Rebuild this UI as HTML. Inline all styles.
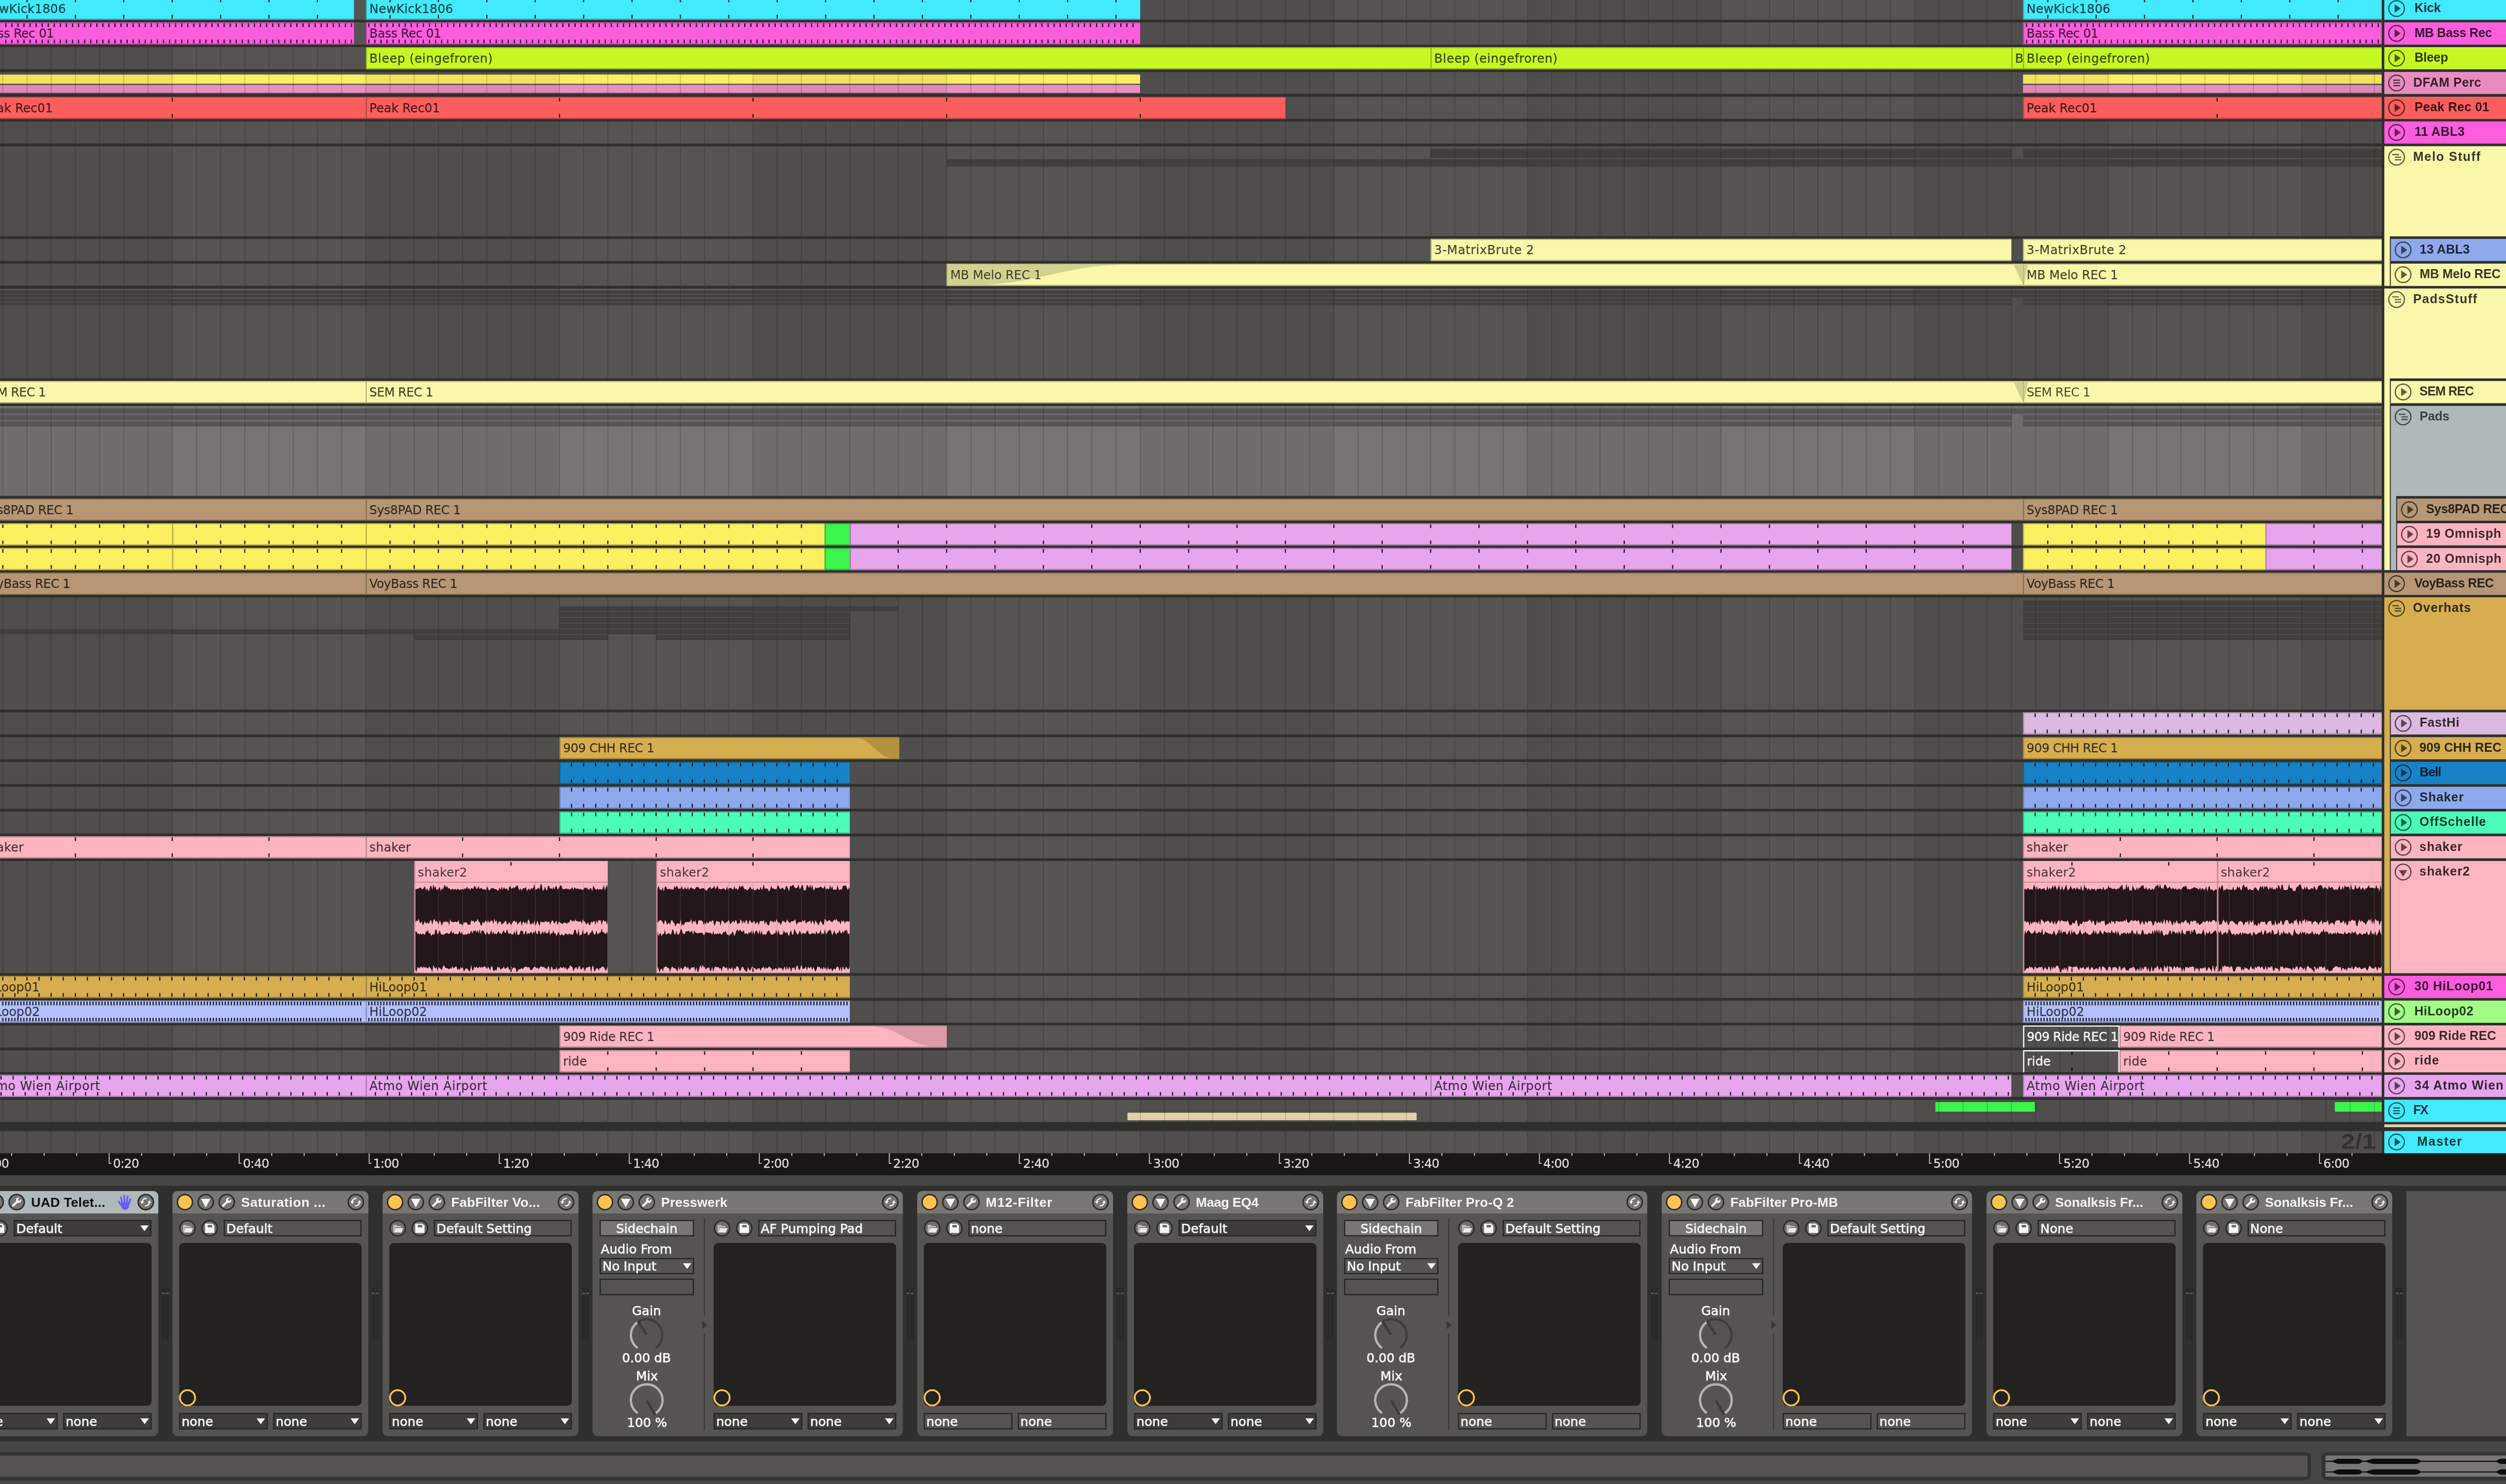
<!DOCTYPE html>
<html lang="en"><head><meta charset="utf-8"><title>Ableton Live - Arrangement</title>
<style>
html,body{margin:0;padding:0;background:#2f2f2d;overflow:hidden}
body{width:5035px;height:2961px}
svg{display:block;will-change:transform;filter:blur(.75px)}
.tr{font-family:"DejaVu Sans","Liberation Sans",sans-serif;font-weight:400}
.tb{font-family:"Liberation Sans","DejaVu Sans",sans-serif;font-weight:700}
text{white-space:pre}
</style></head><body>
<svg width="5035" height="2961" viewBox="0 0 5035 2961">
<rect x="0" y="0" width="5035" height="2301" fill="#2f2f2d"/>
<rect x="0" y="0" width="4752" height="39.5" fill="#4f4e4c"/>
<rect x="343.6" y="0" width="386.3" height="39.5" fill="#555452"/>
<rect x="1116.2" y="0" width="386.3" height="39.5" fill="#555452"/>
<rect x="1888.7" y="0" width="386.3" height="39.5" fill="#555452"/>
<rect x="2661.3" y="0" width="386.3" height="39.5" fill="#555452"/>
<rect x="3433.8" y="0" width="386.3" height="39.5" fill="#555452"/>
<rect x="4206.4" y="0" width="386.3" height="39.5" fill="#555452"/>
<rect x="0" y="44.6" width="4752" height="44.4" fill="#4f4e4c"/>
<rect x="343.6" y="44.6" width="386.3" height="44.4" fill="#555452"/>
<rect x="1116.2" y="44.6" width="386.3" height="44.4" fill="#555452"/>
<rect x="1888.7" y="44.6" width="386.3" height="44.4" fill="#555452"/>
<rect x="2661.3" y="44.6" width="386.3" height="44.4" fill="#555452"/>
<rect x="3433.8" y="44.6" width="386.3" height="44.4" fill="#555452"/>
<rect x="4206.4" y="44.6" width="386.3" height="44.4" fill="#555452"/>
<rect x="0" y="94.1" width="4752" height="44.2" fill="#4f4e4c"/>
<rect x="343.6" y="94.1" width="386.3" height="44.2" fill="#555452"/>
<rect x="1116.2" y="94.1" width="386.3" height="44.2" fill="#555452"/>
<rect x="1888.7" y="94.1" width="386.3" height="44.2" fill="#555452"/>
<rect x="2661.3" y="94.1" width="386.3" height="44.2" fill="#555452"/>
<rect x="3433.8" y="94.1" width="386.3" height="44.2" fill="#555452"/>
<rect x="4206.4" y="94.1" width="386.3" height="44.2" fill="#555452"/>
<rect x="0" y="143.5" width="4752" height="44" fill="#4f4e4c"/>
<rect x="343.6" y="143.5" width="386.3" height="44" fill="#555452"/>
<rect x="1116.2" y="143.5" width="386.3" height="44" fill="#555452"/>
<rect x="1888.7" y="143.5" width="386.3" height="44" fill="#555452"/>
<rect x="2661.3" y="143.5" width="386.3" height="44" fill="#555452"/>
<rect x="3433.8" y="143.5" width="386.3" height="44" fill="#555452"/>
<rect x="4206.4" y="143.5" width="386.3" height="44" fill="#555452"/>
<rect x="0" y="193" width="4752" height="44.4" fill="#4f4e4c"/>
<rect x="343.6" y="193" width="386.3" height="44.4" fill="#555452"/>
<rect x="1116.2" y="193" width="386.3" height="44.4" fill="#555452"/>
<rect x="1888.7" y="193" width="386.3" height="44.4" fill="#555452"/>
<rect x="2661.3" y="193" width="386.3" height="44.4" fill="#555452"/>
<rect x="3433.8" y="193" width="386.3" height="44.4" fill="#555452"/>
<rect x="4206.4" y="193" width="386.3" height="44.4" fill="#555452"/>
<rect x="0" y="242.3" width="4752" height="44.3" fill="#4f4e4c"/>
<rect x="343.6" y="242.3" width="386.3" height="44.3" fill="#555452"/>
<rect x="1116.2" y="242.3" width="386.3" height="44.3" fill="#555452"/>
<rect x="1888.7" y="242.3" width="386.3" height="44.3" fill="#555452"/>
<rect x="2661.3" y="242.3" width="386.3" height="44.3" fill="#555452"/>
<rect x="3433.8" y="242.3" width="386.3" height="44.3" fill="#555452"/>
<rect x="4206.4" y="242.3" width="386.3" height="44.3" fill="#555452"/>
<rect x="0" y="291.7" width="4752" height="179.8" fill="#4f4e4c"/>
<rect x="343.6" y="291.7" width="386.3" height="179.8" fill="#555452"/>
<rect x="1116.2" y="291.7" width="386.3" height="179.8" fill="#555452"/>
<rect x="1888.7" y="291.7" width="386.3" height="179.8" fill="#555452"/>
<rect x="2661.3" y="291.7" width="386.3" height="179.8" fill="#555452"/>
<rect x="3433.8" y="291.7" width="386.3" height="179.8" fill="#555452"/>
<rect x="4206.4" y="291.7" width="386.3" height="179.8" fill="#555452"/>
<rect x="0" y="476.7" width="4752" height="44.1" fill="#4f4e4c"/>
<rect x="343.6" y="476.7" width="386.3" height="44.1" fill="#555452"/>
<rect x="1116.2" y="476.7" width="386.3" height="44.1" fill="#555452"/>
<rect x="1888.7" y="476.7" width="386.3" height="44.1" fill="#555452"/>
<rect x="2661.3" y="476.7" width="386.3" height="44.1" fill="#555452"/>
<rect x="3433.8" y="476.7" width="386.3" height="44.1" fill="#555452"/>
<rect x="4206.4" y="476.7" width="386.3" height="44.1" fill="#555452"/>
<rect x="0" y="526" width="4752" height="44.5" fill="#4f4e4c"/>
<rect x="343.6" y="526" width="386.3" height="44.5" fill="#555452"/>
<rect x="1116.2" y="526" width="386.3" height="44.5" fill="#555452"/>
<rect x="1888.7" y="526" width="386.3" height="44.5" fill="#555452"/>
<rect x="2661.3" y="526" width="386.3" height="44.5" fill="#555452"/>
<rect x="3433.8" y="526" width="386.3" height="44.5" fill="#555452"/>
<rect x="4206.4" y="526" width="386.3" height="44.5" fill="#555452"/>
<rect x="0" y="575.6" width="4752" height="179.7" fill="#4f4e4c"/>
<rect x="343.6" y="575.6" width="386.3" height="179.7" fill="#555452"/>
<rect x="1116.2" y="575.6" width="386.3" height="179.7" fill="#555452"/>
<rect x="1888.7" y="575.6" width="386.3" height="179.7" fill="#555452"/>
<rect x="2661.3" y="575.6" width="386.3" height="179.7" fill="#555452"/>
<rect x="3433.8" y="575.6" width="386.3" height="179.7" fill="#555452"/>
<rect x="4206.4" y="575.6" width="386.3" height="179.7" fill="#555452"/>
<rect x="0" y="760.2" width="4752" height="44.3" fill="#4f4e4c"/>
<rect x="343.6" y="760.2" width="386.3" height="44.3" fill="#555452"/>
<rect x="1116.2" y="760.2" width="386.3" height="44.3" fill="#555452"/>
<rect x="1888.7" y="760.2" width="386.3" height="44.3" fill="#555452"/>
<rect x="2661.3" y="760.2" width="386.3" height="44.3" fill="#555452"/>
<rect x="3433.8" y="760.2" width="386.3" height="44.3" fill="#555452"/>
<rect x="4206.4" y="760.2" width="386.3" height="44.3" fill="#555452"/>
<rect x="0" y="809.8" width="4752" height="179.9" fill="#6e6d69"/>
<rect x="343.6" y="809.8" width="386.3" height="179.9" fill="#767571"/>
<rect x="1116.2" y="809.8" width="386.3" height="179.9" fill="#767571"/>
<rect x="1888.7" y="809.8" width="386.3" height="179.9" fill="#767571"/>
<rect x="2661.3" y="809.8" width="386.3" height="179.9" fill="#767571"/>
<rect x="3433.8" y="809.8" width="386.3" height="179.9" fill="#767571"/>
<rect x="4206.4" y="809.8" width="386.3" height="179.9" fill="#767571"/>
<rect x="0" y="994.9" width="4752" height="44.1" fill="#4f4e4c"/>
<rect x="343.6" y="994.9" width="386.3" height="44.1" fill="#555452"/>
<rect x="1116.2" y="994.9" width="386.3" height="44.1" fill="#555452"/>
<rect x="1888.7" y="994.9" width="386.3" height="44.1" fill="#555452"/>
<rect x="2661.3" y="994.9" width="386.3" height="44.1" fill="#555452"/>
<rect x="3433.8" y="994.9" width="386.3" height="44.1" fill="#555452"/>
<rect x="4206.4" y="994.9" width="386.3" height="44.1" fill="#555452"/>
<rect x="0" y="1044.1" width="4752" height="44.2" fill="#4f4e4c"/>
<rect x="343.6" y="1044.1" width="386.3" height="44.2" fill="#555452"/>
<rect x="1116.2" y="1044.1" width="386.3" height="44.2" fill="#555452"/>
<rect x="1888.7" y="1044.1" width="386.3" height="44.2" fill="#555452"/>
<rect x="2661.3" y="1044.1" width="386.3" height="44.2" fill="#555452"/>
<rect x="3433.8" y="1044.1" width="386.3" height="44.2" fill="#555452"/>
<rect x="4206.4" y="1044.1" width="386.3" height="44.2" fill="#555452"/>
<rect x="0" y="1093.5" width="4752" height="44" fill="#4f4e4c"/>
<rect x="343.6" y="1093.5" width="386.3" height="44" fill="#555452"/>
<rect x="1116.2" y="1093.5" width="386.3" height="44" fill="#555452"/>
<rect x="1888.7" y="1093.5" width="386.3" height="44" fill="#555452"/>
<rect x="2661.3" y="1093.5" width="386.3" height="44" fill="#555452"/>
<rect x="3433.8" y="1093.5" width="386.3" height="44" fill="#555452"/>
<rect x="4206.4" y="1093.5" width="386.3" height="44" fill="#555452"/>
<rect x="0" y="1142.7" width="4752" height="44.3" fill="#4f4e4c"/>
<rect x="343.6" y="1142.7" width="386.3" height="44.3" fill="#555452"/>
<rect x="1116.2" y="1142.7" width="386.3" height="44.3" fill="#555452"/>
<rect x="1888.7" y="1142.7" width="386.3" height="44.3" fill="#555452"/>
<rect x="2661.3" y="1142.7" width="386.3" height="44.3" fill="#555452"/>
<rect x="3433.8" y="1142.7" width="386.3" height="44.3" fill="#555452"/>
<rect x="4206.4" y="1142.7" width="386.3" height="44.3" fill="#555452"/>
<rect x="0" y="1191.8" width="4752" height="224.5" fill="#4f4e4c"/>
<rect x="343.6" y="1191.8" width="386.3" height="224.5" fill="#555452"/>
<rect x="1116.2" y="1191.8" width="386.3" height="224.5" fill="#555452"/>
<rect x="1888.7" y="1191.8" width="386.3" height="224.5" fill="#555452"/>
<rect x="2661.3" y="1191.8" width="386.3" height="224.5" fill="#555452"/>
<rect x="3433.8" y="1191.8" width="386.3" height="224.5" fill="#555452"/>
<rect x="4206.4" y="1191.8" width="386.3" height="224.5" fill="#555452"/>
<rect x="0" y="1421.3" width="4752" height="44.3" fill="#4f4e4c"/>
<rect x="343.6" y="1421.3" width="386.3" height="44.3" fill="#555452"/>
<rect x="1116.2" y="1421.3" width="386.3" height="44.3" fill="#555452"/>
<rect x="1888.7" y="1421.3" width="386.3" height="44.3" fill="#555452"/>
<rect x="2661.3" y="1421.3" width="386.3" height="44.3" fill="#555452"/>
<rect x="3433.8" y="1421.3" width="386.3" height="44.3" fill="#555452"/>
<rect x="4206.4" y="1421.3" width="386.3" height="44.3" fill="#555452"/>
<rect x="0" y="1470.8" width="4752" height="44.2" fill="#4f4e4c"/>
<rect x="343.6" y="1470.8" width="386.3" height="44.2" fill="#555452"/>
<rect x="1116.2" y="1470.8" width="386.3" height="44.2" fill="#555452"/>
<rect x="1888.7" y="1470.8" width="386.3" height="44.2" fill="#555452"/>
<rect x="2661.3" y="1470.8" width="386.3" height="44.2" fill="#555452"/>
<rect x="3433.8" y="1470.8" width="386.3" height="44.2" fill="#555452"/>
<rect x="4206.4" y="1470.8" width="386.3" height="44.2" fill="#555452"/>
<rect x="0" y="1520.1" width="4752" height="44.5" fill="#4f4e4c"/>
<rect x="343.6" y="1520.1" width="386.3" height="44.5" fill="#555452"/>
<rect x="1116.2" y="1520.1" width="386.3" height="44.5" fill="#555452"/>
<rect x="1888.7" y="1520.1" width="386.3" height="44.5" fill="#555452"/>
<rect x="2661.3" y="1520.1" width="386.3" height="44.5" fill="#555452"/>
<rect x="3433.8" y="1520.1" width="386.3" height="44.5" fill="#555452"/>
<rect x="4206.4" y="1520.1" width="386.3" height="44.5" fill="#555452"/>
<rect x="0" y="1569.8" width="4752" height="44.1" fill="#4f4e4c"/>
<rect x="343.6" y="1569.8" width="386.3" height="44.1" fill="#555452"/>
<rect x="1116.2" y="1569.8" width="386.3" height="44.1" fill="#555452"/>
<rect x="1888.7" y="1569.8" width="386.3" height="44.1" fill="#555452"/>
<rect x="2661.3" y="1569.8" width="386.3" height="44.1" fill="#555452"/>
<rect x="3433.8" y="1569.8" width="386.3" height="44.1" fill="#555452"/>
<rect x="4206.4" y="1569.8" width="386.3" height="44.1" fill="#555452"/>
<rect x="0" y="1619.1" width="4752" height="44.3" fill="#4f4e4c"/>
<rect x="343.6" y="1619.1" width="386.3" height="44.3" fill="#555452"/>
<rect x="1116.2" y="1619.1" width="386.3" height="44.3" fill="#555452"/>
<rect x="1888.7" y="1619.1" width="386.3" height="44.3" fill="#555452"/>
<rect x="2661.3" y="1619.1" width="386.3" height="44.3" fill="#555452"/>
<rect x="3433.8" y="1619.1" width="386.3" height="44.3" fill="#555452"/>
<rect x="4206.4" y="1619.1" width="386.3" height="44.3" fill="#555452"/>
<rect x="0" y="1668.6" width="4752" height="44" fill="#4f4e4c"/>
<rect x="343.6" y="1668.6" width="386.3" height="44" fill="#555452"/>
<rect x="1116.2" y="1668.6" width="386.3" height="44" fill="#555452"/>
<rect x="1888.7" y="1668.6" width="386.3" height="44" fill="#555452"/>
<rect x="2661.3" y="1668.6" width="386.3" height="44" fill="#555452"/>
<rect x="3433.8" y="1668.6" width="386.3" height="44" fill="#555452"/>
<rect x="4206.4" y="1668.6" width="386.3" height="44" fill="#555452"/>
<rect x="0" y="1717.9" width="4752" height="223.9" fill="#4f4e4c"/>
<rect x="343.6" y="1717.9" width="386.3" height="223.9" fill="#555452"/>
<rect x="1116.2" y="1717.9" width="386.3" height="223.9" fill="#555452"/>
<rect x="1888.7" y="1717.9" width="386.3" height="223.9" fill="#555452"/>
<rect x="2661.3" y="1717.9" width="386.3" height="223.9" fill="#555452"/>
<rect x="3433.8" y="1717.9" width="386.3" height="223.9" fill="#555452"/>
<rect x="4206.4" y="1717.9" width="386.3" height="223.9" fill="#555452"/>
<rect x="0" y="1947" width="4752" height="44.4" fill="#4f4e4c"/>
<rect x="343.6" y="1947" width="386.3" height="44.4" fill="#555452"/>
<rect x="1116.2" y="1947" width="386.3" height="44.4" fill="#555452"/>
<rect x="1888.7" y="1947" width="386.3" height="44.4" fill="#555452"/>
<rect x="2661.3" y="1947" width="386.3" height="44.4" fill="#555452"/>
<rect x="3433.8" y="1947" width="386.3" height="44.4" fill="#555452"/>
<rect x="4206.4" y="1947" width="386.3" height="44.4" fill="#555452"/>
<rect x="0" y="1996.5" width="4752" height="44.3" fill="#4f4e4c"/>
<rect x="343.6" y="1996.5" width="386.3" height="44.3" fill="#555452"/>
<rect x="1116.2" y="1996.5" width="386.3" height="44.3" fill="#555452"/>
<rect x="1888.7" y="1996.5" width="386.3" height="44.3" fill="#555452"/>
<rect x="2661.3" y="1996.5" width="386.3" height="44.3" fill="#555452"/>
<rect x="3433.8" y="1996.5" width="386.3" height="44.3" fill="#555452"/>
<rect x="4206.4" y="1996.5" width="386.3" height="44.3" fill="#555452"/>
<rect x="0" y="2046" width="4752" height="44.3" fill="#4f4e4c"/>
<rect x="343.6" y="2046" width="386.3" height="44.3" fill="#555452"/>
<rect x="1116.2" y="2046" width="386.3" height="44.3" fill="#555452"/>
<rect x="1888.7" y="2046" width="386.3" height="44.3" fill="#555452"/>
<rect x="2661.3" y="2046" width="386.3" height="44.3" fill="#555452"/>
<rect x="3433.8" y="2046" width="386.3" height="44.3" fill="#555452"/>
<rect x="4206.4" y="2046" width="386.3" height="44.3" fill="#555452"/>
<rect x="0" y="2095.3" width="4752" height="44.3" fill="#4f4e4c"/>
<rect x="343.6" y="2095.3" width="386.3" height="44.3" fill="#555452"/>
<rect x="1116.2" y="2095.3" width="386.3" height="44.3" fill="#555452"/>
<rect x="1888.7" y="2095.3" width="386.3" height="44.3" fill="#555452"/>
<rect x="2661.3" y="2095.3" width="386.3" height="44.3" fill="#555452"/>
<rect x="3433.8" y="2095.3" width="386.3" height="44.3" fill="#555452"/>
<rect x="4206.4" y="2095.3" width="386.3" height="44.3" fill="#555452"/>
<rect x="0" y="2144.6" width="4752" height="44.2" fill="#4f4e4c"/>
<rect x="343.6" y="2144.6" width="386.3" height="44.2" fill="#555452"/>
<rect x="1116.2" y="2144.6" width="386.3" height="44.2" fill="#555452"/>
<rect x="1888.7" y="2144.6" width="386.3" height="44.2" fill="#555452"/>
<rect x="2661.3" y="2144.6" width="386.3" height="44.2" fill="#555452"/>
<rect x="3433.8" y="2144.6" width="386.3" height="44.2" fill="#555452"/>
<rect x="4206.4" y="2144.6" width="386.3" height="44.2" fill="#555452"/>
<rect x="0" y="2194.2" width="4752" height="44.5" fill="#4f4e4c"/>
<rect x="343.6" y="2194.2" width="386.3" height="44.5" fill="#555452"/>
<rect x="1116.2" y="2194.2" width="386.3" height="44.5" fill="#555452"/>
<rect x="1888.7" y="2194.2" width="386.3" height="44.5" fill="#555452"/>
<rect x="2661.3" y="2194.2" width="386.3" height="44.5" fill="#555452"/>
<rect x="3433.8" y="2194.2" width="386.3" height="44.5" fill="#555452"/>
<rect x="4206.4" y="2194.2" width="386.3" height="44.5" fill="#555452"/>
<rect x="0" y="2256.7" width="4752" height="44.3" fill="#4f4e4c"/>
<rect x="343.6" y="2256.7" width="386.3" height="44.3" fill="#555452"/>
<rect x="1116.2" y="2256.7" width="386.3" height="44.3" fill="#555452"/>
<rect x="1888.7" y="2256.7" width="386.3" height="44.3" fill="#555452"/>
<rect x="2661.3" y="2256.7" width="386.3" height="44.3" fill="#555452"/>
<rect x="3433.8" y="2256.7" width="386.3" height="44.3" fill="#555452"/>
<rect x="4206.4" y="2256.7" width="386.3" height="44.3" fill="#555452"/>
<rect x="0" y="148.8" width="2275" height="18.2" fill="#f1e45a"/>
<rect x="343.6" y="148.8" width="386.3" height="18.2" fill="#fbef5f"/>
<rect x="1116.2" y="148.8" width="386.3" height="18.2" fill="#fbef5f"/>
<rect x="1888.7" y="148.8" width="386.3" height="18.2" fill="#fbef5f"/>
<rect x="4036.4" y="148.8" width="715.6" height="18.2" fill="#f1e45a"/>
<rect x="4206.4" y="148.8" width="386.3" height="18.2" fill="#fbef5f"/>
<rect x="0" y="169.5" width="2275" height="15.6" fill="#e088b8"/>
<rect x="343.6" y="169.5" width="386.3" height="15.6" fill="#ec8ec0"/>
<rect x="1116.2" y="169.5" width="386.3" height="15.6" fill="#ec8ec0"/>
<rect x="1888.7" y="169.5" width="386.3" height="15.6" fill="#ec8ec0"/>
<rect x="4036.4" y="169.5" width="715.6" height="15.6" fill="#e088b8"/>
<rect x="4206.4" y="169.5" width="386.3" height="15.6" fill="#ec8ec0"/>
<rect x="2854.4" y="297" width="1158.8" height="18.2" fill="#403f3d"/>
<rect x="4036.4" y="297" width="715.6" height="18.2" fill="#403f3d"/>
<rect x="1888.7" y="317.6" width="2863.3" height="15" fill="#403f3d"/>
<rect x="0" y="580" width="4752" height="6.4" fill="#403f3d"/>
<rect x="0" y="588.2" width="4752" height="5.3" fill="#403f3d"/>
<rect x="0" y="596" width="4013.3" height="5.6" fill="#403f3d"/>
<rect x="4036.4" y="596" width="715.6" height="5.6" fill="#403f3d"/>
<rect x="0" y="603.5" width="4013.3" height="5.7" fill="#403f3d"/>
<rect x="4036.4" y="603.5" width="715.6" height="5.7" fill="#403f3d"/>
<rect x="0" y="815.2" width="4752" height="10.4" fill="#575652"/>
<rect x="0" y="828" width="4013.3" height="10.3" fill="#575652"/>
<rect x="4036.4" y="828" width="715.6" height="10.3" fill="#575652"/>
<rect x="0" y="840.8" width="4013.3" height="10.2" fill="#575652"/>
<rect x="4036.4" y="840.8" width="715.6" height="10.2" fill="#575652"/>
<rect x="4036.4" y="1198.3" width="715.6" height="10" fill="#403f3d"/>
<rect x="4036.4" y="1209.8" width="715.6" height="10" fill="#403f3d"/>
<rect x="4036.4" y="1221.2" width="715.6" height="10" fill="#403f3d"/>
<rect x="4036.4" y="1232.6" width="715.6" height="10" fill="#403f3d"/>
<rect x="4036.4" y="1244.1" width="715.6" height="10" fill="#403f3d"/>
<rect x="4036.4" y="1255.5" width="715.6" height="10" fill="#403f3d"/>
<rect x="4036.4" y="1267" width="715.6" height="10" fill="#403f3d"/>
<rect x="1116.2" y="1209.8" width="676" height="10" fill="#403f3d"/>
<rect x="1116.2" y="1221.2" width="579.4" height="10" fill="#403f3d"/>
<rect x="1116.2" y="1232.6" width="579.4" height="10" fill="#403f3d"/>
<rect x="1116.2" y="1244.1" width="579.4" height="10" fill="#403f3d"/>
<rect x="0" y="1255.5" width="1695.6" height="10" fill="#403f3d"/>
<rect x="826.4" y="1267" width="386.3" height="10" fill="#403f3d"/>
<rect x="1309.3" y="1267" width="386.3" height="10" fill="#403f3d"/>
<rect x="3861.5" y="2199" width="198.5" height="19" fill="#3bf54b"/>
<rect x="4658.5" y="2199" width="93.5" height="19" fill="#3bf54b"/>
<rect x="2249.5" y="2220.2" width="577" height="15" fill="#e4d0a8"/>
<path d="M5.6 0V2301M53.9 0V2301M102.2 0V2301M150.5 0V2301M198.7 0V2301M247 0V2301M295.3 0V2301M343.6 0V2301M391.9 0V2301M440.2 0V2301M488.4 0V2301M536.7 0V2301M585 0V2301M633.3 0V2301M681.6 0V2301M729.9 0V2301M778.2 0V2301M826.4 0V2301M874.7 0V2301M923 0V2301M971.3 0V2301M1019.6 0V2301M1067.9 0V2301M1116.2 0V2301M1164.4 0V2301M1212.7 0V2301M1261 0V2301M1309.3 0V2301M1357.6 0V2301M1405.9 0V2301M1454.1 0V2301M1502.4 0V2301M1550.7 0V2301M1599 0V2301M1647.3 0V2301M1695.6 0V2301M1743.9 0V2301M1792.1 0V2301M1840.4 0V2301M1888.7 0V2301M1937 0V2301M1985.3 0V2301M2033.6 0V2301M2081.9 0V2301M2130.1 0V2301M2178.4 0V2301M2226.7 0V2301M2275 0V2301M2323.3 0V2301M2371.6 0V2301M2419.8 0V2301M2468.1 0V2301M2516.4 0V2301M2564.7 0V2301M2613 0V2301M2661.3 0V2301M2709.6 0V2301M2757.8 0V2301M2806.1 0V2301M2854.4 0V2301M2902.7 0V2301M2951 0V2301M2999.3 0V2301M3047.6 0V2301M3095.8 0V2301M3144.1 0V2301M3192.4 0V2301M3240.7 0V2301M3289 0V2301M3337.3 0V2301M3385.5 0V2301M3433.8 0V2301M3482.1 0V2301M3530.4 0V2301M3578.7 0V2301M3627 0V2301M3675.3 0V2301M3723.5 0V2301M3771.8 0V2301M3820.1 0V2301M3868.4 0V2301M3916.7 0V2301M3965 0V2301M4013.3 0V2301M4061.5 0V2301M4109.8 0V2301M4158.1 0V2301M4206.4 0V2301M4254.7 0V2301M4303 0V2301M4351.2 0V2301M4399.5 0V2301M4447.8 0V2301M4496.1 0V2301M4544.4 0V2301M4592.7 0V2301M4641 0V2301M4689.2 0V2301M4737.5 0V2301" stroke="#000" stroke-opacity=".17" stroke-width="1.9" fill="none"/>
<rect x="0" y="39.5" width="4752" height="5.1" fill="#2f2f2d"/>
<rect x="0" y="89" width="4752" height="5.1" fill="#2f2f2d"/>
<rect x="0" y="138.3" width="4752" height="5.2" fill="#2f2f2d"/>
<rect x="0" y="187.5" width="4752" height="5.5" fill="#2f2f2d"/>
<rect x="0" y="237.4" width="4752" height="4.9" fill="#2f2f2d"/>
<rect x="0" y="286.6" width="4752" height="5.1" fill="#2f2f2d"/>
<rect x="0" y="471.5" width="4752" height="5.2" fill="#2f2f2d"/>
<rect x="0" y="520.8" width="4752" height="5.2" fill="#2f2f2d"/>
<rect x="0" y="570.5" width="4752" height="5.1" fill="#2f2f2d"/>
<rect x="0" y="755.3" width="4752" height="4.9" fill="#2f2f2d"/>
<rect x="0" y="804.5" width="4752" height="5.3" fill="#2f2f2d"/>
<rect x="0" y="989.7" width="4752" height="5.2" fill="#2f2f2d"/>
<rect x="0" y="1039" width="4752" height="5.1" fill="#2f2f2d"/>
<rect x="0" y="1088.3" width="4752" height="5.2" fill="#2f2f2d"/>
<rect x="0" y="1137.5" width="4752" height="5.2" fill="#2f2f2d"/>
<rect x="0" y="1187" width="4752" height="4.8" fill="#2f2f2d"/>
<rect x="0" y="1416.3" width="4752" height="5" fill="#2f2f2d"/>
<rect x="0" y="1465.6" width="4752" height="5.2" fill="#2f2f2d"/>
<rect x="0" y="1515" width="4752" height="5.1" fill="#2f2f2d"/>
<rect x="0" y="1564.6" width="4752" height="5.2" fill="#2f2f2d"/>
<rect x="0" y="1613.9" width="4752" height="5.2" fill="#2f2f2d"/>
<rect x="0" y="1663.4" width="4752" height="5.2" fill="#2f2f2d"/>
<rect x="0" y="1712.6" width="4752" height="5.3" fill="#2f2f2d"/>
<rect x="0" y="1941.8" width="4752" height="5.2" fill="#2f2f2d"/>
<rect x="0" y="1991.4" width="4752" height="5.1" fill="#2f2f2d"/>
<rect x="0" y="2040.8" width="4752" height="5.2" fill="#2f2f2d"/>
<rect x="0" y="2090.3" width="4752" height="5" fill="#2f2f2d"/>
<rect x="0" y="2139.6" width="4752" height="5" fill="#2f2f2d"/>
<rect x="0" y="2188.8" width="4752" height="5.4" fill="#2f2f2d"/>
<rect x="0" y="2238.7" width="4752" height="18" fill="#2f2f2d"/>
<rect x="4752" y="0" width="5.2" height="2301" fill="#2f2f2d"/>
<rect x="0" y="0" width="706.3" height="39.5" fill="#41eafc"/>
<rect x="0" y="37.3" width="706.3" height="2.2" fill="#2ea8b5"/>
<clipPath id="c295"><rect x="0" y="0" width="705.8" height="39.5"/></clipPath>
<text class="tr" x="-35.5" y="25.6" font-size="24.4" fill="rgba(0,0,0,.72)" textLength="167" clip-path="url(#c295)" stroke="#000" stroke-opacity=".45" stroke-width=".35" paint-order="stroke">NewKick1806</text>
<rect x="729.9" y="0" width="1545.1" height="39.5" fill="#41eafc"/>
<rect x="729.9" y="37.3" width="1545.1" height="2.2" fill="#2ea8b5"/>
<rect x="729.9" y="0" width="2" height="39.5" fill="#2ea8b5"/>
<clipPath id="c300"><rect x="729.9" y="0" width="1544.6" height="39.5"/></clipPath>
<text class="tr" x="737.1" y="25.6" font-size="24.4" fill="rgba(0,0,0,.72)" textLength="167" clip-path="url(#c300)" stroke="#000" stroke-opacity=".45" stroke-width=".35" paint-order="stroke">NewKick1806</text>
<rect x="4036.4" y="0" width="715.6" height="39.5" fill="#41eafc"/>
<rect x="4036.4" y="37.3" width="715.6" height="2.2" fill="#2ea8b5"/>
<rect x="4036.4" y="0" width="2" height="39.5" fill="#2ea8b5"/>
<clipPath id="c305"><rect x="4036.4" y="0" width="715.1" height="39.5"/></clipPath>
<text class="tr" x="4043.6" y="25.6" font-size="24.4" fill="rgba(0,0,0,.72)" textLength="167" clip-path="url(#c305)" stroke="#000" stroke-opacity=".45" stroke-width=".35" paint-order="stroke">NewKick1806</text>
<path d="M53.9 -2.8v7.2M53.9 29.6v7.2M150.5 -2.8v7.2M150.5 29.6v7.2M247 -2.8v7.2M247 29.6v7.2M343.6 -2.8v7.2M343.6 29.6v7.2M440.2 -2.8v7.2M440.2 29.6v7.2M536.7 -2.8v7.2M536.7 29.6v7.2M633.3 -2.8v7.2M633.3 29.6v7.2M778.2 -2.8v7.2M778.2 29.6v7.2M874.7 -2.8v7.2M874.7 29.6v7.2M971.3 -2.8v7.2M971.3 29.6v7.2M1067.9 -2.8v7.2M1067.9 29.6v7.2M1164.4 -2.8v7.2M1164.4 29.6v7.2M1261 -2.8v7.2M1261 29.6v7.2M1357.6 -2.8v7.2M1357.6 29.6v7.2M1454.1 -2.8v7.2M1454.1 29.6v7.2M1550.7 -2.8v7.2M1550.7 29.6v7.2M1647.3 -2.8v7.2M1647.3 29.6v7.2M1743.9 -2.8v7.2M1743.9 29.6v7.2M1840.4 -2.8v7.2M1840.4 29.6v7.2M1937 -2.8v7.2M1937 29.6v7.2M2033.6 -2.8v7.2M2033.6 29.6v7.2M2130.1 -2.8v7.2M2130.1 29.6v7.2M2226.7 -2.8v7.2M2226.7 29.6v7.2M4085.7 -2.8v7.2M4085.7 29.6v7.2M4182.3 -2.8v7.2M4182.3 29.6v7.2M4278.8 -2.8v7.2M4278.8 29.6v7.2M4375.4 -2.8v7.2M4375.4 29.6v7.2M4472 -2.8v7.2M4472 29.6v7.2M4568.5 -2.8v7.2M4568.5 29.6v7.2M4665.1 -2.8v7.2M4665.1 29.6v7.2" stroke="#0a0a0a" stroke-opacity=".9" stroke-width="2.4" fill="none"/>
<rect x="0" y="44.6" width="706.3" height="44.4" fill="#fc5ddd"/>
<rect x="0" y="44.6" width="706.3" height="2" fill="#bf46a7"/>
<rect x="0" y="86.8" width="706.3" height="2.2" fill="#b5429f"/>
<clipPath id="c311"><rect x="0" y="44.6" width="705.8" height="44.4"/></clipPath>
<text class="tr" x="-35.5" y="75.2" font-size="24.4" fill="rgba(0,0,0,.72)" textLength="143.5" clip-path="url(#c311)" stroke="#000" stroke-opacity=".45" stroke-width=".35" paint-order="stroke">Bass Rec 01</text>
<rect x="729.9" y="44.6" width="1545.1" height="44.4" fill="#fc5ddd"/>
<rect x="729.9" y="44.6" width="1545.1" height="2" fill="#bf46a7"/>
<rect x="729.9" y="86.8" width="1545.1" height="2.2" fill="#b5429f"/>
<rect x="729.9" y="44.6" width="2" height="44.4" fill="#b5429f"/>
<clipPath id="c317"><rect x="729.9" y="44.6" width="1544.6" height="44.4"/></clipPath>
<text class="tr" x="737.1" y="75.2" font-size="24.4" fill="rgba(0,0,0,.72)" textLength="143.5" clip-path="url(#c317)" stroke="#000" stroke-opacity=".45" stroke-width=".35" paint-order="stroke">Bass Rec 01</text>
<rect x="4036.4" y="44.6" width="715.6" height="44.4" fill="#fc5ddd"/>
<rect x="4036.4" y="44.6" width="715.6" height="2" fill="#bf46a7"/>
<rect x="4036.4" y="86.8" width="715.6" height="2.2" fill="#b5429f"/>
<rect x="4036.4" y="44.6" width="2" height="44.4" fill="#b5429f"/>
<clipPath id="c323"><rect x="4036.4" y="44.6" width="715.1" height="44.4"/></clipPath>
<text class="tr" x="4043.6" y="75.2" font-size="24.4" fill="rgba(0,0,0,.72)" textLength="143.5" clip-path="url(#c323)" stroke="#000" stroke-opacity=".45" stroke-width=".35" paint-order="stroke">Bass Rec 01</text>
<line x1="10.4" y1="50.4" x2="702.3" y2="50.4" stroke="#0a0a0a" stroke-opacity=".9" stroke-width="7.2" stroke-dasharray="2.4 9.7"/>
<line x1="10.4" y1="82.7" x2="702.3" y2="82.7" stroke="#0a0a0a" stroke-opacity=".9" stroke-width="7.2" stroke-dasharray="2.4 9.7"/>
<line x1="734.7" y1="50.4" x2="2271" y2="50.4" stroke="#0a0a0a" stroke-opacity=".9" stroke-width="7.2" stroke-dasharray="2.4 9.7"/>
<line x1="734.7" y1="82.7" x2="2271" y2="82.7" stroke="#0a0a0a" stroke-opacity=".9" stroke-width="7.2" stroke-dasharray="2.4 9.7"/>
<line x1="4042.2" y1="50.4" x2="4748" y2="50.4" stroke="#0a0a0a" stroke-opacity=".9" stroke-width="7.2" stroke-dasharray="2.4 9.7"/>
<line x1="4042.2" y1="82.7" x2="4748" y2="82.7" stroke="#0a0a0a" stroke-opacity=".9" stroke-width="7.2" stroke-dasharray="2.4 9.7"/>
<rect x="729.9" y="94.1" width="2124.5" height="44.2" fill="#c5f823"/>
<rect x="729.9" y="94.1" width="2124.5" height="2" fill="#95bc1a"/>
<rect x="729.9" y="136.1" width="2124.5" height="2.2" fill="#8db219"/>
<rect x="729.9" y="94.1" width="2" height="44.2" fill="#8db219"/>
<clipPath id="c335"><rect x="729.9" y="94.1" width="2124" height="44.2"/></clipPath>
<text class="tr" x="737.1" y="124.7" font-size="24.4" fill="rgba(0,0,0,.72)" textLength="246" clip-path="url(#c335)" stroke="#000" stroke-opacity=".45" stroke-width=".35" paint-order="stroke">Bleep (eingefroren)</text>
<rect x="2854.4" y="94.1" width="1158.8" height="44.2" fill="#c5f823"/>
<rect x="2854.4" y="94.1" width="1158.8" height="2" fill="#95bc1a"/>
<rect x="2854.4" y="136.1" width="1158.8" height="2.2" fill="#8db219"/>
<rect x="2854.4" y="94.1" width="2" height="44.2" fill="#8db219"/>
<clipPath id="c341"><rect x="2854.4" y="94.1" width="1158.3" height="44.2"/></clipPath>
<text class="tr" x="2861.6" y="124.7" font-size="24.4" fill="rgba(0,0,0,.72)" textLength="246" clip-path="url(#c341)" stroke="#000" stroke-opacity=".45" stroke-width=".35" paint-order="stroke">Bleep (eingefroren)</text>
<rect x="4013.3" y="94.1" width="23.1" height="44.2" fill="#c5f823"/>
<rect x="4013.3" y="94.1" width="23.1" height="2" fill="#95bc1a"/>
<rect x="4013.3" y="136.1" width="23.1" height="2.2" fill="#8db219"/>
<rect x="4013.3" y="94.1" width="2" height="44.2" fill="#8db219"/>
<clipPath id="c347"><rect x="4013.3" y="94.1" width="22.6" height="44.2"/></clipPath>
<text class="tr" x="4020.5" y="124.7" font-size="24.4" fill="rgba(0,0,0,.72)" textLength="246" clip-path="url(#c347)" stroke="#000" stroke-opacity=".45" stroke-width=".35" paint-order="stroke">Bleep (eingefroren)</text>
<rect x="4036.4" y="94.1" width="715.6" height="44.2" fill="#c5f823"/>
<rect x="4036.4" y="94.1" width="715.6" height="2" fill="#95bc1a"/>
<rect x="4036.4" y="136.1" width="715.6" height="2.2" fill="#8db219"/>
<rect x="4036.4" y="94.1" width="2" height="44.2" fill="#8db219"/>
<clipPath id="c353"><rect x="4036.4" y="94.1" width="715.1" height="44.2"/></clipPath>
<text class="tr" x="4043.6" y="124.7" font-size="24.4" fill="rgba(0,0,0,.72)" textLength="246" clip-path="url(#c353)" stroke="#000" stroke-opacity=".45" stroke-width=".35" paint-order="stroke">Bleep (eingefroren)</text>
<rect x="0" y="193" width="729.9" height="44.4" fill="#fc5e5e"/>
<rect x="0" y="193" width="729.9" height="2" fill="#bf4747"/>
<rect x="0" y="235.2" width="729.9" height="2.2" fill="#b54343"/>
<clipPath id="c358"><rect x="0" y="193" width="729.4" height="44.4"/></clipPath>
<text class="tr" x="-35.5" y="223.6" font-size="24.4" fill="rgba(0,0,0,.72)" textLength="141" clip-path="url(#c358)" stroke="#000" stroke-opacity=".45" stroke-width=".35" paint-order="stroke">Peak Rec01</text>
<rect x="729.9" y="193" width="1834.8" height="44.4" fill="#fc5e5e"/>
<rect x="729.9" y="193" width="1834.8" height="2" fill="#bf4747"/>
<rect x="729.9" y="235.2" width="1834.8" height="2.2" fill="#b54343"/>
<rect x="729.9" y="193" width="2" height="44.4" fill="#b54343"/>
<clipPath id="c364"><rect x="729.9" y="193" width="1834.3" height="44.4"/></clipPath>
<text class="tr" x="737.1" y="223.6" font-size="24.4" fill="rgba(0,0,0,.72)" textLength="141" clip-path="url(#c364)" stroke="#000" stroke-opacity=".45" stroke-width=".35" paint-order="stroke">Peak Rec01</text>
<rect x="4036.4" y="193" width="715.6" height="44.4" fill="#fc5e5e"/>
<rect x="4036.4" y="193" width="715.6" height="2" fill="#bf4747"/>
<rect x="4036.4" y="235.2" width="715.6" height="2.2" fill="#b54343"/>
<rect x="4036.4" y="193" width="2" height="44.4" fill="#b54343"/>
<clipPath id="c370"><rect x="4036.4" y="193" width="715.1" height="44.4"/></clipPath>
<text class="tr" x="4043.6" y="223.6" font-size="24.4" fill="rgba(0,0,0,.72)" textLength="141" clip-path="url(#c370)" stroke="#000" stroke-opacity=".45" stroke-width=".35" paint-order="stroke">Peak Rec01</text>
<path d="M343.6 195.2v7.2M343.6 227.5v7.2M1116.2 195.2v7.2M1116.2 227.5v7.2M1502.4 195.2v7.2M1502.4 227.5v7.2M1888.7 195.2v7.2M1888.7 227.5v7.2M2275 195.2v7.2M2275 227.5v7.2M4423.7 195.2v7.2M4423.7 227.5v7.2" stroke="#0a0a0a" stroke-opacity=".9" stroke-width="2.4" fill="none"/>
<rect x="2854.4" y="476.7" width="1158.8" height="44.1" fill="#f9f7a9"/>
<rect x="2854.4" y="476.7" width="1158.8" height="2" fill="#bdbb80"/>
<rect x="2854.4" y="518.6" width="1158.8" height="2.2" fill="#b3b179"/>
<rect x="2854.4" y="476.7" width="2" height="44.1" fill="#b3b179"/>
<clipPath id="c377"><rect x="2854.4" y="476.7" width="1158.3" height="44.1"/></clipPath>
<text class="tr" x="2861.6" y="507.3" font-size="24.4" fill="rgba(0,0,0,.72)" textLength="199" clip-path="url(#c377)" stroke="#000" stroke-opacity=".45" stroke-width=".35" paint-order="stroke">3-MatrixBrute 2</text>
<rect x="4036.4" y="476.7" width="715.6" height="44.1" fill="#f9f7a9"/>
<rect x="4036.4" y="476.7" width="715.6" height="2" fill="#bdbb80"/>
<rect x="4036.4" y="518.6" width="715.6" height="2.2" fill="#b3b179"/>
<rect x="4036.4" y="476.7" width="2" height="44.1" fill="#b3b179"/>
<clipPath id="c383"><rect x="4036.4" y="476.7" width="715.1" height="44.1"/></clipPath>
<text class="tr" x="4043.6" y="507.3" font-size="24.4" fill="rgba(0,0,0,.72)" textLength="199" clip-path="url(#c383)" stroke="#000" stroke-opacity=".45" stroke-width=".35" paint-order="stroke">3-MatrixBrute 2</text>
<rect x="1888.7" y="526" width="2147.7" height="44.5" fill="#f9f7a9"/>
<rect x="1888.7" y="526" width="2147.7" height="2" fill="#bdbb80"/>
<rect x="1888.7" y="568.3" width="2147.7" height="2.2" fill="#b3b179"/>
<rect x="1888.7" y="526" width="2" height="44.5" fill="#b3b179"/>
<path d="M1890.7 568.5H1940C2070.2 568.5 2119.8 528 2250 528H1890.7z" fill="#d3d18f"/>
<polygon points="4017,527 4036.4,527 4036.4,568.5" fill="#d3d18f"/>
<text class="tr" x="1895.9" y="556.6" font-size="24.4" fill="rgba(0,0,0,.72)" textLength="182.5">MB Melo REC 1</text>
<rect x="4036.4" y="526" width="715.6" height="44.5" fill="#f9f7a9"/>
<rect x="4036.4" y="526" width="715.6" height="2" fill="#bdbb80"/>
<rect x="4036.4" y="568.3" width="715.6" height="2.2" fill="#b3b179"/>
<rect x="4036.4" y="526" width="2" height="44.5" fill="#b3b179"/>
<clipPath id="c396"><rect x="4036.4" y="526" width="715.1" height="44.5"/></clipPath>
<text class="tr" x="4043.6" y="556.6" font-size="24.4" fill="rgba(0,0,0,.72)" textLength="182.5" clip-path="url(#c396)" stroke="#000" stroke-opacity=".45" stroke-width=".35" paint-order="stroke">MB Melo REC 1</text>
<polygon points="4038.4,527 4046.4,527 4038.4,568.5" fill="#d3d18f"/>
<rect x="0" y="760.2" width="729.9" height="44.3" fill="#f9f7a9"/>
<rect x="0" y="760.2" width="729.9" height="2" fill="#bdbb80"/>
<rect x="0" y="802.3" width="729.9" height="2.2" fill="#b3b179"/>
<clipPath id="c402"><rect x="0" y="760.2" width="729.4" height="44.3"/></clipPath>
<text class="tr" x="-35.5" y="790.8" font-size="24.4" fill="rgba(0,0,0,.72)" textLength="127.5" clip-path="url(#c402)" stroke="#000" stroke-opacity=".45" stroke-width=".35" paint-order="stroke">SEM REC 1</text>
<rect x="729.9" y="760.2" width="3306.5" height="44.3" fill="#f9f7a9"/>
<rect x="729.9" y="760.2" width="3306.5" height="2" fill="#bdbb80"/>
<rect x="729.9" y="802.3" width="3306.5" height="2.2" fill="#b3b179"/>
<rect x="729.9" y="760.2" width="2" height="44.3" fill="#b3b179"/>
<clipPath id="c408"><rect x="729.9" y="760.2" width="3306" height="44.3"/></clipPath>
<text class="tr" x="737.1" y="790.8" font-size="24.4" fill="rgba(0,0,0,.72)" textLength="127.5" clip-path="url(#c408)" stroke="#000" stroke-opacity=".45" stroke-width=".35" paint-order="stroke">SEM REC 1</text>
<polygon points="4017,761.2 4036.4,761.2 4036.4,802.5" fill="#d3d18f"/>
<rect x="4036.4" y="760.2" width="715.6" height="44.3" fill="#f9f7a9"/>
<rect x="4036.4" y="760.2" width="715.6" height="2" fill="#bdbb80"/>
<rect x="4036.4" y="802.3" width="715.6" height="2.2" fill="#b3b179"/>
<rect x="4036.4" y="760.2" width="2" height="44.3" fill="#b3b179"/>
<polygon points="4038.4,761.2 4046.4,761.2 4038.4,802.5" fill="#d3d18f"/>
<text class="tr" x="4043.6" y="790.8" font-size="24.4" fill="rgba(0,0,0,.72)" textLength="127.5">SEM REC 1</text>
<rect x="0" y="994.9" width="729.9" height="44.1" fill="#b69674"/>
<rect x="0" y="994.9" width="729.9" height="2" fill="#8a7258"/>
<rect x="0" y="1036.8" width="729.9" height="2.2" fill="#836c53"/>
<clipPath id="c420"><rect x="0" y="994.9" width="729.4" height="44.1"/></clipPath>
<text class="tr" x="-35.5" y="1025.5" font-size="24.4" fill="rgba(0,0,0,.72)" textLength="182.5" clip-path="url(#c420)" stroke="#000" stroke-opacity=".45" stroke-width=".35" paint-order="stroke">Sys8PAD REC 1</text>
<rect x="729.9" y="994.9" width="3306.5" height="44.1" fill="#b69674"/>
<rect x="729.9" y="994.9" width="3306.5" height="2" fill="#8a7258"/>
<rect x="729.9" y="1036.8" width="3306.5" height="2.2" fill="#836c53"/>
<rect x="729.9" y="994.9" width="2" height="44.1" fill="#836c53"/>
<clipPath id="c426"><rect x="729.9" y="994.9" width="3306" height="44.1"/></clipPath>
<text class="tr" x="737.1" y="1025.5" font-size="24.4" fill="rgba(0,0,0,.72)" textLength="182.5" clip-path="url(#c426)" stroke="#000" stroke-opacity=".45" stroke-width=".35" paint-order="stroke">Sys8PAD REC 1</text>
<rect x="4036.4" y="994.9" width="715.6" height="44.1" fill="#b69674"/>
<rect x="4036.4" y="994.9" width="715.6" height="2" fill="#8a7258"/>
<rect x="4036.4" y="1036.8" width="715.6" height="2.2" fill="#836c53"/>
<rect x="4036.4" y="994.9" width="2" height="44.1" fill="#836c53"/>
<clipPath id="c432"><rect x="4036.4" y="994.9" width="715.1" height="44.1"/></clipPath>
<text class="tr" x="4043.6" y="1025.5" font-size="24.4" fill="rgba(0,0,0,.72)" textLength="182.5" clip-path="url(#c432)" stroke="#000" stroke-opacity=".45" stroke-width=".35" paint-order="stroke">Sys8PAD REC 1</text>
<rect x="0" y="1142.7" width="729.9" height="44.3" fill="#b69674"/>
<rect x="0" y="1142.7" width="729.9" height="2" fill="#8a7258"/>
<rect x="0" y="1184.8" width="729.9" height="2.2" fill="#836c53"/>
<clipPath id="c437"><rect x="0" y="1142.7" width="729.4" height="44.3"/></clipPath>
<text class="tr" x="-35.5" y="1173.3" font-size="24.4" fill="rgba(0,0,0,.72)" textLength="176" clip-path="url(#c437)" stroke="#000" stroke-opacity=".45" stroke-width=".35" paint-order="stroke">VoyBass REC 1</text>
<rect x="729.9" y="1142.7" width="3306.5" height="44.3" fill="#b69674"/>
<rect x="729.9" y="1142.7" width="3306.5" height="2" fill="#8a7258"/>
<rect x="729.9" y="1184.8" width="3306.5" height="2.2" fill="#836c53"/>
<rect x="729.9" y="1142.7" width="2" height="44.3" fill="#836c53"/>
<clipPath id="c443"><rect x="729.9" y="1142.7" width="3306" height="44.3"/></clipPath>
<text class="tr" x="737.1" y="1173.3" font-size="24.4" fill="rgba(0,0,0,.72)" textLength="176" clip-path="url(#c443)" stroke="#000" stroke-opacity=".45" stroke-width=".35" paint-order="stroke">VoyBass REC 1</text>
<rect x="4036.4" y="1142.7" width="715.6" height="44.3" fill="#b69674"/>
<rect x="4036.4" y="1142.7" width="715.6" height="2" fill="#8a7258"/>
<rect x="4036.4" y="1184.8" width="715.6" height="2.2" fill="#836c53"/>
<rect x="4036.4" y="1142.7" width="2" height="44.3" fill="#836c53"/>
<clipPath id="c449"><rect x="4036.4" y="1142.7" width="715.1" height="44.3"/></clipPath>
<text class="tr" x="4043.6" y="1173.3" font-size="24.4" fill="rgba(0,0,0,.72)" textLength="176" clip-path="url(#c449)" stroke="#000" stroke-opacity=".45" stroke-width=".35" paint-order="stroke">VoyBass REC 1</text>
<rect x="0" y="1044.1" width="343.6" height="44.2" fill="#fcf060"/>
<rect x="0" y="1044.1" width="343.6" height="2" fill="#bfb648"/>
<rect x="0" y="1086.1" width="343.6" height="2.2" fill="#b5ac45"/>
<rect x="343.6" y="1044.1" width="386.3" height="44.2" fill="#fcf060"/>
<rect x="343.6" y="1044.1" width="386.3" height="2" fill="#bfb648"/>
<rect x="343.6" y="1086.1" width="386.3" height="2.2" fill="#b5ac45"/>
<rect x="343.6" y="1044.1" width="2" height="44.2" fill="#b5ac45"/>
<rect x="729.9" y="1044.1" width="915.5" height="44.2" fill="#fcf060"/>
<rect x="729.9" y="1044.1" width="915.5" height="2" fill="#bfb648"/>
<rect x="729.9" y="1086.1" width="915.5" height="2.2" fill="#b5ac45"/>
<rect x="729.9" y="1044.1" width="2" height="44.2" fill="#b5ac45"/>
<rect x="1645.4" y="1044.1" width="50.2" height="44.2" fill="#3bf54b"/>
<rect x="1645.4" y="1044.1" width="50.2" height="2" fill="#2cba39"/>
<rect x="1645.4" y="1086.1" width="50.2" height="2.2" fill="#2ab036"/>
<rect x="1645.4" y="1044.1" width="2" height="44.2" fill="#2ab036"/>
<rect x="1695.6" y="1044.1" width="2317.7" height="44.2" fill="#e6a5ec"/>
<rect x="1695.6" y="1044.1" width="2317.7" height="2" fill="#ae7db3"/>
<rect x="1695.6" y="1086.1" width="2317.7" height="2.2" fill="#a576a9"/>
<rect x="1695.6" y="1044.1" width="2" height="44.2" fill="#a576a9"/>
<rect x="4036.4" y="1044.1" width="483.9" height="44.2" fill="#fcf060"/>
<rect x="4036.4" y="1044.1" width="483.9" height="2" fill="#bfb648"/>
<rect x="4036.4" y="1086.1" width="483.9" height="2.2" fill="#b5ac45"/>
<rect x="4036.4" y="1044.1" width="2" height="44.2" fill="#b5ac45"/>
<rect x="4520.2" y="1044.1" width="231.8" height="44.2" fill="#e6a5ec"/>
<rect x="4520.2" y="1044.1" width="231.8" height="2" fill="#ae7db3"/>
<rect x="4520.2" y="1086.1" width="231.8" height="2.2" fill="#a576a9"/>
<rect x="4520.2" y="1044.1" width="2" height="44.2" fill="#a576a9"/>
<path d="M5.6 1046.3v7.2M5.6 1078.4v7.2M53.9 1046.3v7.2M53.9 1078.4v7.2M102.2 1046.3v7.2M102.2 1078.4v7.2M150.5 1046.3v7.2M150.5 1078.4v7.2M198.7 1046.3v7.2M198.7 1078.4v7.2M247 1046.3v7.2M247 1078.4v7.2M295.3 1046.3v7.2M295.3 1078.4v7.2M391.9 1046.3v7.2M391.9 1078.4v7.2M440.2 1046.3v7.2M440.2 1078.4v7.2M488.4 1046.3v7.2M488.4 1078.4v7.2M536.7 1046.3v7.2M536.7 1078.4v7.2M585 1046.3v7.2M585 1078.4v7.2M633.3 1046.3v7.2M633.3 1078.4v7.2M681.6 1046.3v7.2M681.6 1078.4v7.2M778.2 1046.3v7.2M778.2 1078.4v7.2M826.4 1046.3v7.2M826.4 1078.4v7.2M874.7 1046.3v7.2M874.7 1078.4v7.2M923 1046.3v7.2M923 1078.4v7.2M971.3 1046.3v7.2M971.3 1078.4v7.2M1019.6 1046.3v7.2M1019.6 1078.4v7.2M1067.9 1046.3v7.2M1067.9 1078.4v7.2M1116.2 1046.3v7.2M1116.2 1078.4v7.2M1164.4 1046.3v7.2M1164.4 1078.4v7.2M1212.7 1046.3v7.2M1212.7 1078.4v7.2M1261 1046.3v7.2M1261 1078.4v7.2M1309.3 1046.3v7.2M1309.3 1078.4v7.2M1357.6 1046.3v7.2M1357.6 1078.4v7.2M1405.9 1046.3v7.2M1405.9 1078.4v7.2M1454.1 1046.3v7.2M1454.1 1078.4v7.2M1502.4 1046.3v7.2M1502.4 1078.4v7.2M1550.7 1046.3v7.2M1550.7 1078.4v7.2M1599 1046.3v7.2M1599 1078.4v7.2M1792.1 1046.3v7.2M1792.1 1078.4v7.2M1888.7 1046.3v7.2M1888.7 1078.4v7.2M1985.3 1046.3v7.2M1985.3 1078.4v7.2M2081.9 1046.3v7.2M2081.9 1078.4v7.2M2178.4 1046.3v7.2M2178.4 1078.4v7.2M2275 1046.3v7.2M2275 1078.4v7.2M2371.6 1046.3v7.2M2371.6 1078.4v7.2M2468.1 1046.3v7.2M2468.1 1078.4v7.2M2564.7 1046.3v7.2M2564.7 1078.4v7.2M2661.3 1046.3v7.2M2661.3 1078.4v7.2M2757.8 1046.3v7.2M2757.8 1078.4v7.2M2854.4 1046.3v7.2M2854.4 1078.4v7.2M2951 1046.3v7.2M2951 1078.4v7.2M3047.6 1046.3v7.2M3047.6 1078.4v7.2M3144.1 1046.3v7.2M3144.1 1078.4v7.2M3240.7 1046.3v7.2M3240.7 1078.4v7.2M3337.3 1046.3v7.2M3337.3 1078.4v7.2M3433.8 1046.3v7.2M3433.8 1078.4v7.2M3530.4 1046.3v7.2M3530.4 1078.4v7.2M3627 1046.3v7.2M3627 1078.4v7.2M3723.5 1046.3v7.2M3723.5 1078.4v7.2M3820.1 1046.3v7.2M3820.1 1078.4v7.2M3916.7 1046.3v7.2M3916.7 1078.4v7.2M4085.7 1046.3v7.2M4085.7 1078.4v7.2M4134 1046.3v7.2M4134 1078.4v7.2M4182.3 1046.3v7.2M4182.3 1078.4v7.2M4230.5 1046.3v7.2M4230.5 1078.4v7.2M4278.8 1046.3v7.2M4278.8 1078.4v7.2M4327.1 1046.3v7.2M4327.1 1078.4v7.2M4375.4 1046.3v7.2M4375.4 1078.4v7.2M4423.7 1046.3v7.2M4423.7 1078.4v7.2M4472 1046.3v7.2M4472 1078.4v7.2M4616.8 1046.3v7.2M4616.8 1078.4v7.2M4713.4 1046.3v7.2M4713.4 1078.4v7.2" stroke="#0a0a0a" stroke-opacity=".9" stroke-width="2.4" fill="none"/>
<rect x="0" y="1093.5" width="343.6" height="44" fill="#fcf060"/>
<rect x="0" y="1093.5" width="343.6" height="2" fill="#bfb648"/>
<rect x="0" y="1135.3" width="343.6" height="2.2" fill="#b5ac45"/>
<rect x="343.6" y="1093.5" width="386.3" height="44" fill="#fcf060"/>
<rect x="343.6" y="1093.5" width="386.3" height="2" fill="#bfb648"/>
<rect x="343.6" y="1135.3" width="386.3" height="2.2" fill="#b5ac45"/>
<rect x="343.6" y="1093.5" width="2" height="44" fill="#b5ac45"/>
<rect x="729.9" y="1093.5" width="915.5" height="44" fill="#fcf060"/>
<rect x="729.9" y="1093.5" width="915.5" height="2" fill="#bfb648"/>
<rect x="729.9" y="1135.3" width="915.5" height="2.2" fill="#b5ac45"/>
<rect x="729.9" y="1093.5" width="2" height="44" fill="#b5ac45"/>
<rect x="1645.4" y="1093.5" width="50.2" height="44" fill="#3bf54b"/>
<rect x="1645.4" y="1093.5" width="50.2" height="2" fill="#2cba39"/>
<rect x="1645.4" y="1135.3" width="50.2" height="2.2" fill="#2ab036"/>
<rect x="1645.4" y="1093.5" width="2" height="44" fill="#2ab036"/>
<rect x="1695.6" y="1093.5" width="2317.7" height="44" fill="#e6a5ec"/>
<rect x="1695.6" y="1093.5" width="2317.7" height="2" fill="#ae7db3"/>
<rect x="1695.6" y="1135.3" width="2317.7" height="2.2" fill="#a576a9"/>
<rect x="1695.6" y="1093.5" width="2" height="44" fill="#a576a9"/>
<rect x="4036.4" y="1093.5" width="483.9" height="44" fill="#fcf060"/>
<rect x="4036.4" y="1093.5" width="483.9" height="2" fill="#bfb648"/>
<rect x="4036.4" y="1135.3" width="483.9" height="2.2" fill="#b5ac45"/>
<rect x="4036.4" y="1093.5" width="2" height="44" fill="#b5ac45"/>
<rect x="4520.2" y="1093.5" width="231.8" height="44" fill="#e6a5ec"/>
<rect x="4520.2" y="1093.5" width="231.8" height="2" fill="#ae7db3"/>
<rect x="4520.2" y="1135.3" width="231.8" height="2.2" fill="#a576a9"/>
<rect x="4520.2" y="1093.5" width="2" height="44" fill="#a576a9"/>
<path d="M5.6 1095.7v7.2M5.6 1127.6v7.2M53.9 1095.7v7.2M53.9 1127.6v7.2M102.2 1095.7v7.2M102.2 1127.6v7.2M150.5 1095.7v7.2M150.5 1127.6v7.2M198.7 1095.7v7.2M198.7 1127.6v7.2M247 1095.7v7.2M247 1127.6v7.2M295.3 1095.7v7.2M295.3 1127.6v7.2M391.9 1095.7v7.2M391.9 1127.6v7.2M440.2 1095.7v7.2M440.2 1127.6v7.2M488.4 1095.7v7.2M488.4 1127.6v7.2M536.7 1095.7v7.2M536.7 1127.6v7.2M585 1095.7v7.2M585 1127.6v7.2M633.3 1095.7v7.2M633.3 1127.6v7.2M681.6 1095.7v7.2M681.6 1127.6v7.2M778.2 1095.7v7.2M778.2 1127.6v7.2M826.4 1095.7v7.2M826.4 1127.6v7.2M874.7 1095.7v7.2M874.7 1127.6v7.2M923 1095.7v7.2M923 1127.6v7.2M971.3 1095.7v7.2M971.3 1127.6v7.2M1019.6 1095.7v7.2M1019.6 1127.6v7.2M1067.9 1095.7v7.2M1067.9 1127.6v7.2M1116.2 1095.7v7.2M1116.2 1127.6v7.2M1164.4 1095.7v7.2M1164.4 1127.6v7.2M1212.7 1095.7v7.2M1212.7 1127.6v7.2M1261 1095.7v7.2M1261 1127.6v7.2M1309.3 1095.7v7.2M1309.3 1127.6v7.2M1357.6 1095.7v7.2M1357.6 1127.6v7.2M1405.9 1095.7v7.2M1405.9 1127.6v7.2M1454.1 1095.7v7.2M1454.1 1127.6v7.2M1502.4 1095.7v7.2M1502.4 1127.6v7.2M1550.7 1095.7v7.2M1550.7 1127.6v7.2M1599 1095.7v7.2M1599 1127.6v7.2M1792.1 1095.7v7.2M1792.1 1127.6v7.2M1888.7 1095.7v7.2M1888.7 1127.6v7.2M1985.3 1095.7v7.2M1985.3 1127.6v7.2M2081.9 1095.7v7.2M2081.9 1127.6v7.2M2178.4 1095.7v7.2M2178.4 1127.6v7.2M2275 1095.7v7.2M2275 1127.6v7.2M2371.6 1095.7v7.2M2371.6 1127.6v7.2M2468.1 1095.7v7.2M2468.1 1127.6v7.2M2564.7 1095.7v7.2M2564.7 1127.6v7.2M2661.3 1095.7v7.2M2661.3 1127.6v7.2M2757.8 1095.7v7.2M2757.8 1127.6v7.2M2854.4 1095.7v7.2M2854.4 1127.6v7.2M2951 1095.7v7.2M2951 1127.6v7.2M3047.6 1095.7v7.2M3047.6 1127.6v7.2M3144.1 1095.7v7.2M3144.1 1127.6v7.2M3240.7 1095.7v7.2M3240.7 1127.6v7.2M3337.3 1095.7v7.2M3337.3 1127.6v7.2M3433.8 1095.7v7.2M3433.8 1127.6v7.2M3530.4 1095.7v7.2M3530.4 1127.6v7.2M3627 1095.7v7.2M3627 1127.6v7.2M3723.5 1095.7v7.2M3723.5 1127.6v7.2M3820.1 1095.7v7.2M3820.1 1127.6v7.2M3916.7 1095.7v7.2M3916.7 1127.6v7.2M4085.7 1095.7v7.2M4085.7 1127.6v7.2M4134 1095.7v7.2M4134 1127.6v7.2M4182.3 1095.7v7.2M4182.3 1127.6v7.2M4230.5 1095.7v7.2M4230.5 1127.6v7.2M4278.8 1095.7v7.2M4278.8 1127.6v7.2M4327.1 1095.7v7.2M4327.1 1127.6v7.2M4375.4 1095.7v7.2M4375.4 1127.6v7.2M4423.7 1095.7v7.2M4423.7 1127.6v7.2M4472 1095.7v7.2M4472 1127.6v7.2M4616.8 1095.7v7.2M4616.8 1127.6v7.2M4713.4 1095.7v7.2M4713.4 1127.6v7.2" stroke="#0a0a0a" stroke-opacity=".9" stroke-width="2.4" fill="none"/>
<rect x="4036.4" y="1421.3" width="715.6" height="44.3" fill="#dcb9e0"/>
<rect x="4036.4" y="1421.3" width="715.6" height="2" fill="#a78caa"/>
<rect x="4036.4" y="1463.4" width="715.6" height="2.2" fill="#9e85a1"/>
<rect x="4036.4" y="1421.3" width="2" height="44.3" fill="#9e85a1"/>
<line x1="4059.3" y1="1427.1" x2="4748" y2="1427.1" stroke="#0a0a0a" stroke-opacity=".9" stroke-width="7.2" stroke-dasharray="2.4 21.7"/>
<line x1="4059.3" y1="1459.3" x2="4748" y2="1459.3" stroke="#0a0a0a" stroke-opacity=".9" stroke-width="7.2" stroke-dasharray="2.4 21.7"/>
<rect x="1116.2" y="1470.8" width="678" height="44.2" fill="#d6ae50"/>
<rect x="1116.2" y="1470.8" width="678" height="2" fill="#a2843c"/>
<rect x="1116.2" y="1512.8" width="678" height="2.2" fill="#9a7d39"/>
<rect x="1116.2" y="1470.8" width="2" height="44.2" fill="#9a7d39"/>
<clipPath id="c517"><rect x="1116.2" y="1470.8" width="677.5" height="44.2"/></clipPath>
<text class="tr" x="1123.4" y="1501.4" font-size="24.4" fill="rgba(0,0,0,.72)" textLength="182.5" clip-path="url(#c517)" stroke="#000" stroke-opacity=".45" stroke-width=".35" paint-order="stroke">909 CHH REC 1</text>
<path d="M1708 1472.8C1739.1 1472.8 1750.9 1513 1782 1513H1794.1V1472.8z" fill="#b3923f"/>
<rect x="4036.4" y="1470.8" width="715.6" height="44.2" fill="#d6ae50"/>
<rect x="4036.4" y="1470.8" width="715.6" height="2" fill="#a2843c"/>
<rect x="4036.4" y="1512.8" width="715.6" height="2.2" fill="#9a7d39"/>
<rect x="4036.4" y="1470.8" width="2" height="44.2" fill="#9a7d39"/>
<clipPath id="c524"><rect x="4036.4" y="1470.8" width="715.1" height="44.2"/></clipPath>
<text class="tr" x="4043.6" y="1501.4" font-size="24.4" fill="rgba(0,0,0,.72)" textLength="182.5" clip-path="url(#c524)" stroke="#000" stroke-opacity=".45" stroke-width=".35" paint-order="stroke">909 CHH REC 1</text>
<rect x="1116.2" y="1520.1" width="579.4" height="44.5" fill="#1783c6"/>
<rect x="1116.2" y="1520.1" width="579.4" height="2" fill="#116396"/>
<rect x="1116.2" y="1562.4" width="579.4" height="2.2" fill="#105e8e"/>
<rect x="1116.2" y="1520.1" width="2" height="44.5" fill="#105e8e"/>
<rect x="4036.4" y="1520.1" width="715.6" height="44.5" fill="#1783c6"/>
<rect x="4036.4" y="1520.1" width="715.6" height="2" fill="#116396"/>
<rect x="4036.4" y="1562.4" width="715.6" height="2.2" fill="#105e8e"/>
<rect x="4036.4" y="1520.1" width="2" height="44.5" fill="#105e8e"/>
<line x1="1139.1" y1="1525.9" x2="1691.6" y2="1525.9" stroke="#0a0a0a" stroke-opacity=".9" stroke-width="7.2" stroke-dasharray="2.4 21.7"/>
<line x1="1139.1" y1="1558.3" x2="1691.6" y2="1558.3" stroke="#0a0a0a" stroke-opacity=".9" stroke-width="7.2" stroke-dasharray="2.4 21.7"/>
<line x1="4059.3" y1="1525.9" x2="4748" y2="1525.9" stroke="#0a0a0a" stroke-opacity=".9" stroke-width="7.2" stroke-dasharray="2.4 21.7"/>
<line x1="4059.3" y1="1558.3" x2="4748" y2="1558.3" stroke="#0a0a0a" stroke-opacity=".9" stroke-width="7.2" stroke-dasharray="2.4 21.7"/>
<rect x="1116.2" y="1569.8" width="579.4" height="44.1" fill="#8da9ec"/>
<rect x="1116.2" y="1569.8" width="579.4" height="2" fill="#6b80b3"/>
<rect x="1116.2" y="1611.7" width="579.4" height="2.2" fill="#6579a9"/>
<rect x="1116.2" y="1569.8" width="2" height="44.1" fill="#6579a9"/>
<rect x="4036.4" y="1569.8" width="715.6" height="44.1" fill="#8da9ec"/>
<rect x="4036.4" y="1569.8" width="715.6" height="2" fill="#6b80b3"/>
<rect x="4036.4" y="1611.7" width="715.6" height="2.2" fill="#6579a9"/>
<rect x="4036.4" y="1569.8" width="2" height="44.1" fill="#6579a9"/>
<line x1="1139.1" y1="1575.6" x2="1691.6" y2="1575.6" stroke="#0a0a0a" stroke-opacity=".9" stroke-width="7.2" stroke-dasharray="2.4 21.7"/>
<line x1="1139.1" y1="1607.6" x2="1691.6" y2="1607.6" stroke="#0a0a0a" stroke-opacity=".9" stroke-width="7.2" stroke-dasharray="2.4 21.7"/>
<line x1="4059.3" y1="1575.6" x2="4748" y2="1575.6" stroke="#0a0a0a" stroke-opacity=".9" stroke-width="7.2" stroke-dasharray="2.4 21.7"/>
<line x1="4059.3" y1="1607.6" x2="4748" y2="1607.6" stroke="#0a0a0a" stroke-opacity=".9" stroke-width="7.2" stroke-dasharray="2.4 21.7"/>
<rect x="1116.2" y="1619.1" width="579.4" height="44.3" fill="#4bfcb8"/>
<rect x="1116.2" y="1619.1" width="579.4" height="2" fill="#39bf8b"/>
<rect x="1116.2" y="1661.2" width="579.4" height="2.2" fill="#36b584"/>
<rect x="1116.2" y="1619.1" width="2" height="44.3" fill="#36b584"/>
<rect x="4036.4" y="1619.1" width="715.6" height="44.3" fill="#4bfcb8"/>
<rect x="4036.4" y="1619.1" width="715.6" height="2" fill="#39bf8b"/>
<rect x="4036.4" y="1661.2" width="715.6" height="2.2" fill="#36b584"/>
<rect x="4036.4" y="1619.1" width="2" height="44.3" fill="#36b584"/>
<line x1="1139.1" y1="1624.9" x2="1691.6" y2="1624.9" stroke="#0a0a0a" stroke-opacity=".9" stroke-width="7.2" stroke-dasharray="2.4 21.7"/>
<line x1="1139.1" y1="1657.1" x2="1691.6" y2="1657.1" stroke="#0a0a0a" stroke-opacity=".9" stroke-width="7.2" stroke-dasharray="2.4 21.7"/>
<line x1="4059.3" y1="1624.9" x2="4748" y2="1624.9" stroke="#0a0a0a" stroke-opacity=".9" stroke-width="7.2" stroke-dasharray="2.4 21.7"/>
<line x1="4059.3" y1="1657.1" x2="4748" y2="1657.1" stroke="#0a0a0a" stroke-opacity=".9" stroke-width="7.2" stroke-dasharray="2.4 21.7"/>
<rect x="0" y="1668.6" width="729.9" height="44" fill="#fdb4c1"/>
<rect x="0" y="1668.6" width="729.9" height="2" fill="#c08892"/>
<rect x="0" y="1710.4" width="729.9" height="2.2" fill="#b6818a"/>
<clipPath id="c565"><rect x="0" y="1668.6" width="729.4" height="44"/></clipPath>
<text class="tr" x="-35.5" y="1699.2" font-size="24.4" fill="rgba(0,0,0,.72)" textLength="82.5" clip-path="url(#c565)" stroke="#000" stroke-opacity=".45" stroke-width=".35" paint-order="stroke">shaker</text>
<rect x="729.9" y="1668.6" width="965.7" height="44" fill="#fdb4c1"/>
<rect x="729.9" y="1668.6" width="965.7" height="2" fill="#c08892"/>
<rect x="729.9" y="1710.4" width="965.7" height="2.2" fill="#b6818a"/>
<rect x="729.9" y="1668.6" width="2" height="44" fill="#b6818a"/>
<clipPath id="c571"><rect x="729.9" y="1668.6" width="965.2" height="44"/></clipPath>
<text class="tr" x="737.1" y="1699.2" font-size="24.4" fill="rgba(0,0,0,.72)" textLength="82.5" clip-path="url(#c571)" stroke="#000" stroke-opacity=".45" stroke-width=".35" paint-order="stroke">shaker</text>
<rect x="4036.4" y="1668.6" width="715.6" height="44" fill="#fdb4c1"/>
<rect x="4036.4" y="1668.6" width="715.6" height="2" fill="#c08892"/>
<rect x="4036.4" y="1710.4" width="715.6" height="2.2" fill="#b6818a"/>
<rect x="4036.4" y="1668.6" width="2" height="44" fill="#b6818a"/>
<clipPath id="c577"><rect x="4036.4" y="1668.6" width="715.1" height="44"/></clipPath>
<text class="tr" x="4043.6" y="1699.2" font-size="24.4" fill="rgba(0,0,0,.72)" textLength="82.5" clip-path="url(#c577)" stroke="#000" stroke-opacity=".45" stroke-width=".35" paint-order="stroke">shaker</text>
<path d="M150.5 1670.8v7.2M150.5 1702.7v7.2M343.6 1670.8v7.2M343.6 1702.7v7.2M536.7 1670.8v7.2M536.7 1702.7v7.2M923 1670.8v7.2M923 1702.7v7.2M1116.2 1670.8v7.2M1116.2 1702.7v7.2M1309.3 1670.8v7.2M1309.3 1702.7v7.2M1502.4 1670.8v7.2M1502.4 1702.7v7.2M4230.5 1670.8v7.2M4230.5 1702.7v7.2M4423.7 1670.8v7.2M4423.7 1702.7v7.2M4616.8 1670.8v7.2M4616.8 1702.7v7.2" stroke="#0a0a0a" stroke-opacity=".9" stroke-width="2.4" fill="none"/>
<rect x="826.4" y="1717.9" width="386.3" height="223.9" fill="#fdb4c1"/>
<rect x="826.4" y="1717.9" width="2" height="223.9" fill="#bb858e"/>
<rect x="826.4" y="1940.3" width="386.3" height="1.5" fill="#bb858e"/>
<rect x="826.4" y="1759.4" width="386.3" height="1.6" fill="#bb858e"/>
<text class="tr" x="833.6" y="1748.5" font-size="24.4" fill="rgba(0,0,0,.72)" textLength="98.5">shaker2</text>
<path d="M874.7 1761.4V1940.3M923 1761.4V1940.3M971.3 1761.4V1940.3M1019.6 1761.4V1940.3M1067.9 1761.4V1940.3M1116.2 1761.4V1940.3M1164.4 1761.4V1940.3" stroke="#000" stroke-opacity=".1" stroke-width="1.8" fill="none"/>
<polygon points="828.9,1774.3 831,1774 833.1,1773.4 835.2,1772.5 837.3,1771.7 839.4,1770.6 841.5,1774.3 843.6,1774 845.7,1771.5 847.8,1767.7 849.9,1777.6 852,1772 854.1,1776.2 856.2,1777.9 858.3,1768.4 860.4,1767.2 862.5,1775.9 864.6,1764.3 866.7,1772.3 868.8,1768 870.9,1776.1 873,1774.7 875.1,1773.7 877.2,1769.1 879.3,1778.5 881.4,1772.1 883.5,1775.2 885.6,1769.3 887.7,1765 889.8,1771.1 891.9,1767.6 894,1773.1 896.1,1772 898.2,1774.1 900.3,1776.1 902.4,1772.8 904.5,1774.8 906.6,1774.4 908.7,1773.4 910.8,1776.1 912.9,1772.9 915,1774.3 917.1,1776.4 919.2,1774 921.3,1775 923.4,1773.2 925.5,1775.5 927.6,1772.1 929.7,1774 931.8,1768.6 933.9,1774.5 936,1771.6 938.1,1776.3 940.2,1771.2 942.3,1773 944.4,1773.4 946.5,1767.8 948.6,1769 950.7,1773.9 952.8,1772.6 954.9,1767.7 957,1774.6 959.1,1771.8 961.2,1772.4 963.3,1774.6 965.4,1774.9 967.5,1774.3 969.6,1776.4 971.7,1768.1 973.8,1772.9 975.9,1777.1 978,1775.1 980.1,1772.3 982.2,1772.3 984.3,1771.7 986.4,1774 988.5,1773.9 990.6,1774.1 992.7,1777.5 994.8,1775.9 996.9,1770.8 999,1775.9 1001.1,1768.6 1003.2,1775.9 1005.3,1769.4 1007.4,1773.4 1009.5,1773.5 1011.6,1772.5 1013.7,1778.4 1015.8,1770.2 1017.9,1767.8 1020,1773.1 1022.1,1772.7 1024.2,1770.1 1026.3,1772.4 1028.4,1769.5 1030.5,1767.4 1032.6,1766.6 1034.7,1772.8 1036.8,1776.4 1038.9,1772.2 1041,1777 1043.1,1772.8 1045.2,1772 1047.3,1772.7 1049.4,1769.7 1051.5,1778.4 1053.6,1773.7 1055.7,1773.3 1057.8,1776.4 1059.9,1771.6 1062,1773.8 1064.1,1771.5 1066.2,1764.2 1068.3,1775.7 1070.4,1774.4 1072.5,1773.2 1074.6,1771.3 1076.7,1774.6 1078.8,1763.5 1080.9,1766 1083,1777.2 1085.1,1775.9 1087.2,1768.8 1089.3,1775.2 1091.4,1776.9 1093.5,1767.1 1095.6,1767.9 1097.7,1773.4 1099.8,1771.9 1101.9,1774.4 1104,1769.4 1106.1,1774.7 1108.2,1769.5 1110.3,1767.7 1112.4,1774.7 1114.5,1772.8 1116.6,1769.6 1118.7,1765.7 1120.8,1769 1122.9,1774.7 1125,1773.7 1127.1,1774.3 1129.2,1771.9 1131.3,1774.7 1133.4,1772.5 1135.5,1775.6 1137.6,1773.9 1139.7,1773.3 1141.8,1770 1143.9,1776.1 1146,1769.7 1148.1,1772.7 1150.2,1773.2 1152.3,1773 1154.4,1773.2 1156.5,1775.1 1158.6,1773 1160.7,1775.8 1162.8,1775.5 1164.9,1773.4 1167,1770.4 1169.1,1773.1 1171.2,1770.3 1173.3,1775 1175.4,1775.2 1177.5,1771.7 1179.6,1772.5 1181.7,1778.2 1183.8,1766.6 1185.9,1771.5 1188,1773.9 1190.1,1775.8 1192.2,1772.3 1194.3,1776 1196.4,1773.6 1198.5,1774.4 1200.6,1775.5 1202.7,1772.4 1204.8,1766.1 1206.9,1777.2 1209,1769.5 1211.1,1765.3 1212.4,1775 1212.4,1837 1211.1,1845.8 1209,1836.7 1206.9,1839.7 1204.8,1836.1 1202.7,1837.1 1200.6,1846 1198.5,1836 1196.4,1837 1194.3,1834.9 1192.2,1843 1190.1,1835.5 1188,1846.2 1185.9,1836.8 1183.8,1839.1 1181.7,1840.9 1179.6,1838.2 1177.5,1845.3 1175.4,1845.9 1173.3,1839.6 1171.2,1844.2 1169.1,1843.6 1167,1838.4 1164.9,1838.8 1162.8,1834 1160.7,1843.7 1158.6,1837.6 1156.5,1838.7 1154.4,1839.6 1152.3,1837.6 1150.2,1838.2 1148.1,1834.2 1146,1839.4 1143.9,1836.2 1141.8,1839.2 1139.7,1835.8 1137.6,1835.4 1135.5,1842.1 1133.4,1839.7 1131.3,1843.4 1129.2,1841.3 1127.1,1841.8 1125,1840.2 1122.9,1844.3 1120.8,1842 1118.7,1842.5 1116.6,1838.3 1114.5,1840.3 1112.4,1846.3 1110.3,1836.8 1108.2,1839.6 1106.1,1843.8 1104,1838.3 1101.9,1836 1099.8,1839.6 1097.7,1845.3 1095.6,1838.3 1093.5,1839.4 1091.4,1840.3 1089.3,1837.6 1087.2,1838.9 1085.1,1840.2 1083,1839.6 1080.9,1840.2 1078.8,1837.7 1076.7,1848.2 1074.6,1843 1072.5,1836.9 1070.4,1842.5 1068.3,1847.2 1066.2,1836.3 1064.1,1845.8 1062,1840.4 1059.9,1844.4 1057.8,1844 1055.7,1836.3 1053.6,1834.5 1051.5,1845.5 1049.4,1838.7 1047.3,1843.5 1045.2,1839 1043.1,1839.6 1041,1847.9 1038.9,1837.5 1036.8,1839.5 1034.7,1842.1 1032.6,1844.9 1030.5,1838.1 1028.4,1840.3 1026.3,1836.7 1024.2,1838.1 1022.1,1841.4 1020,1845.9 1017.9,1842.4 1015.8,1839.7 1013.7,1843.6 1011.6,1845.6 1009.5,1836.7 1007.4,1838.2 1005.3,1841.6 1003.2,1842.5 1001.1,1845.7 999,1839.2 996.9,1838.6 994.8,1839.6 992.7,1845.5 990.6,1835.9 988.5,1839.5 986.4,1832.7 984.3,1844.1 982.2,1836.6 980.1,1837.1 978,1838.7 975.9,1841.6 973.8,1836 971.7,1841.8 969.6,1835.8 967.5,1839.4 965.4,1842.4 963.3,1838.2 961.2,1847.4 959.1,1845.8 957,1839.9 954.9,1838.7 952.8,1833 950.7,1839.3 948.6,1837.3 946.5,1841.7 944.4,1836.6 942.3,1838.7 940.2,1835.6 938.1,1845.9 936,1844 933.9,1845.9 931.8,1841.3 929.7,1839.8 927.6,1841.4 925.5,1839.6 923.4,1846.6 921.3,1844.9 919.2,1842.2 917.1,1844.8 915,1835.9 912.9,1839.2 910.8,1840.5 908.7,1838.4 906.6,1839.8 904.5,1840 902.4,1839.5 900.3,1839.2 898.2,1834.1 896.1,1846.8 894,1838.4 891.9,1840.4 889.8,1837.4 887.7,1840.4 885.6,1838.3 883.5,1841.7 881.4,1847.3 879.3,1839.9 877.2,1836.2 875.1,1844.8 873,1840.3 870.9,1836.7 868.8,1839.7 866.7,1833 864.6,1836.6 862.5,1845.4 860.4,1836.2 858.3,1836.4 856.2,1843 854.1,1842 852,1840.4 849.9,1843.2 847.8,1837.5 845.7,1842.7 843.6,1846.8 841.5,1838.1 839.4,1842 837.3,1840.7 835.2,1832.7 833.1,1838.6 831,1836.4 828.9,1840.1" fill="#231719"/>
<polygon points="828.9,1858.4 831,1858.9 833.1,1862.9 835.2,1862.6 837.3,1864.8 839.4,1862.1 841.5,1865.3 843.6,1862.4 845.7,1864 847.8,1865.2 849.9,1858.3 852,1859.6 854.1,1855.3 856.2,1863.9 858.3,1860.7 860.4,1867.7 862.5,1864.5 864.6,1863.9 866.7,1865 868.8,1854.5 870.9,1854.9 873,1864.5 875.1,1862 877.2,1855.7 879.3,1862.7 881.4,1865 883.5,1864.4 885.6,1865.5 887.7,1862.7 889.8,1862.2 891.9,1860.7 894,1863.5 896.1,1863 898.2,1862 900.3,1855.8 902.4,1863.2 904.5,1858.9 906.6,1864.1 908.7,1863.6 910.8,1862.8 912.9,1865.1 915,1861.7 917.1,1857.6 919.2,1864.1 921.3,1859.2 923.4,1864.7 925.5,1864.8 927.6,1864.7 929.7,1864.1 931.8,1865 933.9,1861.1 936,1864.5 938.1,1861.3 940.2,1855.9 942.3,1863.5 944.4,1856.6 946.5,1858.6 948.6,1855.5 950.7,1861 952.8,1855.8 954.9,1863.1 957,1853.5 959.1,1864.5 961.2,1856.3 963.3,1857 965.4,1858.2 967.5,1863.5 969.6,1865.3 971.7,1858.7 973.8,1862.6 975.9,1865.2 978,1862.2 980.1,1855.1 982.2,1864.9 984.3,1858.3 986.4,1864.2 988.5,1861.9 990.6,1864.5 992.7,1860.8 994.8,1858 996.9,1862.7 999,1861.5 1001.1,1864.8 1003.2,1858.2 1005.3,1856.7 1007.4,1861.7 1009.5,1861.1 1011.6,1853.6 1013.7,1860.9 1015.8,1864 1017.9,1861.4 1020,1863.6 1022.1,1864.4 1024.2,1864.3 1026.3,1857.3 1028.4,1865.6 1030.5,1854.1 1032.6,1865.3 1034.7,1865.2 1036.8,1864 1038.9,1856.6 1041,1857.5 1043.1,1857.4 1045.2,1865.4 1047.3,1861.9 1049.4,1856.2 1051.5,1865.6 1053.6,1861 1055.7,1863.6 1057.8,1861.3 1059.9,1858.6 1062,1864.5 1064.1,1858.3 1066.2,1862.6 1068.3,1855.8 1070.4,1862.2 1072.5,1864.9 1074.6,1856.6 1076.7,1858.5 1078.8,1865.2 1080.9,1861.8 1083,1857.5 1085.1,1863.7 1087.2,1856.7 1089.3,1862.8 1091.4,1861.5 1093.5,1862.4 1095.6,1854 1097.7,1866.7 1099.8,1861.1 1101.9,1862.9 1104,1856.2 1106.1,1862.6 1108.2,1862.2 1110.3,1868.1 1112.4,1862.9 1114.5,1858.9 1116.6,1865.4 1118.7,1866.3 1120.8,1863.3 1122.9,1865.4 1125,1867.3 1127.1,1863.5 1129.2,1862.3 1131.3,1864.1 1133.4,1865.6 1135.5,1862 1137.6,1864.8 1139.7,1863.7 1141.8,1865.6 1143.9,1863.8 1146,1855.6 1148.1,1854.8 1150.2,1861.8 1152.3,1865.6 1154.4,1852.8 1156.5,1868.1 1158.6,1864.6 1160.7,1865.3 1162.8,1854.3 1164.9,1864.6 1167,1862.5 1169.1,1862.2 1171.2,1857.5 1173.3,1865.5 1175.4,1865.7 1177.5,1860.7 1179.6,1860.7 1181.7,1855.3 1183.8,1861.5 1185.9,1865.4 1188,1863.4 1190.1,1856.6 1192.2,1864.5 1194.3,1862.9 1196.4,1860.8 1198.5,1860.4 1200.6,1852.3 1202.7,1861.3 1204.8,1859.1 1206.9,1864.3 1209,1862.2 1211.1,1859.3 1212.4,1865.7 1212.4,1927.7 1211.1,1932.6 1209,1936.9 1206.9,1934 1204.8,1929.3 1202.7,1928.7 1200.6,1928.7 1198.5,1931.9 1196.4,1932 1194.3,1936.2 1192.2,1932 1190.1,1931.6 1188,1936 1185.9,1938.9 1183.8,1927.2 1181.7,1927.9 1179.6,1940.9 1177.5,1929.2 1175.4,1928.4 1173.3,1929.9 1171.2,1930.5 1169.1,1931 1167,1938.4 1164.9,1932.1 1162.8,1929.6 1160.7,1933.8 1158.6,1935.1 1156.5,1926.8 1154.4,1929.3 1152.3,1935.5 1150.2,1929.4 1148.1,1930.4 1146,1933.6 1143.9,1938.2 1141.8,1928.8 1139.7,1928.9 1137.6,1925.2 1135.5,1931.7 1133.4,1931.7 1131.3,1936.4 1129.2,1929.5 1127.1,1933.5 1125,1929 1122.9,1931 1120.8,1931.7 1118.7,1928.7 1116.6,1932.5 1114.5,1931.9 1112.4,1936.9 1110.3,1928.9 1108.2,1934.9 1106.1,1932.6 1104,1936.6 1101.9,1930.4 1099.8,1928.3 1097.7,1939.6 1095.6,1929.8 1093.5,1927.6 1091.4,1935 1089.3,1931.2 1087.2,1931.9 1085.1,1928.9 1083,1930.2 1080.9,1928.5 1078.8,1928.2 1076.7,1930.8 1074.6,1934.1 1072.5,1930.1 1070.4,1932.5 1068.3,1929.2 1066.2,1928.8 1064.1,1930.9 1062,1934.7 1059.9,1935.9 1057.8,1935.2 1055.7,1929.1 1053.6,1930.8 1051.5,1929.5 1049.4,1928.6 1047.3,1929.4 1045.2,1930.6 1043.1,1934.3 1041,1931.2 1038.9,1933.3 1036.8,1933.9 1034.7,1934.3 1032.6,1938.4 1030.5,1939.1 1028.4,1930.5 1026.3,1931.7 1024.2,1929.7 1022.1,1934.4 1020,1928.4 1017.9,1934.8 1015.8,1935 1013.7,1928.1 1011.6,1931.3 1009.5,1932.1 1007.4,1933.3 1005.3,1928 1003.2,1932.6 1001.1,1932 999,1936 996.9,1930 994.8,1931.1 992.7,1927.9 990.6,1936.7 988.5,1934.7 986.4,1937 984.3,1936.9 982.2,1928.4 980.1,1927.9 978,1936.5 975.9,1931.7 973.8,1929 971.7,1933.4 969.6,1930.5 967.5,1929 965.4,1927.8 963.3,1931.2 961.2,1928.8 959.1,1931.5 957,1928.5 954.9,1931.1 952.8,1931.6 950.7,1928.6 948.6,1931.4 946.5,1928.6 944.4,1935.4 942.3,1936.5 940.2,1925.1 938.1,1937.3 936,1938.3 933.9,1934.5 931.8,1932.4 929.7,1932 927.6,1935 925.5,1939.1 923.4,1929.4 921.3,1932.3 919.2,1929.3 917.1,1936.2 915,1932.2 912.9,1936.1 910.8,1928.2 908.7,1928.8 906.6,1931 904.5,1932.1 902.4,1927.9 900.3,1933.2 898.2,1931.3 896.1,1934.6 894,1932.2 891.9,1932 889.8,1931.4 887.7,1929.7 885.6,1925.4 883.5,1929.3 881.4,1936.2 879.3,1933 877.2,1931.4 875.1,1929.6 873,1937.7 870.9,1929.1 868.8,1932.6 866.7,1930.4 864.6,1925.3 862.5,1939.7 860.4,1933.4 858.3,1931.3 856.2,1928.4 854.1,1932.2 852,1931.6 849.9,1929.4 847.8,1931.6 845.7,1927.8 843.6,1931.8 841.5,1929.8 839.4,1928.3 837.3,1931.9 835.2,1931.1 833.1,1929.3 831,1939.9 828.9,1933.9" fill="#231719"/>
<path d="M874.7 1761.4V1940.3M923 1761.4V1940.3M971.3 1761.4V1940.3M1019.6 1761.4V1940.3M1067.9 1761.4V1940.3M1116.2 1761.4V1940.3M1164.4 1761.4V1940.3" stroke="#fdb4c1" stroke-opacity=".13" stroke-width="1.8" fill="none"/>
<path d="M1019.6 1720.1v7.2M1019.6 1931.9v7.2" stroke="#0a0a0a" stroke-opacity=".9" stroke-width="2.4" fill="none"/>
<rect x="1309.3" y="1717.9" width="386.3" height="223.9" fill="#fdb4c1"/>
<rect x="1309.3" y="1717.9" width="2" height="223.9" fill="#bb858e"/>
<rect x="1309.3" y="1940.3" width="386.3" height="1.5" fill="#bb858e"/>
<rect x="1309.3" y="1759.4" width="386.3" height="1.6" fill="#bb858e"/>
<text class="tr" x="1316.5" y="1748.5" font-size="24.4" fill="rgba(0,0,0,.72)" textLength="98.5">shaker2</text>
<path d="M1357.6 1761.4V1940.3M1405.9 1761.4V1940.3M1454.1 1761.4V1940.3M1502.4 1761.4V1940.3M1550.7 1761.4V1940.3M1599 1761.4V1940.3M1647.3 1761.4V1940.3" stroke="#000" stroke-opacity=".1" stroke-width="1.8" fill="none"/>
<polygon points="1311.8,1774.2 1313.9,1767 1316,1773.7 1318.1,1775.7 1320.2,1776.2 1322.3,1769.9 1324.4,1779.1 1326.5,1769.5 1328.6,1768.6 1330.7,1773.5 1332.8,1774.7 1334.9,1773.1 1337,1774 1339.1,1774.4 1341.2,1774.6 1343.3,1775.6 1345.4,1768.1 1347.5,1771.7 1349.6,1767.5 1351.7,1769 1353.8,1774.6 1355.9,1772.6 1358,1774.1 1360.1,1768 1362.2,1773.9 1364.3,1775.3 1366.4,1769.4 1368.5,1773.4 1370.6,1774.4 1372.7,1769 1374.8,1776.4 1376.9,1772 1379,1770.2 1381.1,1773.1 1383.2,1773 1385.3,1774.9 1387.4,1773 1389.5,1769.3 1391.6,1770.5 1393.7,1770.1 1395.8,1774 1397.9,1773.5 1400,1772.3 1402.1,1772.7 1404.2,1771.7 1406.3,1774.9 1408.4,1775.4 1410.5,1778.1 1412.6,1772.2 1414.7,1772.3 1416.8,1768.6 1418.9,1774.5 1421,1771.7 1423.1,1772.2 1425.2,1766.9 1427.3,1774.3 1429.4,1771.8 1431.5,1766.7 1433.6,1773.9 1435.7,1773.3 1437.8,1774.5 1439.9,1774.1 1442,1773.1 1444.1,1772.8 1446.2,1774 1448.3,1776.4 1450.4,1768.2 1452.5,1775.5 1454.6,1772.3 1456.7,1771.6 1458.8,1771.9 1460.9,1774.1 1463,1774.8 1465.1,1767.7 1467.2,1774.6 1469.3,1771.8 1471.4,1776 1473.5,1773.5 1475.6,1766 1477.7,1770.9 1479.8,1768.4 1481.9,1766.6 1484,1771.6 1486.1,1775.1 1488.2,1773.3 1490.3,1777.2 1492.4,1774.7 1494.5,1772.9 1496.6,1768.8 1498.7,1772.6 1500.8,1775.8 1502.9,1772.1 1505,1775.9 1507.1,1776.5 1509.2,1775 1511.3,1772 1513.4,1775.2 1515.5,1775.6 1517.6,1768.9 1519.7,1776.1 1521.8,1772.3 1523.9,1764 1526,1773.9 1528.1,1772.5 1530.2,1773.1 1532.3,1773.8 1534.4,1778.9 1536.5,1775.2 1538.6,1767.2 1540.7,1772.4 1542.8,1772.2 1544.9,1774.1 1547,1773.8 1549.1,1775 1551.2,1767.7 1553.3,1766.8 1555.4,1772.4 1557.5,1774.3 1559.6,1772.1 1561.7,1770.8 1563.8,1774 1565.9,1776 1568,1768.3 1570.1,1768.1 1572.2,1773.1 1574.3,1778.5 1576.4,1767.5 1578.5,1768.6 1580.6,1767.2 1582.7,1764.9 1584.8,1770 1586.9,1772.1 1589,1772.1 1591.1,1770.8 1593.2,1764.8 1595.3,1774.3 1597.4,1772 1599.5,1767.7 1601.6,1765 1603.7,1775.7 1605.8,1777.3 1607.9,1775 1610,1764.7 1612.1,1768 1614.2,1771.9 1616.3,1764.8 1618.4,1773.1 1620.5,1764.8 1622.6,1775 1624.7,1775.9 1626.8,1770.3 1628.9,1772.2 1631,1771.6 1633.1,1771.6 1635.2,1770.4 1637.3,1768.8 1639.4,1770.4 1641.5,1771.9 1643.6,1772.7 1645.7,1766.4 1647.8,1776.1 1649.9,1771.7 1652,1774.1 1654.1,1774.5 1656.2,1765.6 1658.3,1773.9 1660.4,1767.5 1662.5,1775.4 1664.6,1775.6 1666.7,1774 1668.8,1776.4 1670.9,1765.6 1673,1773.4 1675.1,1776.5 1677.2,1773.8 1679.3,1776.2 1681.4,1768.3 1683.5,1767 1685.6,1767.4 1687.7,1766.5 1689.8,1772.2 1691.9,1776.1 1694,1770 1695.3,1775 1695.3,1837 1694,1839.7 1691.9,1837.7 1689.8,1838.7 1687.7,1837.8 1685.6,1842.7 1683.5,1836 1681.4,1839.5 1679.3,1836.1 1677.2,1844.5 1675.1,1839 1673,1838.8 1670.9,1838.3 1668.8,1833 1666.7,1837.1 1664.6,1834.2 1662.5,1837.6 1660.4,1839.9 1658.3,1839.2 1656.2,1836.7 1654.1,1835.5 1652,1838.4 1649.9,1838.4 1647.8,1835.8 1645.7,1832.7 1643.6,1845.2 1641.5,1845 1639.4,1840.7 1637.3,1837.3 1635.2,1840.4 1633.1,1846.7 1631,1842 1628.9,1840.2 1626.8,1836.1 1624.7,1845.7 1622.6,1838.9 1620.5,1837.1 1618.4,1843.7 1616.3,1836.3 1614.2,1839 1612.1,1838.9 1610,1840.5 1607.9,1842.9 1605.8,1834.6 1603.7,1839.2 1601.6,1836.1 1599.5,1840.1 1597.4,1839.5 1595.3,1839.7 1593.2,1839.7 1591.1,1842.3 1589,1845.5 1586.9,1833.9 1584.8,1836.8 1582.7,1838 1580.6,1838.6 1578.5,1837.9 1576.4,1842.5 1574.3,1840.1 1572.2,1837.7 1570.1,1834.2 1568,1841.2 1565.9,1839.8 1563.8,1837.9 1561.7,1837 1559.6,1841.5 1557.5,1845.8 1555.4,1840.5 1553.3,1840.9 1551.2,1838.8 1549.1,1834.1 1547,1840.5 1544.9,1837.2 1542.8,1841.3 1540.7,1837 1538.6,1839 1536.5,1836.6 1534.4,1846 1532.3,1846.6 1530.2,1842.8 1528.1,1838.1 1526,1845.3 1523.9,1835.6 1521.8,1838.3 1519.7,1838.1 1517.6,1837.3 1515.5,1839.7 1513.4,1846.4 1511.3,1838.3 1509.2,1841.5 1507.1,1844.3 1505,1837.4 1502.9,1839.2 1500.8,1841.4 1498.7,1840.4 1496.6,1835.6 1494.5,1838.8 1492.4,1845 1490.3,1837.5 1488.2,1834.9 1486.1,1843.2 1484,1836.4 1481.9,1843.7 1479.8,1837.5 1477.7,1834.3 1475.6,1842.6 1473.5,1841.9 1471.4,1844.5 1469.3,1836.8 1467.2,1836.2 1465.1,1841.8 1463,1836.8 1460.9,1839.7 1458.8,1842.5 1456.7,1844.3 1454.6,1835.6 1452.5,1837.6 1450.4,1840.2 1448.3,1840.3 1446.2,1843.6 1444.1,1838.9 1442,1837.6 1439.9,1836 1437.8,1847.6 1435.7,1838.7 1433.6,1839.5 1431.5,1838.2 1429.4,1837.1 1427.3,1843.4 1425.2,1847.8 1423.1,1837.3 1421,1835.8 1418.9,1840.2 1416.8,1837.4 1414.7,1839.4 1412.6,1843.6 1410.5,1838.5 1408.4,1844.4 1406.3,1840.3 1404.2,1846.1 1402.1,1838.9 1400,1836.7 1397.9,1836.8 1395.8,1836.3 1393.7,1836.6 1391.6,1844.8 1389.5,1844.4 1387.4,1835.8 1385.3,1840.4 1383.2,1836.8 1381.1,1844.4 1379,1834.1 1376.9,1838.2 1374.8,1840 1372.7,1839.2 1370.6,1840 1368.5,1840.3 1366.4,1840.4 1364.3,1847.2 1362.2,1843 1360.1,1848.5 1358,1833.8 1355.9,1844.4 1353.8,1842.3 1351.7,1841.9 1349.6,1844 1347.5,1848.8 1345.4,1841.9 1343.3,1840.1 1341.2,1836 1339.1,1836.6 1337,1845.8 1334.9,1840.6 1332.8,1843.4 1330.7,1844.5 1328.6,1837.5 1326.5,1836.3 1324.4,1845.2 1322.3,1840.1 1320.2,1837.2 1318.1,1835.8 1316,1836.3 1313.9,1839 1311.8,1840.9" fill="#231719"/>
<polygon points="1311.8,1858.8 1313.9,1868.1 1316,1863.2 1318.1,1861.4 1320.2,1868.6 1322.3,1862.7 1324.4,1864.8 1326.5,1854.9 1328.6,1864.7 1330.7,1864.1 1332.8,1861.7 1334.9,1862.1 1337,1864.2 1339.1,1864.5 1341.2,1854.8 1343.3,1855.5 1345.4,1864.1 1347.5,1864.8 1349.6,1857.2 1351.7,1864.9 1353.8,1864.7 1355.9,1861.9 1358,1854.6 1360.1,1854.2 1362.2,1862.1 1364.3,1864.1 1366.4,1863.1 1368.5,1857.9 1370.6,1858.6 1372.7,1858.1 1374.8,1857.2 1376.9,1861.3 1379,1857.5 1381.1,1858.4 1383.2,1864.9 1385.3,1855.8 1387.4,1861 1389.5,1861.3 1391.6,1862.8 1393.7,1861.2 1395.8,1862 1397.9,1861.1 1400,1861.3 1402.1,1862.3 1404.2,1865.7 1406.3,1864 1408.4,1859 1410.5,1861 1412.6,1860.8 1414.7,1861.6 1416.8,1861.2 1418.9,1861.5 1421,1865.4 1423.1,1857.5 1425.2,1865.6 1427.3,1862.4 1429.4,1864.4 1431.5,1861.7 1433.6,1864.8 1435.7,1861.5 1437.8,1863 1439.9,1865.6 1442,1862 1444.1,1858.8 1446.2,1860.5 1448.3,1856.9 1450.4,1865.4 1452.5,1864.1 1454.6,1868 1456.7,1863.3 1458.8,1864.8 1460.9,1859 1463,1859.5 1465.1,1868.2 1467.2,1863.1 1469.3,1857.4 1471.4,1853.7 1473.5,1858.8 1475.6,1855.6 1477.7,1855.3 1479.8,1859.4 1481.9,1858.7 1484,1856.1 1486.1,1864.1 1488.2,1862.1 1490.3,1863.1 1492.4,1863.9 1494.5,1859.4 1496.6,1862.8 1498.7,1856.2 1500.8,1864.1 1502.9,1855.8 1505,1864.4 1507.1,1859.3 1509.2,1855.6 1511.3,1859.7 1513.4,1864.5 1515.5,1854.9 1517.6,1865.2 1519.7,1856.3 1521.8,1865.4 1523.9,1863.4 1526,1864.7 1528.1,1865.3 1530.2,1860.5 1532.3,1857.2 1534.4,1856.6 1536.5,1862.1 1538.6,1864.1 1540.7,1865.3 1542.8,1864.3 1544.9,1862.6 1547,1861.5 1549.1,1855.7 1551.2,1864.6 1553.3,1855 1555.4,1864.2 1557.5,1864.9 1559.6,1864.4 1561.7,1864.3 1563.8,1855.9 1565.9,1860.7 1568,1861.8 1570.1,1859.3 1572.2,1863.9 1574.3,1867.9 1576.4,1859.2 1578.5,1856.2 1580.6,1865 1582.7,1864.7 1584.8,1852.5 1586.9,1858.1 1589,1861.3 1591.1,1864.8 1593.2,1863.7 1595.3,1857 1597.4,1860.4 1599.5,1865.3 1601.6,1861.2 1603.7,1861.6 1605.8,1863.9 1607.9,1861.6 1610,1857.8 1612.1,1856.8 1614.2,1864 1616.3,1863.8 1618.4,1863.9 1620.5,1860.9 1622.6,1862.9 1624.7,1861.9 1626.8,1864.7 1628.9,1857.2 1631,1863.8 1633.1,1861.9 1635.2,1862.1 1637.3,1855.1 1639.4,1865.3 1641.5,1861.3 1643.6,1864.5 1645.7,1853.7 1647.8,1864.5 1649.9,1861.8 1652,1858.1 1654.1,1856.4 1656.2,1854.4 1658.3,1858.3 1660.4,1865.9 1662.5,1862.3 1664.6,1856.5 1666.7,1861.7 1668.8,1864.8 1670.9,1860.9 1673,1861.3 1675.1,1855.2 1677.2,1861.1 1679.3,1863.1 1681.4,1857.2 1683.5,1862.1 1685.6,1855.3 1687.7,1857.6 1689.8,1854.9 1691.9,1864.9 1694,1861.2 1695.3,1865.7 1695.3,1927.7 1694,1931.9 1691.9,1934.4 1689.8,1930.7 1687.7,1928.8 1685.6,1935.6 1683.5,1931.9 1681.4,1928.1 1679.3,1939.3 1677.2,1928.4 1675.1,1938.2 1673,1930.3 1670.9,1928.1 1668.8,1930.2 1666.7,1935.4 1664.6,1931.7 1662.5,1934.5 1660.4,1938.2 1658.3,1932.1 1656.2,1933.3 1654.1,1935.6 1652,1928.9 1649.9,1936.7 1647.8,1929.5 1645.7,1934.1 1643.6,1928.2 1641.5,1935.8 1639.4,1930.5 1637.3,1934.1 1635.2,1929 1633.1,1929.9 1631,1928 1628.9,1935.6 1626.8,1938.9 1624.7,1933.5 1622.6,1928.9 1620.5,1936.1 1618.4,1928.6 1616.3,1931.3 1614.2,1931.4 1612.1,1928.7 1610,1936.8 1607.9,1928 1605.8,1932.4 1603.7,1932.3 1601.6,1934.5 1599.5,1925.1 1597.4,1929.8 1595.3,1936.3 1593.2,1933.6 1591.1,1925.6 1589,1927.9 1586.9,1937 1584.8,1929.8 1582.7,1931.7 1580.6,1930.4 1578.5,1939.8 1576.4,1931.2 1574.3,1929.3 1572.2,1936.2 1570.1,1927.7 1568,1937.3 1565.9,1928 1563.8,1932.2 1561.7,1937.2 1559.6,1930.5 1557.5,1932.7 1555.4,1930.6 1553.3,1930.2 1551.2,1935.7 1549.1,1932.2 1547,1931.4 1544.9,1935.3 1542.8,1933.2 1540.7,1937.9 1538.6,1931.3 1536.5,1930.4 1534.4,1927.9 1532.3,1931.5 1530.2,1932.6 1528.1,1929.4 1526,1934.8 1523.9,1928.6 1521.8,1931.2 1519.7,1931.5 1517.6,1937.4 1515.5,1931.5 1513.4,1932.5 1511.3,1932.6 1509.2,1935.7 1507.1,1932.7 1505,1930.9 1502.9,1931.4 1500.8,1928.4 1498.7,1932.7 1496.6,1937 1494.5,1934.8 1492.4,1928.9 1490.3,1939.1 1488.2,1938.3 1486.1,1935.9 1484,1932.7 1481.9,1928.4 1479.8,1930.2 1477.7,1936.4 1475.6,1937.5 1473.5,1930.1 1471.4,1928.2 1469.3,1927.9 1467.2,1934.5 1465.1,1930.5 1463,1939.6 1460.9,1928.8 1458.8,1932.9 1456.7,1933.6 1454.6,1929.9 1452.5,1937.6 1450.4,1929.6 1448.3,1931.9 1446.2,1930.5 1444.1,1928.1 1442,1929.1 1439.9,1938.8 1437.8,1931.6 1435.7,1932.7 1433.6,1929.6 1431.5,1929.8 1429.4,1930 1427.3,1928.2 1425.2,1931.2 1423.1,1939.5 1421,1928.8 1418.9,1936.4 1416.8,1937.7 1414.7,1929.3 1412.6,1931.7 1410.5,1931.3 1408.4,1935.2 1406.3,1929.3 1404.2,1930.5 1402.1,1924.8 1400,1932.2 1397.9,1925.2 1395.8,1930.3 1393.7,1937.7 1391.6,1939.8 1389.5,1929.7 1387.4,1939 1385.3,1929.8 1383.2,1929.8 1381.1,1931 1379,1929.9 1376.9,1935.2 1374.8,1934 1372.7,1928.8 1370.6,1932.5 1368.5,1928.3 1366.4,1928.5 1364.3,1930.7 1362.2,1935.8 1360.1,1931.8 1358,1930.7 1355.9,1936 1353.8,1927.7 1351.7,1939 1349.6,1934.9 1347.5,1931.9 1345.4,1932.2 1343.3,1931.1 1341.2,1928.2 1339.1,1931.4 1337,1939.4 1334.9,1931.8 1332.8,1931.5 1330.7,1929.7 1328.6,1928.2 1326.5,1929.5 1324.4,1930.8 1322.3,1938.4 1320.2,1932.1 1318.1,1934 1316,1940.5 1313.9,1933 1311.8,1929" fill="#231719"/>
<path d="M1357.6 1761.4V1940.3M1405.9 1761.4V1940.3M1454.1 1761.4V1940.3M1502.4 1761.4V1940.3M1550.7 1761.4V1940.3M1599 1761.4V1940.3M1647.3 1761.4V1940.3" stroke="#fdb4c1" stroke-opacity=".13" stroke-width="1.8" fill="none"/>
<path d="M1502.4 1720.1v7.2M1502.4 1931.9v7.2" stroke="#0a0a0a" stroke-opacity=".9" stroke-width="2.4" fill="none"/>
<rect x="4036.4" y="1717.9" width="387.3" height="223.9" fill="#fdb4c1"/>
<rect x="4036.4" y="1717.9" width="2" height="223.9" fill="#bb858e"/>
<rect x="4036.4" y="1940.3" width="387.3" height="1.5" fill="#bb858e"/>
<rect x="4036.4" y="1759.4" width="387.3" height="1.6" fill="#bb858e"/>
<text class="tr" x="4043.6" y="1748.5" font-size="24.4" fill="rgba(0,0,0,.72)" textLength="98.5">shaker2</text>
<path d="M4061.5 1761.4V1940.3M4109.8 1761.4V1940.3M4158.1 1761.4V1940.3M4206.4 1761.4V1940.3M4254.7 1761.4V1940.3M4303 1761.4V1940.3M4351.2 1761.4V1940.3M4399.5 1761.4V1940.3" stroke="#000" stroke-opacity=".1" stroke-width="1.8" fill="none"/>
<polygon points="4038.9,1775.2 4041,1772.6 4043.1,1775.9 4045.2,1772.3 4047.3,1772.2 4049.4,1775.8 4051.5,1774.1 4053.6,1774.7 4055.7,1775.5 4057.8,1766 4059.9,1768.7 4062,1775.9 4064.1,1768.1 4066.2,1775.9 4068.3,1772.3 4070.4,1772.2 4072.5,1774.7 4074.6,1773.5 4076.7,1773.6 4078.8,1771.7 4080.9,1776.2 4083,1776.3 4085.1,1767.4 4087.2,1776.1 4089.3,1771 4091.4,1774.2 4093.5,1772 4095.6,1766.2 4097.7,1773.2 4099.8,1766.1 4101.9,1769.7 4104,1776 4106.1,1771.8 4108.2,1765.8 4110.3,1774.9 4112.4,1775.3 4114.5,1767.1 4116.6,1776.2 4118.7,1774.3 4120.8,1769.1 4122.9,1765.1 4125,1776.4 4127.1,1775.2 4129.2,1773.4 4131.3,1767 4133.4,1772.1 4135.5,1775.3 4137.6,1771.6 4139.7,1772 4141.8,1775.6 4143.9,1769.5 4146,1774 4148.1,1773.3 4150.2,1775.8 4152.3,1766.5 4154.4,1776.5 4156.5,1776.3 4158.6,1764.4 4160.7,1772.4 4162.8,1770.6 4164.9,1776.2 4167,1772.6 4169.1,1774 4171.2,1777.3 4173.3,1772 4175.4,1774.5 4177.5,1774.3 4179.6,1773.1 4181.7,1778.5 4183.8,1773.2 4185.9,1773.4 4188,1773.7 4190.1,1773 4192.2,1773.4 4194.3,1775.7 4196.4,1769.2 4198.5,1775.1 4200.6,1775.7 4202.7,1772.7 4204.8,1773.6 4206.9,1766.5 4209,1772.4 4211.1,1770.9 4213.2,1772.8 4215.3,1773.7 4217.4,1773.5 4219.5,1772.4 4221.6,1774.8 4223.7,1774.5 4225.8,1772.6 4227.9,1772.9 4230,1770.1 4232.1,1767.6 4234.2,1764.9 4236.3,1776.2 4238.4,1773.7 4240.5,1774.3 4242.6,1763.4 4244.7,1773.6 4246.8,1766.4 4248.9,1777.4 4251,1776.3 4253.1,1777 4255.2,1767 4257.3,1771.7 4259.4,1775.3 4261.5,1776.2 4263.6,1769.9 4265.7,1776.1 4267.8,1770.4 4269.9,1772.6 4272,1767.6 4274.1,1767.7 4276.2,1765.4 4278.3,1773.8 4280.4,1773.6 4282.5,1770.1 4284.6,1776.2 4286.7,1773.2 4288.8,1772.1 4290.9,1775.9 4293,1774.8 4295.1,1772.2 4297.2,1776.2 4299.3,1771.1 4301.4,1767.5 4303.5,1768.1 4305.6,1764.5 4307.7,1772.5 4309.8,1763.2 4311.9,1772.7 4314,1771.3 4316.1,1774.7 4318.2,1766.2 4320.3,1764.6 4322.4,1768.4 4324.5,1773.3 4326.6,1771.7 4328.7,1768.9 4330.8,1771.7 4332.9,1774.7 4335,1771.1 4337.1,1773.4 4339.2,1774.5 4341.3,1772 4343.4,1776 4345.5,1774.5 4347.6,1772.2 4349.7,1775.1 4351.8,1774.8 4353.9,1772.5 4356,1769.1 4358.1,1769.3 4360.2,1767.6 4362.3,1768.3 4364.4,1774.9 4366.5,1773.5 4368.6,1775.1 4370.7,1774.1 4372.8,1772.9 4374.9,1772.3 4377,1770.6 4379.1,1770.3 4381.2,1772.2 4383.3,1771.8 4385.4,1774 4387.5,1774.9 4389.6,1770.1 4391.7,1776.4 4393.8,1772 4395.9,1772.9 4398,1776 4400.1,1774.1 4402.2,1769.1 4404.3,1779.3 4406.4,1769.9 4408.5,1767.4 4410.6,1776.4 4412.7,1773.4 4414.8,1776 4416.9,1778.3 4419,1774.9 4421.1,1774.8 4423.4,1775 4423.4,1837 4421.1,1840.7 4419,1836.4 4416.9,1835.7 4414.8,1836 4412.7,1838.9 4410.6,1840.5 4408.5,1836.5 4406.4,1840.9 4404.3,1836.9 4402.2,1837.2 4400.1,1839.9 4398,1839.9 4395.9,1837.8 4393.8,1842.1 4391.7,1843.1 4389.6,1845.3 4387.5,1845.1 4385.4,1840.3 4383.3,1844.1 4381.2,1837 4379.1,1837.6 4377,1836.3 4374.9,1839.9 4372.8,1837.4 4370.7,1837.9 4368.6,1846.7 4366.5,1839.4 4364.4,1842.6 4362.3,1837.3 4360.2,1835.6 4358.1,1838.9 4356,1841.7 4353.9,1838.8 4351.8,1841 4349.7,1844.4 4347.6,1841.1 4345.5,1844.1 4343.4,1836.1 4341.3,1839.6 4339.2,1843.7 4337.1,1837.3 4335,1847.5 4332.9,1843.3 4330.8,1837.6 4328.7,1836.1 4326.6,1843 4324.5,1836.1 4322.4,1835.8 4320.3,1844.9 4318.2,1833.5 4316.1,1839.7 4314,1844 4311.9,1836.8 4309.8,1843 4307.7,1839.2 4305.6,1839.9 4303.5,1842.9 4301.4,1837.9 4299.3,1838.4 4297.2,1846.6 4295.1,1846.3 4293,1839.3 4290.9,1837.2 4288.8,1839.1 4286.7,1836.4 4284.6,1842.4 4282.5,1839.9 4280.4,1836.7 4278.3,1846 4276.2,1841.8 4274.1,1836.7 4272,1841.9 4269.9,1845.4 4267.8,1836.7 4265.7,1836.2 4263.6,1839.1 4261.5,1836.4 4259.4,1836.1 4257.3,1838 4255.2,1837 4253.1,1836.3 4251,1836.5 4248.9,1839.9 4246.8,1841.5 4244.7,1840.2 4242.6,1833 4240.5,1838.6 4238.4,1835.7 4236.3,1839.5 4234.2,1837.7 4232.1,1839.2 4230,1837.7 4227.9,1840 4225.8,1838.2 4223.7,1838.5 4221.6,1837 4219.5,1844.9 4217.4,1838 4215.3,1840.2 4213.2,1836.1 4211.1,1844.6 4209,1839.6 4206.9,1843.6 4204.8,1843.4 4202.7,1844.7 4200.6,1848 4198.5,1836 4196.4,1838.3 4194.3,1837.7 4192.2,1838.1 4190.1,1842.2 4188,1838.8 4185.9,1842.6 4183.8,1835.9 4181.7,1845.8 4179.6,1845.9 4177.5,1838.3 4175.4,1836.4 4173.3,1842.8 4171.2,1837.2 4169.1,1834.6 4167,1837.4 4164.9,1838.6 4162.8,1839.2 4160.7,1839.1 4158.6,1840.2 4156.5,1837.7 4154.4,1842.9 4152.3,1844.3 4150.2,1841.8 4148.1,1848.4 4146,1846.9 4143.9,1837.1 4141.8,1835.7 4139.7,1841.8 4137.6,1843.2 4135.5,1839.8 4133.4,1845.4 4131.3,1845.4 4129.2,1846.4 4127.1,1839.6 4125,1836.1 4122.9,1839.4 4120.8,1838.2 4118.7,1838.6 4116.6,1838.1 4114.5,1836.6 4112.4,1836.3 4110.3,1840.3 4108.2,1836.2 4106.1,1837.7 4104,1841.3 4101.9,1845.7 4099.8,1836.5 4097.7,1844.8 4095.6,1841.3 4093.5,1836.8 4091.4,1842.5 4089.3,1840.4 4087.2,1837.4 4085.1,1836.9 4083,1839.3 4080.9,1838.3 4078.8,1842.5 4076.7,1837.3 4074.6,1836.6 4072.5,1833.2 4070.4,1847.5 4068.3,1836.3 4066.2,1843.4 4064.1,1840.3 4062,1840.1 4059.9,1838.6 4057.8,1841.2 4055.7,1839 4053.6,1844.8 4051.5,1838.3 4049.4,1847.4 4047.3,1839.6 4045.2,1838.6 4043.1,1841.6 4041,1836.7 4038.9,1838.9" fill="#231719"/>
<polygon points="4038.9,1866.3 4041,1856 4043.1,1862.7 4045.2,1857.8 4047.3,1855.8 4049.4,1859 4051.5,1861.1 4053.6,1863.6 4055.7,1862.2 4057.8,1860.2 4059.9,1855.7 4062,1862.5 4064.1,1862.4 4066.2,1861.2 4068.3,1858.4 4070.4,1861.3 4072.5,1861.3 4074.6,1852.3 4076.7,1866.2 4078.8,1863.4 4080.9,1857.4 4083,1861.3 4085.1,1861.1 4087.2,1862.8 4089.3,1862.9 4091.4,1862.7 4093.5,1865.1 4095.6,1863 4097.7,1856.4 4099.8,1860.9 4101.9,1866.7 4104,1863.6 4106.1,1860.7 4108.2,1852.7 4110.3,1863.8 4112.4,1854.2 4114.5,1863.4 4116.6,1858.6 4118.7,1860.2 4120.8,1857.4 4122.9,1863.9 4125,1864.7 4127.1,1859.5 4129.2,1855.7 4131.3,1867.3 4133.4,1854.3 4135.5,1862.9 4137.6,1858.3 4139.7,1859.6 4141.8,1864.3 4143.9,1864.8 4146,1864 4148.1,1860.8 4150.2,1854.1 4152.3,1861.2 4154.4,1865.6 4156.5,1861.6 4158.6,1862.6 4160.7,1857.9 4162.8,1862 4164.9,1862.5 4167,1864.5 4169.1,1865.6 4171.2,1865 4173.3,1862.8 4175.4,1860.8 4177.5,1854.8 4179.6,1863.5 4181.7,1856.6 4183.8,1864.6 4185.9,1862.7 4188,1861.9 4190.1,1855.1 4192.2,1860 4194.3,1862.8 4196.4,1864 4198.5,1856.8 4200.6,1859.8 4202.7,1860.8 4204.8,1862 4206.9,1858.7 4209,1861.6 4211.1,1862.3 4213.2,1854.8 4215.3,1861 4217.4,1860.4 4219.5,1862.4 4221.6,1856.8 4223.7,1865.2 4225.8,1856.4 4227.9,1863.5 4230,1868.1 4232.1,1861.9 4234.2,1863.4 4236.3,1861.6 4238.4,1861.1 4240.5,1861.4 4242.6,1864.6 4244.7,1859.4 4246.8,1864.3 4248.9,1860.6 4251,1862.9 4253.1,1856.2 4255.2,1857 4257.3,1863.7 4259.4,1861.6 4261.5,1865.6 4263.6,1855.3 4265.7,1864.8 4267.8,1862.5 4269.9,1865.4 4272,1863.3 4274.1,1854.8 4276.2,1857.1 4278.3,1865 4280.4,1862.5 4282.5,1864.5 4284.6,1864.8 4286.7,1861.3 4288.8,1861.4 4290.9,1862.8 4293,1863.6 4295.1,1855.5 4297.2,1864.6 4299.3,1854.2 4301.4,1860.8 4303.5,1854.3 4305.6,1862.2 4307.7,1853.5 4309.8,1864 4311.9,1856.5 4314,1857.5 4316.1,1865.4 4318.2,1867.4 4320.3,1864.2 4322.4,1863.9 4324.5,1865.4 4326.6,1863.6 4328.7,1856.8 4330.8,1857 4332.9,1865.2 4335,1855.9 4337.1,1859.7 4339.2,1859.6 4341.3,1863.6 4343.4,1859.1 4345.5,1864 4347.6,1857.1 4349.7,1862.3 4351.8,1864 4353.9,1853.4 4356,1862.2 4358.1,1863 4360.2,1864.9 4362.3,1857.1 4364.4,1858.1 4366.5,1857.3 4368.6,1856.6 4370.7,1865.1 4372.8,1854.7 4374.9,1861.3 4377,1855.1 4379.1,1854.6 4381.2,1861.8 4383.3,1864.6 4385.4,1863 4387.5,1862.3 4389.6,1862.6 4391.7,1864.2 4393.8,1861.2 4395.9,1853.5 4398,1861.6 4400.1,1867.8 4402.2,1859.1 4404.3,1862.9 4406.4,1862.6 4408.5,1856.6 4410.6,1864.3 4412.7,1862.5 4414.8,1861.6 4416.9,1858.6 4419,1857.4 4421.1,1856.1 4423.4,1865.7 4423.4,1927.7 4421.1,1928.5 4419,1939.5 4416.9,1932.2 4414.8,1925.5 4412.7,1939 4410.6,1934.8 4408.5,1930.9 4406.4,1929.4 4404.3,1935.6 4402.2,1937.5 4400.1,1928.8 4398,1931.8 4395.9,1930.5 4393.8,1932.5 4391.7,1932.5 4389.6,1931.1 4387.5,1940.1 4385.4,1930.9 4383.3,1934 4381.2,1930.2 4379.1,1939.2 4377,1929.2 4374.9,1928.3 4372.8,1929.2 4370.7,1929.4 4368.6,1928.9 4366.5,1931.9 4364.4,1929.7 4362.3,1929.7 4360.2,1929.4 4358.1,1939.9 4356,1930.3 4353.9,1939.8 4351.8,1931.1 4349.7,1929.8 4347.6,1932 4345.5,1929.5 4343.4,1928.1 4341.3,1932.5 4339.2,1928.5 4337.1,1928.3 4335,1936.5 4332.9,1929.1 4330.8,1929.8 4328.7,1927.3 4326.6,1933.1 4324.5,1925.8 4322.4,1931.7 4320.3,1930.4 4318.2,1925.4 4316.1,1939.6 4314,1936.4 4311.9,1929.1 4309.8,1931.9 4307.7,1936.5 4305.6,1927.6 4303.5,1928.2 4301.4,1932.5 4299.3,1930.1 4297.2,1936.7 4295.1,1938.3 4293,1927.2 4290.9,1937.7 4288.8,1939.2 4286.7,1929.2 4284.6,1938.8 4282.5,1929.9 4280.4,1928 4278.3,1929.9 4276.2,1935.7 4274.1,1929.4 4272,1938.9 4269.9,1927.9 4267.8,1939 4265.7,1932.5 4263.6,1934.6 4261.5,1938.1 4259.4,1932.5 4257.3,1929.2 4255.2,1929.5 4253.1,1931.6 4251,1931.2 4248.9,1932.2 4246.8,1936.8 4244.7,1935.6 4242.6,1936.7 4240.5,1932.6 4238.4,1928.8 4236.3,1931.8 4234.2,1932.5 4232.1,1937.3 4230,1928.1 4227.9,1928.6 4225.8,1937.6 4223.7,1931.5 4221.6,1930 4219.5,1929.5 4217.4,1930.3 4215.3,1930.1 4213.2,1938.4 4211.1,1930.2 4209,1928.7 4206.9,1929.7 4204.8,1936.8 4202.7,1936 4200.6,1932.2 4198.5,1929.9 4196.4,1928.7 4194.3,1928.2 4192.2,1938.4 4190.1,1928.2 4188,1929.5 4185.9,1935.9 4183.8,1931.6 4181.7,1932.2 4179.6,1933.7 4177.5,1935.7 4175.4,1930.7 4173.3,1929.5 4171.2,1932.9 4169.1,1936.2 4167,1927.7 4164.9,1931.1 4162.8,1930 4160.7,1934.8 4158.6,1932.7 4156.5,1929.6 4154.4,1930.9 4152.3,1932.4 4150.2,1929.2 4148.1,1936.5 4146,1932.4 4143.9,1928.5 4141.8,1927.9 4139.7,1929.6 4137.6,1928.9 4135.5,1930.4 4133.4,1930.3 4131.3,1928.4 4129.2,1928.1 4127.1,1928.3 4125,1940.2 4122.9,1929.5 4120.8,1935.4 4118.7,1930.1 4116.6,1936.6 4114.5,1932.3 4112.4,1940.3 4110.3,1939 4108.2,1932 4106.1,1927.2 4104,1926.2 4101.9,1928.8 4099.8,1932.7 4097.7,1928.4 4095.6,1934.5 4093.5,1927.8 4091.4,1938.6 4089.3,1929.2 4087.2,1928.6 4085.1,1935.4 4083,1933.6 4080.9,1929.7 4078.8,1932 4076.7,1937.6 4074.6,1928.2 4072.5,1930.6 4070.4,1929.5 4068.3,1930 4066.2,1930.9 4064.1,1932.8 4062,1930.2 4059.9,1928 4057.8,1936.3 4055.7,1931.6 4053.6,1929 4051.5,1931 4049.4,1928 4047.3,1932.6 4045.2,1931.4 4043.1,1932.4 4041,1935.3 4038.9,1938.4" fill="#231719"/>
<path d="M4061.5 1761.4V1940.3M4109.8 1761.4V1940.3M4158.1 1761.4V1940.3M4206.4 1761.4V1940.3M4254.7 1761.4V1940.3M4303 1761.4V1940.3M4351.2 1761.4V1940.3M4399.5 1761.4V1940.3" stroke="#fdb4c1" stroke-opacity=".13" stroke-width="1.8" fill="none"/>
<path d="M4134 1720.1v7.2M4134 1931.9v7.2M4327.1 1720.1v7.2M4327.1 1931.9v7.2" stroke="#0a0a0a" stroke-opacity=".9" stroke-width="2.4" fill="none"/>
<rect x="4423.7" y="1717.9" width="328.3" height="223.9" fill="#fdb4c1"/>
<rect x="4423.7" y="1717.9" width="2" height="223.9" fill="#bb858e"/>
<rect x="4423.7" y="1940.3" width="328.3" height="1.5" fill="#bb858e"/>
<rect x="4423.7" y="1759.4" width="328.3" height="1.6" fill="#bb858e"/>
<text class="tr" x="4430.9" y="1748.5" font-size="24.4" fill="rgba(0,0,0,.72)" textLength="98.5">shaker2</text>
<path d="M4447.8 1761.4V1940.3M4496.1 1761.4V1940.3M4544.4 1761.4V1940.3M4592.7 1761.4V1940.3M4641 1761.4V1940.3M4689.2 1761.4V1940.3M4737.5 1761.4V1940.3" stroke="#000" stroke-opacity=".1" stroke-width="1.8" fill="none"/>
<polygon points="4426.2,1776 4428.3,1768 4430.4,1774.5 4432.5,1767.1 4434.6,1766.6 4436.7,1778.5 4438.8,1774.3 4440.9,1776 4443,1772.2 4445.1,1775.4 4447.2,1773.9 4449.3,1776.1 4451.4,1774.2 4453.5,1776.1 4455.6,1768.8 4457.7,1776.4 4459.8,1774.8 4461.9,1775.6 4464,1767.5 4466.1,1772.5 4468.2,1768.4 4470.3,1775.1 4472.4,1776.5 4474.5,1767.6 4476.6,1764.3 4478.7,1770.3 4480.8,1770.7 4482.9,1768 4485,1775.8 4487.1,1775.4 4489.2,1773.2 4491.3,1775.2 4493.4,1776.2 4495.5,1776 4497.6,1772.2 4499.7,1770.3 4501.8,1772.6 4503.9,1775.3 4506,1778.3 4508.1,1772.2 4510.2,1767.7 4512.3,1771.7 4514.4,1767 4516.5,1774.4 4518.6,1767.5 4520.7,1770.4 4522.8,1767.2 4524.9,1773.1 4527,1775.4 4529.1,1768.8 4531.2,1774.2 4533.3,1769.2 4535.4,1775.2 4537.5,1773.1 4539.6,1775.7 4541.7,1770.1 4543.8,1774.1 4545.9,1766 4548,1768.2 4550.1,1776 4552.2,1766.1 4554.3,1764.9 4556.4,1775.5 4558.5,1775.9 4560.6,1776.1 4562.7,1775.4 4564.8,1774.2 4566.9,1763.4 4569,1771.7 4571.1,1771.8 4573.2,1772.6 4575.3,1778.6 4577.4,1776.7 4579.5,1778.8 4581.6,1770.9 4583.7,1769.5 4585.8,1768.2 4587.9,1765 4590,1764.5 4592.1,1771.8 4594.2,1774.3 4596.3,1774.8 4598.4,1768.5 4600.5,1774.9 4602.6,1768.1 4604.7,1774.3 4606.8,1774.6 4608.9,1775.1 4611,1772.8 4613.1,1771.8 4615.2,1774.2 4617.3,1767.4 4619.4,1771.8 4621.5,1776.3 4623.6,1773.6 4625.7,1767.6 4627.8,1767 4629.9,1766.1 4632,1766.6 4634.1,1771.4 4636.2,1773.7 4638.3,1768.9 4640.4,1771.7 4642.5,1772.6 4644.6,1775.2 4646.7,1767.3 4648.8,1771.8 4650.9,1771.6 4653,1768.9 4655.1,1773.5 4657.2,1775.9 4659.3,1775 4661.4,1773.6 4663.5,1776.7 4665.6,1772.1 4667.7,1766 4669.8,1775.4 4671.9,1774.2 4674,1767.8 4676.1,1775.2 4678.2,1766.2 4680.3,1769.2 4682.4,1770.3 4684.5,1769 4686.6,1769.2 4688.7,1776.4 4690.8,1764.3 4692.9,1774.2 4695,1774.2 4697.1,1775.5 4699.2,1765.1 4701.3,1772.3 4703.4,1773.6 4705.5,1772.2 4707.6,1767.8 4709.7,1773.7 4711.8,1775.4 4713.9,1770.2 4716,1772.6 4718.1,1776.9 4720.2,1771.5 4722.3,1773.2 4724.4,1769.3 4726.5,1766.2 4728.6,1772.5 4730.7,1771.3 4732.8,1771.1 4734.9,1771.9 4737,1772.3 4739.1,1772.8 4741.2,1765.4 4743.3,1773 4745.4,1771.4 4747.5,1779.2 4749.6,1765.6 4751.7,1775 4751.7,1837 4749.6,1839.2 4747.5,1847 4745.4,1836.3 4743.3,1837.7 4741.2,1836.4 4739.1,1833 4737,1845.1 4734.9,1835.9 4732.8,1844.5 4730.7,1832.8 4728.6,1838 4726.5,1834 4724.4,1837.6 4722.3,1840.5 4720.2,1846.1 4718.1,1840.7 4716,1841.5 4713.9,1838 4711.8,1836.5 4709.7,1840.4 4707.6,1834.2 4705.5,1839 4703.4,1848.2 4701.3,1847.3 4699.2,1835.7 4697.1,1837.4 4695,1836.4 4692.9,1834.5 4690.8,1837.3 4688.7,1839.5 4686.6,1836.4 4684.5,1845.5 4682.4,1846.7 4680.3,1838.6 4678.2,1844.4 4676.1,1836 4674,1839.6 4671.9,1841 4669.8,1842 4667.7,1836 4665.6,1836.1 4663.5,1836.7 4661.4,1837 4659.3,1839.1 4657.2,1846.2 4655.1,1842.2 4653,1840.5 4650.9,1842.6 4648.8,1842.8 4646.7,1846.6 4644.6,1835.7 4642.5,1839.4 4640.4,1839.9 4638.3,1840.3 4636.2,1839.2 4634.1,1845.1 4632,1835.6 4629.9,1839.5 4627.8,1840.4 4625.7,1846.2 4623.6,1840.5 4621.5,1840.2 4619.4,1836.7 4617.3,1839.2 4615.2,1839.6 4613.1,1845.8 4611,1837.3 4608.9,1838.4 4606.8,1836.7 4604.7,1840.2 4602.6,1833.8 4600.5,1842.7 4598.4,1832.7 4596.3,1838 4594.2,1835.7 4592.1,1844.9 4590,1837.6 4587.9,1836.7 4585.8,1847.1 4583.7,1840.3 4581.6,1833.4 4579.5,1838.2 4577.4,1836 4575.3,1845.4 4573.2,1840.1 4571.1,1842.3 4569,1843.8 4566.9,1842.4 4564.8,1835.8 4562.7,1836.1 4560.6,1836 4558.5,1838.7 4556.4,1845 4554.3,1845.8 4552.2,1837.7 4550.1,1836.7 4548,1843.9 4545.9,1840.5 4543.8,1845.3 4541.7,1844.9 4539.6,1835.6 4537.5,1847.4 4535.4,1843.8 4533.3,1846.7 4531.2,1837.3 4529.1,1837.4 4527,1838.7 4524.9,1839.4 4522.8,1845 4520.7,1844.7 4518.6,1837.9 4516.5,1840.4 4514.4,1838.4 4512.3,1839.7 4510.2,1839.6 4508.1,1846.3 4506,1840.2 4503.9,1847.7 4501.8,1847 4499.7,1843.6 4497.6,1847.7 4495.5,1834.7 4493.4,1840.2 4491.3,1840.2 4489.2,1835.8 4487.1,1847.3 4485,1836.3 4482.9,1841.2 4480.8,1838.2 4478.7,1842.9 4476.6,1847.1 4474.5,1840.3 4472.4,1839.3 4470.3,1837.4 4468.2,1838.5 4466.1,1839.9 4464,1847 4461.9,1842.6 4459.8,1844.3 4457.7,1840.2 4455.6,1839 4453.5,1836.7 4451.4,1837.7 4449.3,1839 4447.2,1844.9 4445.1,1845.8 4443,1836.5 4440.9,1841.4 4438.8,1839.9 4436.7,1834.5 4434.6,1838.7 4432.5,1844.5 4430.4,1844.4 4428.3,1845.6 4426.2,1835.8" fill="#231719"/>
<polygon points="4426.2,1857.8 4428.3,1862.2 4430.4,1855.7 4432.5,1864.1 4434.6,1865.5 4436.7,1860.7 4438.8,1861.3 4440.9,1858.8 4443,1864.1 4445.1,1861.1 4447.2,1853 4449.3,1856.1 4451.4,1860.7 4453.5,1864.9 4455.6,1863.5 4457.7,1862.7 4459.8,1867.1 4461.9,1863 4464,1863 4466.1,1865.6 4468.2,1863.1 4470.3,1859.4 4472.4,1866.2 4474.5,1859.5 4476.6,1863.4 4478.7,1861.4 4480.8,1862.6 4482.9,1863.3 4485,1864.4 4487.1,1862.8 4489.2,1860.7 4491.3,1863.7 4493.4,1868.1 4495.5,1861 4497.6,1859.6 4499.7,1864.8 4501.8,1864.5 4503.9,1863.8 4506,1860.7 4508.1,1860.4 4510.2,1861.5 4512.3,1855.7 4514.4,1865.2 4516.5,1864.6 4518.6,1856.2 4520.7,1856.5 4522.8,1864.6 4524.9,1861.2 4527,1861 4529.1,1858.7 4531.2,1864.4 4533.3,1854.7 4535.4,1856.9 4537.5,1864.8 4539.6,1864.3 4541.7,1863.1 4543.8,1862.8 4545.9,1853.6 4548,1867 4550.1,1865.2 4552.2,1859.7 4554.3,1864.7 4556.4,1856.3 4558.5,1862.2 4560.6,1862.6 4562.7,1862.4 4564.8,1864.3 4566.9,1858.8 4569,1861.9 4571.1,1864.1 4573.2,1867.6 4575.3,1864.7 4577.4,1852.8 4579.5,1858.6 4581.6,1862.9 4583.7,1862.6 4585.8,1865.6 4587.9,1863.2 4590,1858.4 4592.1,1864.7 4594.2,1858.3 4596.3,1862.4 4598.4,1858.2 4600.5,1865.5 4602.6,1861.3 4604.7,1861.8 4606.8,1864.4 4608.9,1861.9 4611,1862.8 4613.1,1856.9 4615.2,1862 4617.3,1865.4 4619.4,1859.9 4621.5,1864.9 4623.6,1862 4625.7,1865.4 4627.8,1864.4 4629.9,1861.8 4632,1858.1 4634.1,1859.9 4636.2,1852.9 4638.3,1861.4 4640.4,1857.7 4642.5,1859.7 4644.6,1858.9 4646.7,1864.9 4648.8,1860.9 4650.9,1862.2 4653,1865.1 4655.1,1861.1 4657.2,1863.7 4659.3,1859.6 4661.4,1864.9 4663.5,1859.2 4665.6,1862.4 4667.7,1862.4 4669.8,1862.5 4671.9,1862.8 4674,1863.4 4676.1,1864.6 4678.2,1858.5 4680.3,1863.2 4682.4,1863.8 4684.5,1861.6 4686.6,1860.7 4688.7,1861.4 4690.8,1864.1 4692.9,1857.9 4695,1862 4697.1,1861.4 4699.2,1857.3 4701.3,1863.5 4703.4,1865.4 4705.5,1864.3 4707.6,1861.6 4709.7,1862.3 4711.8,1864.5 4713.9,1865.2 4716,1862.6 4718.1,1863.3 4720.2,1862.9 4722.3,1858.1 4724.4,1865.1 4726.5,1865.4 4728.6,1862.3 4730.7,1854.9 4732.8,1865 4734.9,1861.5 4737,1865.4 4739.1,1857.5 4741.2,1867.5 4743.3,1863.2 4745.4,1860.4 4747.5,1853.8 4749.6,1861.3 4751.7,1865.7 4751.7,1927.7 4749.6,1930.9 4747.5,1932 4745.4,1928.6 4743.3,1938.2 4741.2,1930.7 4739.1,1928.7 4737,1933.1 4734.9,1932 4732.8,1932.6 4730.7,1930 4728.6,1927.1 4726.5,1928.8 4724.4,1935.3 4722.3,1936.8 4720.2,1932 4718.1,1930.4 4716,1931.8 4713.9,1932.8 4711.8,1934.3 4709.7,1932.3 4707.6,1929.1 4705.5,1931.8 4703.4,1931.1 4701.3,1929.4 4699.2,1927.8 4697.1,1932.3 4695,1934.8 4692.9,1928.1 4690.8,1932.6 4688.7,1931.7 4686.6,1931.1 4684.5,1930.2 4682.4,1937.9 4680.3,1931.7 4678.2,1935.8 4676.1,1931.9 4674,1931 4671.9,1937.9 4669.8,1928.5 4667.7,1930.5 4665.6,1930.3 4663.5,1928.8 4661.4,1927.8 4659.3,1928.2 4657.2,1930.8 4655.1,1931.4 4653,1937.7 4650.9,1935.9 4648.8,1938.3 4646.7,1938.3 4644.6,1933.6 4642.5,1934.3 4640.4,1936.9 4638.3,1927.8 4636.2,1930.5 4634.1,1931.7 4632,1928.2 4629.9,1929.5 4627.8,1928.1 4625.7,1933.9 4623.6,1930.1 4621.5,1935.4 4619.4,1929.4 4617.3,1929 4615.2,1936.5 4613.1,1935 4611,1931.4 4608.9,1931.7 4606.8,1929.4 4604.7,1926.8 4602.6,1929.3 4600.5,1939.3 4598.4,1929.6 4596.3,1935.8 4594.2,1931.1 4592.1,1931.1 4590,1928.1 4587.9,1930.8 4585.8,1936.5 4583.7,1928.6 4581.6,1928.1 4579.5,1931.6 4577.4,1934.9 4575.3,1929.3 4573.2,1935.7 4571.1,1934.9 4569,1932 4566.9,1932.2 4564.8,1931.3 4562.7,1931.2 4560.6,1929.5 4558.5,1932.5 4556.4,1932.5 4554.3,1927.9 4552.2,1929.9 4550.1,1927.4 4548,1939.4 4545.9,1933.7 4543.8,1931.9 4541.7,1932.2 4539.6,1930.2 4537.5,1937.1 4535.4,1936.5 4533.3,1927.7 4531.2,1928.2 4529.1,1931.7 4527,1929 4524.9,1930.2 4522.8,1937 4520.7,1926.7 4518.6,1933.6 4516.5,1935 4514.4,1929.9 4512.3,1928.6 4510.2,1932 4508.1,1928.5 4506,1928.3 4503.9,1928.5 4501.8,1931.7 4499.7,1928.3 4497.6,1935.8 4495.5,1931.5 4493.4,1934.3 4491.3,1927 4489.2,1931.8 4487.1,1936.1 4485,1933.9 4482.9,1931.2 4480.8,1932.5 4478.7,1929.1 4476.6,1937.2 4474.5,1932.2 4472.4,1937.6 4470.3,1929.2 4468.2,1929.6 4466.1,1928 4464,1929.4 4461.9,1929.6 4459.8,1936.2 4457.7,1939.5 4455.6,1936.9 4453.5,1928.8 4451.4,1927.7 4449.3,1930.6 4447.2,1930.3 4445.1,1928.1 4443,1928.8 4440.9,1929 4438.8,1925.2 4436.7,1930.2 4434.6,1926.4 4432.5,1940.6 4430.4,1931.7 4428.3,1938.9 4426.2,1937.2" fill="#231719"/>
<path d="M4447.8 1761.4V1940.3M4496.1 1761.4V1940.3M4544.4 1761.4V1940.3M4592.7 1761.4V1940.3M4641 1761.4V1940.3M4689.2 1761.4V1940.3M4737.5 1761.4V1940.3" stroke="#fdb4c1" stroke-opacity=".13" stroke-width="1.8" fill="none"/>
<path d="M4616.8 1720.1v7.2M4616.8 1931.9v7.2" stroke="#0a0a0a" stroke-opacity=".9" stroke-width="2.4" fill="none"/>
<rect x="0" y="1947" width="729.9" height="44.4" fill="#d6ae50"/>
<rect x="0" y="1947" width="729.9" height="2" fill="#a2843c"/>
<rect x="0" y="1989.2" width="729.9" height="2.2" fill="#9a7d39"/>
<clipPath id="c623"><rect x="0" y="1947" width="729.4" height="44.4"/></clipPath>
<text class="tr" x="-35.5" y="1977.6" font-size="24.4" fill="rgba(0,0,0,.72)" textLength="114.5" clip-path="url(#c623)" stroke="#000" stroke-opacity=".45" stroke-width=".35" paint-order="stroke">HiLoop01</text>
<rect x="729.9" y="1947" width="965.7" height="44.4" fill="#d6ae50"/>
<rect x="729.9" y="1947" width="965.7" height="2" fill="#a2843c"/>
<rect x="729.9" y="1989.2" width="965.7" height="2.2" fill="#9a7d39"/>
<rect x="729.9" y="1947" width="2" height="44.4" fill="#9a7d39"/>
<clipPath id="c629"><rect x="729.9" y="1947" width="965.2" height="44.4"/></clipPath>
<text class="tr" x="737.1" y="1977.6" font-size="24.4" fill="rgba(0,0,0,.72)" textLength="114.5" clip-path="url(#c629)" stroke="#000" stroke-opacity=".45" stroke-width=".35" paint-order="stroke">HiLoop01</text>
<rect x="4036.4" y="1947" width="715.6" height="44.4" fill="#d6ae50"/>
<rect x="4036.4" y="1947" width="715.6" height="2" fill="#a2843c"/>
<rect x="4036.4" y="1989.2" width="715.6" height="2.2" fill="#9a7d39"/>
<rect x="4036.4" y="1947" width="2" height="44.4" fill="#9a7d39"/>
<clipPath id="c635"><rect x="4036.4" y="1947" width="715.1" height="44.4"/></clipPath>
<text class="tr" x="4043.6" y="1977.6" font-size="24.4" fill="rgba(0,0,0,.72)" textLength="114.5" clip-path="url(#c635)" stroke="#000" stroke-opacity=".45" stroke-width=".35" paint-order="stroke">HiLoop01</text>
<line x1="4.4" y1="1952.8" x2="723.9" y2="1952.8" stroke="#0a0a0a" stroke-opacity=".9" stroke-width="7.2" stroke-dasharray="2.4 21.7"/>
<line x1="4.4" y1="1985.1" x2="723.9" y2="1985.1" stroke="#0a0a0a" stroke-opacity=".9" stroke-width="7.2" stroke-dasharray="2.4 21.7"/>
<line x1="752.8" y1="1952.8" x2="1691.6" y2="1952.8" stroke="#0a0a0a" stroke-opacity=".9" stroke-width="7.2" stroke-dasharray="2.4 21.7"/>
<line x1="752.8" y1="1985.1" x2="1691.6" y2="1985.1" stroke="#0a0a0a" stroke-opacity=".9" stroke-width="7.2" stroke-dasharray="2.4 21.7"/>
<line x1="4059.3" y1="1952.8" x2="4748" y2="1952.8" stroke="#0a0a0a" stroke-opacity=".9" stroke-width="7.2" stroke-dasharray="2.4 21.7"/>
<line x1="4059.3" y1="1985.1" x2="4748" y2="1985.1" stroke="#0a0a0a" stroke-opacity=".9" stroke-width="7.2" stroke-dasharray="2.4 21.7"/>
<rect x="0" y="1996.5" width="729.9" height="44.3" fill="#b3c0fc"/>
<rect x="0" y="1996.5" width="729.9" height="2" fill="#8891bf"/>
<rect x="0" y="2038.6" width="729.9" height="2.2" fill="#808ab5"/>
<clipPath id="c646"><rect x="0" y="1996.5" width="729.4" height="44.3"/></clipPath>
<text class="tr" x="-35.5" y="2027.1" font-size="24.4" fill="rgba(0,0,0,.72)" textLength="115" clip-path="url(#c646)" stroke="#000" stroke-opacity=".45" stroke-width=".35" paint-order="stroke">HiLoop02</text>
<rect x="729.9" y="1996.5" width="965.7" height="44.3" fill="#b3c0fc"/>
<rect x="729.9" y="1996.5" width="965.7" height="2" fill="#8891bf"/>
<rect x="729.9" y="2038.6" width="965.7" height="2.2" fill="#808ab5"/>
<rect x="729.9" y="1996.5" width="2" height="44.3" fill="#808ab5"/>
<clipPath id="c652"><rect x="729.9" y="1996.5" width="965.2" height="44.3"/></clipPath>
<text class="tr" x="737.1" y="2027.1" font-size="24.4" fill="rgba(0,0,0,.72)" textLength="115" clip-path="url(#c652)" stroke="#000" stroke-opacity=".45" stroke-width=".35" paint-order="stroke">HiLoop02</text>
<rect x="4036.4" y="1996.5" width="715.6" height="44.3" fill="#b3c0fc"/>
<rect x="4036.4" y="1996.5" width="715.6" height="2" fill="#8891bf"/>
<rect x="4036.4" y="2038.6" width="715.6" height="2.2" fill="#808ab5"/>
<rect x="4036.4" y="1996.5" width="2" height="44.3" fill="#808ab5"/>
<clipPath id="c658"><rect x="4036.4" y="1996.5" width="715.1" height="44.3"/></clipPath>
<text class="tr" x="4043.6" y="2027.1" font-size="24.4" fill="rgba(0,0,0,.72)" textLength="115" clip-path="url(#c658)" stroke="#000" stroke-opacity=".45" stroke-width=".35" paint-order="stroke">HiLoop02</text>
<line x1="4.4" y1="2002.3" x2="723.9" y2="2002.3" stroke="#0a0a0a" stroke-opacity=".9" stroke-width="7.2" stroke-dasharray="2.4 3.6"/>
<line x1="4.4" y1="2034.5" x2="723.9" y2="2034.5" stroke="#0a0a0a" stroke-opacity=".9" stroke-width="7.2" stroke-dasharray="2.4 3.6"/>
<line x1="734.7" y1="2002.3" x2="1691.6" y2="2002.3" stroke="#0a0a0a" stroke-opacity=".9" stroke-width="7.2" stroke-dasharray="2.4 3.6"/>
<line x1="734.7" y1="2034.5" x2="1691.6" y2="2034.5" stroke="#0a0a0a" stroke-opacity=".9" stroke-width="7.2" stroke-dasharray="2.4 3.6"/>
<line x1="4041.2" y1="2002.3" x2="4748" y2="2002.3" stroke="#0a0a0a" stroke-opacity=".9" stroke-width="7.2" stroke-dasharray="2.4 3.6"/>
<line x1="4041.2" y1="2034.5" x2="4748" y2="2034.5" stroke="#0a0a0a" stroke-opacity=".9" stroke-width="7.2" stroke-dasharray="2.4 3.6"/>
<rect x="1116.2" y="2046" width="772.6" height="44.3" fill="#fdb4c1"/>
<rect x="1116.2" y="2046" width="772.6" height="2" fill="#c08892"/>
<rect x="1116.2" y="2088.1" width="772.6" height="2.2" fill="#b6818a"/>
<rect x="1116.2" y="2046" width="2" height="44.3" fill="#b6818a"/>
<clipPath id="c670"><rect x="1116.2" y="2046" width="772.1" height="44.3"/></clipPath>
<text class="tr" x="1123.4" y="2076.6" font-size="24.4" fill="rgba(0,0,0,.72)" textLength="182.5" clip-path="url(#c670)" stroke="#000" stroke-opacity=".45" stroke-width=".35" paint-order="stroke">909 Ride REC 1</text>
<path d="M1738 2048C1792.6 2048 1813.4 2088.3 1868 2088.3H1888.7V2048z" fill="#dc9aa6"/>
<rect x="4229" y="2046" width="523" height="44.3" fill="#fdb4c1"/>
<rect x="4229" y="2046" width="523" height="2" fill="#c08892"/>
<rect x="4229" y="2088.1" width="523" height="2.2" fill="#b6818a"/>
<rect x="4229" y="2046" width="2" height="44.3" fill="#b6818a"/>
<clipPath id="c677"><rect x="4229" y="2046" width="522.5" height="44.3"/></clipPath>
<text class="tr" x="4236.2" y="2076.6" font-size="24.4" fill="rgba(0,0,0,.72)" textLength="182.5" clip-path="url(#c677)" stroke="#000" stroke-opacity=".45" stroke-width=".35" paint-order="stroke">909 Ride REC 1</text>
<rect x="1116.2" y="2095.3" width="579.4" height="44.3" fill="#fdb4c1"/>
<rect x="1116.2" y="2095.3" width="579.4" height="2" fill="#c08892"/>
<rect x="1116.2" y="2137.4" width="579.4" height="2.2" fill="#b6818a"/>
<rect x="1116.2" y="2095.3" width="2" height="44.3" fill="#b6818a"/>
<clipPath id="c683"><rect x="1116.2" y="2095.3" width="578.9" height="44.3"/></clipPath>
<text class="tr" x="1123.4" y="2125.9" font-size="24.4" fill="rgba(0,0,0,.72)" textLength="47.5" clip-path="url(#c683)" stroke="#000" stroke-opacity=".45" stroke-width=".35" paint-order="stroke">ride</text>
<rect x="4229" y="2095.3" width="523" height="44.3" fill="#fdb4c1"/>
<rect x="4229" y="2095.3" width="523" height="2" fill="#c08892"/>
<rect x="4229" y="2137.4" width="523" height="2.2" fill="#b6818a"/>
<rect x="4229" y="2095.3" width="2" height="44.3" fill="#b6818a"/>
<clipPath id="c689"><rect x="4229" y="2095.3" width="522.5" height="44.3"/></clipPath>
<text class="tr" x="4236.2" y="2125.9" font-size="24.4" fill="rgba(0,0,0,.72)" textLength="47.5" clip-path="url(#c689)" stroke="#000" stroke-opacity=".45" stroke-width=".35" paint-order="stroke">ride</text>
<path d="M1212.7 2097.5v7.2M1212.7 2129.7v7.2M1309.3 2097.5v7.2M1309.3 2129.7v7.2M1405.9 2097.5v7.2M1405.9 2129.7v7.2M1502.4 2097.5v7.2M1502.4 2129.7v7.2M1599 2097.5v7.2M1599 2129.7v7.2M4134 2097.5v7.2M4134 2129.7v7.2M4327.1 2097.5v7.2M4327.1 2129.7v7.2M4423.7 2097.5v7.2M4423.7 2129.7v7.2M4520.2 2097.5v7.2M4520.2 2129.7v7.2M4616.8 2097.5v7.2M4616.8 2129.7v7.2M4713.4 2097.5v7.2M4713.4 2129.7v7.2" stroke="#0a0a0a" stroke-opacity=".9" stroke-width="2.4" fill="none"/>
<path d="M4037.7 2090.3V2047.3H4227.7V2090.3" stroke="#f0f0ee" stroke-width="2.6" fill="none"/>
<clipPath id="s90"><rect x="4036.4" y="2046" width="189.6" height="44.3"/></clipPath>
<text class="tr" x="4044" y="2076.6" font-size="24.4" fill="#f4f4f2" textLength="182.5" clip-path="url(#s90)" stroke="#f4f4f2" stroke-width=".5">909 Ride REC 1</text>
<path d="M4037.7 2139.6V2096.6H4227.7V2139.6" stroke="#f0f0ee" stroke-width="2.6" fill="none"/>
<clipPath id="sri"><rect x="4036.4" y="2095.3" width="189.6" height="44.3"/></clipPath>
<text class="tr" x="4044" y="2125.9" font-size="24.4" fill="#f4f4f2" textLength="47.5" clip-path="url(#sri)" stroke="#f4f4f2" stroke-width=".5">ride</text>
<rect x="0" y="2144.6" width="729.9" height="44.2" fill="#e6a5ec"/>
<rect x="0" y="2144.6" width="729.9" height="2" fill="#ae7db3"/>
<rect x="0" y="2186.6" width="729.9" height="2.2" fill="#a576a9"/>
<clipPath id="c701"><rect x="0" y="2144.6" width="729.4" height="44.2"/></clipPath>
<text class="tr" x="-35.5" y="2175.2" font-size="24.4" fill="rgba(0,0,0,.72)" textLength="235" clip-path="url(#c701)" stroke="#000" stroke-opacity=".45" stroke-width=".35" paint-order="stroke">Atmo Wien Airport</text>
<rect x="729.9" y="2144.6" width="2124.5" height="44.2" fill="#e6a5ec"/>
<rect x="729.9" y="2144.6" width="2124.5" height="2" fill="#ae7db3"/>
<rect x="729.9" y="2186.6" width="2124.5" height="2.2" fill="#a576a9"/>
<rect x="729.9" y="2144.6" width="2" height="44.2" fill="#a576a9"/>
<clipPath id="c707"><rect x="729.9" y="2144.6" width="2124" height="44.2"/></clipPath>
<text class="tr" x="737.1" y="2175.2" font-size="24.4" fill="rgba(0,0,0,.72)" textLength="235" clip-path="url(#c707)" stroke="#000" stroke-opacity=".45" stroke-width=".35" paint-order="stroke">Atmo Wien Airport</text>
<rect x="2854.4" y="2144.6" width="1158.8" height="44.2" fill="#e6a5ec"/>
<rect x="2854.4" y="2144.6" width="1158.8" height="2" fill="#ae7db3"/>
<rect x="2854.4" y="2186.6" width="1158.8" height="2.2" fill="#a576a9"/>
<rect x="2854.4" y="2144.6" width="2" height="44.2" fill="#a576a9"/>
<clipPath id="c713"><rect x="2854.4" y="2144.6" width="1158.3" height="44.2"/></clipPath>
<text class="tr" x="2861.6" y="2175.2" font-size="24.4" fill="rgba(0,0,0,.72)" textLength="235" clip-path="url(#c713)" stroke="#000" stroke-opacity=".45" stroke-width=".35" paint-order="stroke">Atmo Wien Airport</text>
<rect x="4036.4" y="2144.6" width="715.6" height="44.2" fill="#e6a5ec"/>
<rect x="4036.4" y="2144.6" width="715.6" height="2" fill="#ae7db3"/>
<rect x="4036.4" y="2186.6" width="715.6" height="2.2" fill="#a576a9"/>
<rect x="4036.4" y="2144.6" width="2" height="44.2" fill="#a576a9"/>
<clipPath id="c719"><rect x="4036.4" y="2144.6" width="715.1" height="44.2"/></clipPath>
<text class="tr" x="4043.6" y="2175.2" font-size="24.4" fill="rgba(0,0,0,.72)" textLength="235" clip-path="url(#c719)" stroke="#000" stroke-opacity=".45" stroke-width=".35" paint-order="stroke">Atmo Wien Airport</text>
<line x1="0.9" y1="2150.4" x2="723.9" y2="2150.4" stroke="#0a0a0a" stroke-opacity=".9" stroke-width="7.2" stroke-dasharray="2.4 21.7"/>
<line x1="0.9" y1="2182.5" x2="723.9" y2="2182.5" stroke="#0a0a0a" stroke-opacity=".9" stroke-width="7.2" stroke-dasharray="2.4 21.7"/>
<line x1="747.7" y1="2150.4" x2="2848.4" y2="2150.4" stroke="#0a0a0a" stroke-opacity=".9" stroke-width="7.2" stroke-dasharray="2.4 21.7"/>
<line x1="747.7" y1="2182.5" x2="2848.4" y2="2182.5" stroke="#0a0a0a" stroke-opacity=".9" stroke-width="7.2" stroke-dasharray="2.4 21.7"/>
<line x1="2873.2" y1="2150.4" x2="4008.3" y2="2150.4" stroke="#0a0a0a" stroke-opacity=".9" stroke-width="7.2" stroke-dasharray="2.4 21.7"/>
<line x1="2873.2" y1="2182.5" x2="4008.3" y2="2182.5" stroke="#0a0a0a" stroke-opacity=".9" stroke-width="7.2" stroke-dasharray="2.4 21.7"/>
<line x1="4056.5" y1="2150.4" x2="4748" y2="2150.4" stroke="#0a0a0a" stroke-opacity=".9" stroke-width="7.2" stroke-dasharray="2.4 21.7"/>
<line x1="4056.5" y1="2182.5" x2="4748" y2="2182.5" stroke="#0a0a0a" stroke-opacity=".9" stroke-width="7.2" stroke-dasharray="2.4 21.7"/>
<rect x="4757.2" y="0" width="277.8" height="2301" fill="#2f2f2d"/>
<rect x="4757.2" y="0" width="268.4" height="39.5" fill="#41eafc"/>
<circle cx="4781.7" cy="17" r="15.6" fill="none" stroke="rgba(0,0,0,.62)" stroke-width="2.5"/>
<path d="M4777.8 8.6v16.8l12.2 -8.4z" fill="rgba(0,0,0,.62)"/>
<text class="tb" x="4817.6" y="24.1" font-size="25" fill="rgba(0,0,0,.78)" textLength="52.2">Kick</text>
<rect x="4757.2" y="44.6" width="268.4" height="44.4" fill="#fc5ddd"/>
<circle cx="4781.7" cy="66.6" r="15.6" fill="none" stroke="rgba(0,0,0,.62)" stroke-width="2.5"/>
<path d="M4777.8 58.2v16.8l12.2 -8.4z" fill="rgba(0,0,0,.62)"/>
<text class="tb" x="4817.6" y="73.7" font-size="25" fill="rgba(0,0,0,.78)" textLength="154.6">MB Bass Rec</text>
<rect x="4757.2" y="94.1" width="268.4" height="44.2" fill="#c5f823"/>
<circle cx="4781.7" cy="116.1" r="15.6" fill="none" stroke="rgba(0,0,0,.62)" stroke-width="2.5"/>
<path d="M4777.8 107.7v16.8l12.2 -8.4z" fill="rgba(0,0,0,.62)"/>
<text class="tb" x="4817.6" y="123.2" font-size="25" fill="rgba(0,0,0,.78)" textLength="66.9">Bleep</text>
<rect x="4757.2" y="143.5" width="268.4" height="44" fill="#ea8bbe"/>
<circle cx="4781.7" cy="165.5" r="15.6" fill="none" stroke="rgba(0,0,0,.62)" stroke-width="2.5"/>
<path d="M4775 160.1h13.4M4775 165.5h13.4M4775 170.9h13.4" stroke="rgba(0,0,0,.62)" stroke-width="2.6" fill="none"/>
<text class="tb" x="4814.9" y="172.6" font-size="25" fill="rgba(0,0,0,.78)" textLength="135.6">DFAM Perc</text>
<rect x="4757.2" y="193" width="268.4" height="44.4" fill="#fc5e5e"/>
<circle cx="4781.7" cy="215" r="15.6" fill="none" stroke="rgba(0,0,0,.62)" stroke-width="2.5"/>
<path d="M4777.8 206.6v16.8l12.2 -8.4z" fill="rgba(0,0,0,.62)"/>
<text class="tb" x="4817.6" y="222.1" font-size="25" fill="rgba(0,0,0,.78)" textLength="148.9">Peak Rec 01</text>
<rect x="4757.2" y="242.3" width="268.4" height="44.3" fill="#fc5ddd"/>
<circle cx="4781.7" cy="264.3" r="15.6" fill="none" stroke="rgba(0,0,0,.62)" stroke-width="2.5"/>
<path d="M4777.8 255.9v16.8l12.2 -8.4z" fill="rgba(0,0,0,.62)"/>
<text class="tb" x="4817.6" y="271.4" font-size="25" fill="rgba(0,0,0,.78)" textLength="99.8">11 ABL3</text>
<rect x="4757.2" y="291.7" width="268.4" height="278.8" fill="#f9f7a9"/>
<circle cx="4781.7" cy="313.7" r="15.6" fill="none" stroke="rgba(0,0,0,.62)" stroke-width="2.5"/>
<path d="M4773.1 308.5h13.4M4778.1 313.7h12.8M4778.1 318.9h12.8" stroke="rgba(0,0,0,.62)" stroke-width="2.3" fill="none"/>
<text class="tb" x="4814.7" y="320.8" font-size="25" fill="rgba(0,0,0,.78)" textLength="134.2">Melo Stuff</text>
<rect x="4768.3" y="471.6" width="258.3" height="49.2" fill="#2f2f2d"/>
<rect x="4770.2" y="476.7" width="255.4" height="44.1" fill="#8da9ec"/>
<circle cx="4794.7" cy="498.7" r="15.6" fill="none" stroke="rgba(0,0,0,.62)" stroke-width="2.5"/>
<path d="M4790.8 490.3v16.8l12.2 -8.4z" fill="rgba(0,0,0,.62)"/>
<text class="tb" x="4827.8" y="505.8" font-size="25" fill="rgba(0,0,0,.78)" textLength="99.8">13 ABL3</text>
<rect x="4768.3" y="520.9" width="258.3" height="49.6" fill="#2f2f2d"/>
<rect x="4770.2" y="526" width="255.4" height="44.5" fill="#f9f7a9"/>
<circle cx="4794.7" cy="548" r="15.6" fill="none" stroke="rgba(0,0,0,.62)" stroke-width="2.5"/>
<path d="M4790.8 539.6v16.8l12.2 -8.4z" fill="rgba(0,0,0,.62)"/>
<text class="tb" x="4827.8" y="555.1" font-size="25" fill="rgba(0,0,0,.78)" textLength="161.5">MB Melo REC</text>
<rect x="4757.2" y="575.6" width="268.4" height="561.9" fill="#f9f7a9"/>
<circle cx="4781.7" cy="597.6" r="15.6" fill="none" stroke="rgba(0,0,0,.62)" stroke-width="2.5"/>
<path d="M4773.1 592.4h13.4M4778.1 597.6h12.8M4778.1 602.8h12.8" stroke="rgba(0,0,0,.62)" stroke-width="2.3" fill="none"/>
<text class="tb" x="4814.7" y="604.7" font-size="25" fill="rgba(0,0,0,.78)" textLength="127.3">PadsStuff</text>
<rect x="4768.3" y="755.1" width="258.3" height="49.4" fill="#2f2f2d"/>
<rect x="4770.2" y="760.2" width="255.4" height="44.3" fill="#f9f7a9"/>
<circle cx="4794.7" cy="782.2" r="15.6" fill="none" stroke="rgba(0,0,0,.62)" stroke-width="2.5"/>
<path d="M4790.8 773.8v16.8l12.2 -8.4z" fill="rgba(0,0,0,.62)"/>
<text class="tb" x="4827.3" y="789.3" font-size="25" fill="rgba(0,0,0,.78)" textLength="108.8">SEM REC</text>
<rect x="4768.3" y="804.7" width="258.3" height="332.8" fill="#2f2f2d"/>
<rect x="4770.2" y="809.8" width="255.4" height="327.7" fill="#afb8bb"/>
<circle cx="4794.7" cy="831.8" r="15.6" fill="none" stroke="rgba(0,0,0,.62)" stroke-width="2.5"/>
<path d="M4786.1 826.6h13.4M4791.1 831.8h12.8M4791.1 837h12.8" stroke="rgba(0,0,0,.62)" stroke-width="2.3" fill="none"/>
<text class="tb" x="4827.8" y="838.9" font-size="25" fill="rgba(0,0,0,.66)" textLength="59.3">Pads</text>
<rect x="4780.9" y="989.8" width="245.7" height="49.2" fill="#2f2f2d"/>
<rect x="4782.8" y="994.9" width="242.8" height="44.1" fill="#b69674"/>
<circle cx="4807.3" cy="1016.9" r="15.6" fill="none" stroke="rgba(0,0,0,.62)" stroke-width="2.5"/>
<path d="M4803.4 1008.5v16.8l12.2 -8.4z" fill="rgba(0,0,0,.62)"/>
<text class="tb" x="4840.5" y="1024" font-size="25" fill="rgba(0,0,0,.78)" textLength="165.8">Sys8PAD REC</text>
<rect x="4780.9" y="1039" width="245.7" height="49.3" fill="#2f2f2d"/>
<rect x="4782.8" y="1044.1" width="242.8" height="44.2" fill="#fdb4c1"/>
<circle cx="4807.3" cy="1066.1" r="15.6" fill="none" stroke="rgba(0,0,0,.62)" stroke-width="2.5"/>
<path d="M4803.4 1057.7v16.8l12.2 -8.4z" fill="rgba(0,0,0,.62)"/>
<text class="tb" x="4840.5" y="1073.2" font-size="25" fill="rgba(0,0,0,.78)" textLength="149.8">19 Omnisph</text>
<rect x="4780.9" y="1088.4" width="245.7" height="49.1" fill="#2f2f2d"/>
<rect x="4782.8" y="1093.5" width="242.8" height="44" fill="#fdb4c1"/>
<circle cx="4807.3" cy="1115.5" r="15.6" fill="none" stroke="rgba(0,0,0,.62)" stroke-width="2.5"/>
<path d="M4803.4 1107.1v16.8l12.2 -8.4z" fill="rgba(0,0,0,.62)"/>
<text class="tb" x="4840.5" y="1122.6" font-size="25" fill="rgba(0,0,0,.78)" textLength="150.3">20 Omnisph</text>
<rect x="4757.2" y="1142.7" width="268.4" height="44.3" fill="#b69674"/>
<circle cx="4781.7" cy="1164.7" r="15.6" fill="none" stroke="rgba(0,0,0,.62)" stroke-width="2.5"/>
<path d="M4777.8 1156.3v16.8l12.2 -8.4z" fill="rgba(0,0,0,.62)"/>
<text class="tb" x="4817.3" y="1171.8" font-size="25" fill="rgba(0,0,0,.78)" textLength="158.6">VoyBass REC</text>
<rect x="4757.2" y="1191.8" width="268.4" height="750" fill="#d6ae50"/>
<circle cx="4781.7" cy="1213.8" r="15.6" fill="none" stroke="rgba(0,0,0,.62)" stroke-width="2.5"/>
<path d="M4773.1 1208.6h13.4M4778.1 1213.8h12.8M4778.1 1219h12.8" stroke="rgba(0,0,0,.62)" stroke-width="2.3" fill="none"/>
<text class="tb" x="4814.3" y="1220.9" font-size="25" fill="rgba(0,0,0,.78)" textLength="115.7">Overhats</text>
<rect x="4768.3" y="1416.2" width="258.3" height="49.4" fill="#2f2f2d"/>
<rect x="4770.2" y="1421.3" width="255.4" height="44.3" fill="#dcb9e0"/>
<circle cx="4794.7" cy="1443.3" r="15.6" fill="none" stroke="rgba(0,0,0,.62)" stroke-width="2.5"/>
<path d="M4790.8 1434.9v16.8l12.2 -8.4z" fill="rgba(0,0,0,.62)"/>
<text class="tb" x="4827.8" y="1450.4" font-size="25" fill="rgba(0,0,0,.78)" textLength="79.1">FastHi</text>
<rect x="4768.3" y="1465.7" width="258.3" height="49.3" fill="#2f2f2d"/>
<rect x="4770.2" y="1470.8" width="255.4" height="44.2" fill="#d6ae50"/>
<circle cx="4794.7" cy="1492.8" r="15.6" fill="none" stroke="rgba(0,0,0,.62)" stroke-width="2.5"/>
<path d="M4790.8 1484.4v16.8l12.2 -8.4z" fill="rgba(0,0,0,.62)"/>
<text class="tb" x="4827.3" y="1499.9" font-size="25" fill="rgba(0,0,0,.78)" textLength="163.8">909 CHH REC</text>
<rect x="4768.3" y="1515" width="258.3" height="49.6" fill="#2f2f2d"/>
<rect x="4770.2" y="1520.1" width="255.4" height="44.5" fill="#1783c6"/>
<circle cx="4794.7" cy="1542.1" r="15.6" fill="none" stroke="rgba(0,0,0,.62)" stroke-width="2.5"/>
<path d="M4790.8 1533.7v16.8l12.2 -8.4z" fill="rgba(0,0,0,.62)"/>
<text class="tb" x="4827.8" y="1549.2" font-size="25" fill="rgba(0,0,0,.78)" textLength="43.2">Bell</text>
<rect x="4768.3" y="1564.7" width="258.3" height="49.2" fill="#2f2f2d"/>
<rect x="4770.2" y="1569.8" width="255.4" height="44.1" fill="#8da9ec"/>
<circle cx="4794.7" cy="1591.8" r="15.6" fill="none" stroke="rgba(0,0,0,.62)" stroke-width="2.5"/>
<path d="M4790.8 1583.4v16.8l12.2 -8.4z" fill="rgba(0,0,0,.62)"/>
<text class="tb" x="4827.3" y="1598.9" font-size="25" fill="rgba(0,0,0,.78)" textLength="88.1">Shaker</text>
<rect x="4768.3" y="1614" width="258.3" height="49.4" fill="#2f2f2d"/>
<rect x="4770.2" y="1619.1" width="255.4" height="44.3" fill="#4bfcb8"/>
<circle cx="4794.7" cy="1641.1" r="15.6" fill="none" stroke="rgba(0,0,0,.62)" stroke-width="2.5"/>
<path d="M4790.8 1632.7v16.8l12.2 -8.4z" fill="rgba(0,0,0,.62)"/>
<text class="tb" x="4827.3" y="1648.2" font-size="25" fill="rgba(0,0,0,.78)" textLength="132.7">OffSchelle</text>
<rect x="4768.3" y="1663.5" width="258.3" height="49.1" fill="#2f2f2d"/>
<rect x="4770.2" y="1668.6" width="255.4" height="44" fill="#fdb4c1"/>
<circle cx="4794.7" cy="1690.6" r="15.6" fill="none" stroke="rgba(0,0,0,.62)" stroke-width="2.5"/>
<path d="M4790.8 1682.2v16.8l12.2 -8.4z" fill="rgba(0,0,0,.62)"/>
<text class="tb" x="4827.3" y="1697.7" font-size="25" fill="rgba(0,0,0,.78)" textLength="85.5">shaker</text>
<rect x="4768.3" y="1712.8" width="258.3" height="229" fill="#2f2f2d"/>
<rect x="4770.2" y="1717.9" width="255.4" height="223.9" fill="#fdb4c1"/>
<circle cx="4794.7" cy="1739.9" r="15.6" fill="none" stroke="rgba(0,0,0,.62)" stroke-width="2.5"/>
<path d="M4786.2 1736.3h17l-8.5 12.4z" fill="rgba(0,0,0,.62)"/>
<text class="tb" x="4827.3" y="1747" font-size="25" fill="rgba(0,0,0,.78)" textLength="100.2">shaker2</text>
<rect x="4757.2" y="1947" width="268.4" height="44.4" fill="#fc5ddd"/>
<circle cx="4781.7" cy="1969" r="15.6" fill="none" stroke="rgba(0,0,0,.62)" stroke-width="2.5"/>
<path d="M4777.8 1960.6v16.8l12.2 -8.4z" fill="rgba(0,0,0,.62)"/>
<text class="tb" x="4817.3" y="1976.1" font-size="25" fill="rgba(0,0,0,.78)" textLength="156.5">30 HiLoop01</text>
<rect x="4757.2" y="1996.5" width="268.4" height="44.3" fill="#a2fc86"/>
<circle cx="4781.7" cy="2018.5" r="15.6" fill="none" stroke="rgba(0,0,0,.62)" stroke-width="2.5"/>
<path d="M4777.8 2010.1v16.8l12.2 -8.4z" fill="rgba(0,0,0,.62)"/>
<text class="tb" x="4817.3" y="2025.6" font-size="25" fill="rgba(0,0,0,.78)" textLength="117.5">HiLoop02</text>
<rect x="4757.2" y="2046" width="268.4" height="44.3" fill="#fdb4c1"/>
<circle cx="4781.7" cy="2068" r="15.6" fill="none" stroke="rgba(0,0,0,.62)" stroke-width="2.5"/>
<path d="M4777.8 2059.6v16.8l12.2 -8.4z" fill="rgba(0,0,0,.62)"/>
<text class="tb" x="4817.3" y="2075.1" font-size="25" fill="rgba(0,0,0,.78)" textLength="162.9">909 Ride REC</text>
<rect x="4757.2" y="2095.3" width="268.4" height="44.3" fill="#fdb4c1"/>
<circle cx="4781.7" cy="2117.3" r="15.6" fill="none" stroke="rgba(0,0,0,.62)" stroke-width="2.5"/>
<path d="M4777.8 2108.9v16.8l12.2 -8.4z" fill="rgba(0,0,0,.62)"/>
<text class="tb" x="4817.3" y="2124.4" font-size="25" fill="rgba(0,0,0,.78)" textLength="48.9">ride</text>
<rect x="4757.2" y="2144.6" width="268.4" height="44.2" fill="#e6a5ec"/>
<circle cx="4781.7" cy="2166.6" r="15.6" fill="none" stroke="rgba(0,0,0,.62)" stroke-width="2.5"/>
<path d="M4777.8 2158.2v16.8l12.2 -8.4z" fill="rgba(0,0,0,.62)"/>
<text class="tb" x="4817.3" y="2173.7" font-size="25" fill="rgba(0,0,0,.78)" textLength="177.6">34 Atmo Wien</text>
<rect x="4757.2" y="2194.2" width="268.4" height="44.5" fill="#41eafc"/>
<circle cx="4781.7" cy="2216.2" r="15.6" fill="none" stroke="rgba(0,0,0,.62)" stroke-width="2.5"/>
<path d="M4775 2210.8h13.4M4775 2216.2h13.4M4775 2221.6h13.4" stroke="rgba(0,0,0,.62)" stroke-width="2.6" fill="none"/>
<text class="tb" x="4814.9" y="2223.3" font-size="25" fill="rgba(0,0,0,.78)" textLength="30.2">FX</text>
<rect x="5030" y="0" width="5" height="39.5" fill="#555452"/>
<rect x="5030" y="44.6" width="5" height="44.4" fill="#555452"/>
<rect x="5030" y="94.1" width="5" height="44.2" fill="#555452"/>
<rect x="5030" y="143.5" width="5" height="44" fill="#555452"/>
<rect x="5030" y="193" width="5" height="44.4" fill="#555452"/>
<rect x="5030" y="242.3" width="5" height="44.3" fill="#555452"/>
<rect x="5030" y="291.7" width="5" height="278.8" fill="#555452"/>
<rect x="5030" y="575.6" width="5" height="561.9" fill="#555452"/>
<rect x="5030" y="1142.7" width="5" height="44.3" fill="#555452"/>
<rect x="5030" y="1191.8" width="5" height="750" fill="#555452"/>
<rect x="5030" y="1947" width="5" height="44.4" fill="#555452"/>
<rect x="5030" y="1996.5" width="5" height="44.3" fill="#555452"/>
<rect x="5030" y="2046" width="5" height="44.3" fill="#555452"/>
<rect x="5030" y="2095.3" width="5" height="44.3" fill="#555452"/>
<rect x="5030" y="2144.6" width="5" height="44.2" fill="#555452"/>
<rect x="5030" y="2194.2" width="5" height="44.5" fill="#555452"/>
<rect x="4757.2" y="2243.4" width="268.4" height="5.7" fill="#e4d0a8"/>
<rect x="5030" y="2243.4" width="5" height="5.7" fill="#555452"/>
<rect x="4757.2" y="2256.7" width="268.4" height="44.3" fill="#41eafc"/>
<rect x="5030" y="2256.7" width="5" height="44.3" fill="#555452"/>
<circle cx="4781.7" cy="2278.7" r="15.6" fill="none" stroke="rgba(0,0,0,.62)" stroke-width="2.5"/>
<path d="M4777.8 2270.3v16.8l12.2 -8.4z" fill="rgba(0,0,0,.62)"/>
<text class="tb" x="4822.8" y="2285.8" font-size="25" fill="rgba(0,0,0,.78)" textLength="89">Master</text>
<text class="tb" x="4670.8" y="2292.2" font-size="42.5" fill="#323130" textLength="70" lengthAdjust="spacingAndGlyphs">2/1</text>
<rect x="0" y="2301" width="5035" height="44" fill="#181715"/>
<text class="tr" x="-34" y="2330.2" font-size="24.6" fill="#deded9" textLength="52.5" stroke="#deded9" stroke-width=".3">0:00</text>
<text class="tr" x="225.4" y="2330.2" font-size="24.6" fill="#deded9" textLength="52.5" stroke="#deded9" stroke-width=".3">0:20</text>
<text class="tr" x="484.8" y="2330.2" font-size="24.6" fill="#deded9" textLength="52.5" stroke="#deded9" stroke-width=".3">0:40</text>
<text class="tr" x="744.2" y="2330.2" font-size="24.6" fill="#deded9" textLength="52.5" stroke="#deded9" stroke-width=".3">1:00</text>
<text class="tr" x="1003.7" y="2330.2" font-size="24.6" fill="#deded9" textLength="52.5" stroke="#deded9" stroke-width=".3">1:20</text>
<text class="tr" x="1263.1" y="2330.2" font-size="24.6" fill="#deded9" textLength="52.5" stroke="#deded9" stroke-width=".3">1:40</text>
<text class="tr" x="1522.5" y="2330.2" font-size="24.6" fill="#deded9" textLength="52.5" stroke="#deded9" stroke-width=".3">2:00</text>
<text class="tr" x="1781.9" y="2330.2" font-size="24.6" fill="#deded9" textLength="52.5" stroke="#deded9" stroke-width=".3">2:20</text>
<text class="tr" x="2041.3" y="2330.2" font-size="24.6" fill="#deded9" textLength="52.5" stroke="#deded9" stroke-width=".3">2:40</text>
<text class="tr" x="2300.8" y="2330.2" font-size="24.6" fill="#deded9" textLength="52.5" stroke="#deded9" stroke-width=".3">3:00</text>
<text class="tr" x="2560.2" y="2330.2" font-size="24.6" fill="#deded9" textLength="52.5" stroke="#deded9" stroke-width=".3">3:20</text>
<text class="tr" x="2819.6" y="2330.2" font-size="24.6" fill="#deded9" textLength="52.5" stroke="#deded9" stroke-width=".3">3:40</text>
<text class="tr" x="3079" y="2330.2" font-size="24.6" fill="#deded9" textLength="52.5" stroke="#deded9" stroke-width=".3">4:00</text>
<text class="tr" x="3338.4" y="2330.2" font-size="24.6" fill="#deded9" textLength="52.5" stroke="#deded9" stroke-width=".3">4:20</text>
<text class="tr" x="3597.9" y="2330.2" font-size="24.6" fill="#deded9" textLength="52.5" stroke="#deded9" stroke-width=".3">4:40</text>
<text class="tr" x="3857.3" y="2330.2" font-size="24.6" fill="#deded9" textLength="52.5" stroke="#deded9" stroke-width=".3">5:00</text>
<text class="tr" x="4116.7" y="2330.2" font-size="24.6" fill="#deded9" textLength="52.5" stroke="#deded9" stroke-width=".3">5:20</text>
<text class="tr" x="4376.1" y="2330.2" font-size="24.6" fill="#deded9" textLength="52.5" stroke="#deded9" stroke-width=".3">5:40</text>
<text class="tr" x="4635.5" y="2330.2" font-size="24.6" fill="#deded9" textLength="52.5" stroke="#deded9" stroke-width=".3">6:00</text>
<path d="M23.2 2301v5.2M88.1 2301v5.2M152.9 2301v5.2M282.7 2301v5.2M347.5 2301v5.2M412.4 2301v5.2M542.1 2301v5.2M606.9 2301v5.2M671.8 2301v5.2M801.5 2301v5.2M866.4 2301v5.2M931.2 2301v5.2M1060.9 2301v5.2M1125.8 2301v5.2M1190.6 2301v5.2M1320.3 2301v5.2M1385.2 2301v5.2M1450 2301v5.2M1579.8 2301v5.2M1644.6 2301v5.2M1709.5 2301v5.2M1839.2 2301v5.2M1904 2301v5.2M1968.9 2301v5.2M2098.6 2301v5.2M2163.4 2301v5.2M2228.3 2301v5.2M2358 2301v5.2M2422.9 2301v5.2M2487.7 2301v5.2M2617.4 2301v5.2M2682.3 2301v5.2M2747.1 2301v5.2M2876.9 2301v5.2M2941.7 2301v5.2M3006.6 2301v5.2M3136.3 2301v5.2M3201.1 2301v5.2M3266 2301v5.2M3395.7 2301v5.2M3460.6 2301v5.2M3525.4 2301v5.2M3655.1 2301v5.2M3720 2301v5.2M3784.8 2301v5.2M3914.5 2301v5.2M3979.4 2301v5.2M4044.2 2301v5.2M4174 2301v5.2M4238.8 2301v5.2M4303.7 2301v5.2M4433.4 2301v5.2M4498.2 2301v5.2M4563.1 2301v5.2M4692.8 2301v5.2" stroke="#b9b9b5" stroke-width="2.2" fill="none"/>
<path d="M-41.6 2301v20h4.4M217.8 2301v20h4.4M477.2 2301v20h4.4M736.6 2301v20h4.4M996.1 2301v20h4.4M1255.5 2301v20h4.4M1514.9 2301v20h4.4M1774.3 2301v20h4.4M2033.7 2301v20h4.4M2293.2 2301v20h4.4M2552.6 2301v20h4.4M2812 2301v20h4.4M3071.4 2301v20h4.4M3330.8 2301v20h4.4M3590.3 2301v20h4.4M3849.7 2301v20h4.4M4109.1 2301v20h4.4M4368.5 2301v20h4.4M4627.9 2301v20h4.4" stroke="#b9b9b5" stroke-width="2" fill="none"/>
<rect x="0" y="2345" width="5035" height="21.2" fill="#464742"/>
<rect x="0" y="2366.2" width="5035" height="594.8" fill="#2f2f2d"/>
<clipPath id="devclip"><rect x="0" y="2366" width="5035" height="520"/></clipPath><g clip-path="url(#devclip)">
<rect x="-74.9" y="2376.6" width="390.7" height="488.9" rx="10" fill="#555452"/>
<path d="M-74.9 2421.3v-34.7a10 10 0 0 1 10 -10h370.7a10 10 0 0 1 10 10v34.7z" fill="#afb8bb"/>
<circle cx="-50.1" cy="2398.6" r="15.1" fill="#fcc350" stroke="#2b2b29" stroke-width="2.8"/>
<circle cx="-8.7" cy="2398.6" r="15.2" fill="#777672" stroke="#2b2b29" stroke-width="2.9"/>
<path d="M-18.1 2392.1h18.8l-9.4 16.8z" fill="#f5f5f3"/>
<circle cx="33.3" cy="2398.6" r="15.2" fill="#777672" stroke="#2b2b29" stroke-width="2.9"/>
<g transform="translate(33 2398.9) rotate(45) scale(.9)">
<path d="M0 -3V11" stroke="#f5f5f3" stroke-width="4.6" stroke-linecap="round"/>
<circle cx="0" cy="-6.4" r="6" fill="#f5f5f3"/>
<rect x="-2.3" y="-13.5" width="4.6" height="7.4" fill="#777672"/>
</g>
<text class="tb" x="61.9" y="2408.4" font-size="26.4" fill="#121212" textLength="148.2">UAD Telet...</text>
<circle cx="290.9" cy="2398.6" r="15.2" fill="#777672" stroke="#2b2b29" stroke-width="2.9"/>
<g transform="translate(290.9 2398.6) scale(.95)" fill="none" stroke="#f5f5f3" stroke-width="2.5">
<path d="M-7.6 1.2A7.6 7.6 0 0 1 1.8 -7.4"/><path d="M7.6 -1.2A7.6 7.6 0 0 1 -1.8 7.4"/>
<path d="M-11.6 -1.6h8l-4 5.6z" fill="#f5f5f3" stroke="none"/><path d="M11.6 1.6h-8l4 -5.6z" fill="#f5f5f3" stroke="none"/>
</g>
<g transform="translate(249.1 2398.6)" stroke="#6b5cf5" stroke-linecap="round" fill="none">
<path d="M-5.4 1L-7.6 -9.4M-0.6 0L-1.2 -13M4 0.6L5.6 -11.4M8 3.4L11 -6" stroke-width="3.6"/>
<path d="M-6.6 6.4L-12 -0.6" stroke-width="3.8"/>
<path d="M-6.6 1h14.4v5.4c0 5 -3 8.4 -7.4 8.4s-7 -3.4 -7 -8.4z" fill="#6b5cf5" stroke-width="1.4"/>
</g>
<circle cx="-45" cy="2450.7" r="15.2" fill="#6f6e6b" stroke="#2b2b29" stroke-width="2.9"/>
<g transform="translate(-44.4 2451.3) scale(1.12)">
<path d="M-8.6 -6.6h6.2l1.6 2.2h6.6v2.4h-10l-3.2 8.4h-1.2z" fill="#b9b8b4"/>
<path d="M-4.2 -1h13.6l-3.2 8h-13.4z" fill="#e9e9e6"/>
</g>
<circle cx="-0.7" cy="2450.7" r="15.2" fill="#6f6e6b" stroke="#2b2b29" stroke-width="2.9"/>
<g transform="translate(-0.7 2451) scale(1.1)">
<path d="M-8.4 -8.6h13l3.8 3.6v13.2h-16.8z" fill="#f5f5f3"/>
<rect x="-3.6" y="-6.2" width="8" height="4.4" fill="#6a6966"/>
</g>
<rect x="27.2" y="2434" width="275.1" height="33" fill="#272725"/>
<rect x="29.7" y="2436.5" width="270.1" height="28" fill="#3d3c3a"/>
<text class="tr" x="32.4" y="2459.8" font-size="25.2" fill="#f5f5f3" stroke="#f5f5f3" stroke-width=".75">Default</text>
<path d="M279.8 2444.9h17l-8.5 11.6z" fill="#f5f5f3"/>
<rect x="-61.7" y="2480" width="364.2" height="325" rx="9" fill="#232220"/>
<circle cx="-45" cy="2789" r="15.2" fill="none" stroke="#fcc350" stroke-width="3.6"/>
<rect x="-61.9" y="2819.2" width="177.2" height="33.1" fill="#272725"/>
<rect x="-59.4" y="2821.7" width="172.2" height="28.1" fill="#3d3c3a"/>
<text class="tr" x="-56.7" y="2845.1" font-size="25.2" fill="#f5f5f3" stroke="#f5f5f3" stroke-width=".75">none</text>
<path d="M92.8 2830.1h17l-8.5 11.6z" fill="#f5f5f3"/>
<rect x="125.7" y="2819.2" width="177" height="33.1" fill="#272725"/>
<rect x="128.2" y="2821.7" width="172" height="28.1" fill="#3d3c3a"/>
<text class="tr" x="130.9" y="2845.1" font-size="25.2" fill="#f5f5f3" stroke="#f5f5f3" stroke-width=".75">none</text>
<path d="M280.2 2830.1h17l-8.5 11.6z" fill="#f5f5f3"/>
<rect x="323.2" y="2568.6" width="5.6" height="104" fill="#292927"/>
<rect x="323.2" y="2579.2" width="5.6" height="2.9" fill="#5a5957"/>
<rect x="331.2" y="2568.6" width="5.6" height="104" fill="#292927"/>
<rect x="331.2" y="2579.2" width="5.6" height="2.9" fill="#5a5957"/>
<rect x="344.2" y="2376.6" width="390.7" height="488.9" rx="10" fill="#555452"/>
<path d="M344.2 2421.3v-34.7a10 10 0 0 1 10 -10h370.7a10 10 0 0 1 10 10v34.7z" fill="#777672"/>
<circle cx="369" cy="2398.6" r="15.1" fill="#fcc350" stroke="#2b2b29" stroke-width="2.8"/>
<circle cx="410.4" cy="2398.6" r="15.2" fill="#777672" stroke="#2b2b29" stroke-width="2.9"/>
<path d="M401 2392.1h18.8l-9.4 16.8z" fill="#f5f5f3"/>
<circle cx="452.4" cy="2398.6" r="15.2" fill="#777672" stroke="#2b2b29" stroke-width="2.9"/>
<g transform="translate(452.1 2398.9) rotate(45) scale(.9)">
<path d="M0 -3V11" stroke="#f5f5f3" stroke-width="4.6" stroke-linecap="round"/>
<circle cx="0" cy="-6.4" r="6" fill="#f5f5f3"/>
<rect x="-2.3" y="-13.5" width="4.6" height="7.4" fill="#777672"/>
</g>
<text class="tb" x="481" y="2408.4" font-size="26.4" fill="#f5f5f3" textLength="168.4">Saturation ...</text>
<circle cx="710" cy="2398.6" r="15.2" fill="#777672" stroke="#2b2b29" stroke-width="2.9"/>
<g transform="translate(710 2398.6) scale(.95)" fill="none" stroke="#f5f5f3" stroke-width="2.5">
<path d="M-7.6 1.2A7.6 7.6 0 0 1 1.8 -7.4"/><path d="M7.6 -1.2A7.6 7.6 0 0 1 -1.8 7.4"/>
<path d="M-11.6 -1.6h8l-4 5.6z" fill="#f5f5f3" stroke="none"/><path d="M11.6 1.6h-8l4 -5.6z" fill="#f5f5f3" stroke="none"/>
</g>
<circle cx="374.1" cy="2450.7" r="15.2" fill="#6f6e6b" stroke="#2b2b29" stroke-width="2.9"/>
<g transform="translate(374.7 2451.3) scale(1.12)">
<path d="M-8.6 -6.6h6.2l1.6 2.2h6.6v2.4h-10l-3.2 8.4h-1.2z" fill="#b9b8b4"/>
<path d="M-4.2 -1h13.6l-3.2 8h-13.4z" fill="#e9e9e6"/>
</g>
<circle cx="418.4" cy="2450.7" r="15.2" fill="#6f6e6b" stroke="#2b2b29" stroke-width="2.9"/>
<g transform="translate(418.4 2451) scale(1.1)">
<path d="M-8.4 -8.6h13l3.8 3.6v13.2h-16.8z" fill="#f5f5f3"/>
<rect x="-3.6" y="-6.2" width="8" height="4.4" fill="#6a6966"/>
</g>
<rect x="446.3" y="2434" width="275.1" height="33" fill="#272725"/>
<rect x="448.8" y="2436.5" width="270.1" height="28" fill="#555452"/>
<text class="tr" x="451.5" y="2459.8" font-size="25.2" fill="#f5f5f3" stroke="#f5f5f3" stroke-width=".75">Default</text>
<rect x="357.4" y="2480" width="364.2" height="325" rx="9" fill="#232220"/>
<circle cx="374.1" cy="2789" r="15.2" fill="none" stroke="#fcc350" stroke-width="3.6"/>
<rect x="357.2" y="2819.2" width="177.2" height="33.1" fill="#272725"/>
<rect x="359.7" y="2821.7" width="172.2" height="28.1" fill="#3d3c3a"/>
<text class="tr" x="362.4" y="2845.1" font-size="25.2" fill="#f5f5f3" stroke="#f5f5f3" stroke-width=".75">none</text>
<path d="M511.9 2830.1h17l-8.5 11.6z" fill="#f5f5f3"/>
<rect x="544.8" y="2819.2" width="177" height="33.1" fill="#272725"/>
<rect x="547.3" y="2821.7" width="172" height="28.1" fill="#3d3c3a"/>
<text class="tr" x="550" y="2845.1" font-size="25.2" fill="#f5f5f3" stroke="#f5f5f3" stroke-width=".75">none</text>
<path d="M699.3 2830.1h17l-8.5 11.6z" fill="#f5f5f3"/>
<rect x="742.3" y="2568.6" width="5.6" height="104" fill="#292927"/>
<rect x="742.3" y="2579.2" width="5.6" height="2.9" fill="#5a5957"/>
<rect x="750.3" y="2568.6" width="5.6" height="104" fill="#292927"/>
<rect x="750.3" y="2579.2" width="5.6" height="2.9" fill="#5a5957"/>
<rect x="763.5" y="2376.6" width="390.7" height="488.9" rx="10" fill="#555452"/>
<path d="M763.5 2421.3v-34.7a10 10 0 0 1 10 -10h370.7a10 10 0 0 1 10 10v34.7z" fill="#777672"/>
<circle cx="788.3" cy="2398.6" r="15.1" fill="#fcc350" stroke="#2b2b29" stroke-width="2.8"/>
<circle cx="829.7" cy="2398.6" r="15.2" fill="#777672" stroke="#2b2b29" stroke-width="2.9"/>
<path d="M820.3 2392.1h18.8l-9.4 16.8z" fill="#f5f5f3"/>
<circle cx="871.7" cy="2398.6" r="15.2" fill="#777672" stroke="#2b2b29" stroke-width="2.9"/>
<g transform="translate(871.4 2398.9) rotate(45) scale(.9)">
<path d="M0 -3V11" stroke="#f5f5f3" stroke-width="4.6" stroke-linecap="round"/>
<circle cx="0" cy="-6.4" r="6" fill="#f5f5f3"/>
<rect x="-2.3" y="-13.5" width="4.6" height="7.4" fill="#777672"/>
</g>
<text class="tb" x="900.3" y="2408.4" font-size="26.4" fill="#f5f5f3" textLength="177">FabFilter Vo...</text>
<circle cx="1129.3" cy="2398.6" r="15.2" fill="#777672" stroke="#2b2b29" stroke-width="2.9"/>
<g transform="translate(1129.3 2398.6) scale(.95)" fill="none" stroke="#f5f5f3" stroke-width="2.5">
<path d="M-7.6 1.2A7.6 7.6 0 0 1 1.8 -7.4"/><path d="M7.6 -1.2A7.6 7.6 0 0 1 -1.8 7.4"/>
<path d="M-11.6 -1.6h8l-4 5.6z" fill="#f5f5f3" stroke="none"/><path d="M11.6 1.6h-8l4 -5.6z" fill="#f5f5f3" stroke="none"/>
</g>
<circle cx="793.4" cy="2450.7" r="15.2" fill="#6f6e6b" stroke="#2b2b29" stroke-width="2.9"/>
<g transform="translate(794 2451.3) scale(1.12)">
<path d="M-8.6 -6.6h6.2l1.6 2.2h6.6v2.4h-10l-3.2 8.4h-1.2z" fill="#b9b8b4"/>
<path d="M-4.2 -1h13.6l-3.2 8h-13.4z" fill="#e9e9e6"/>
</g>
<circle cx="837.7" cy="2450.7" r="15.2" fill="#6f6e6b" stroke="#2b2b29" stroke-width="2.9"/>
<g transform="translate(837.7 2451) scale(1.1)">
<path d="M-8.4 -8.6h13l3.8 3.6v13.2h-16.8z" fill="#f5f5f3"/>
<rect x="-3.6" y="-6.2" width="8" height="4.4" fill="#6a6966"/>
</g>
<rect x="865.6" y="2434" width="275.1" height="33" fill="#272725"/>
<rect x="868.1" y="2436.5" width="270.1" height="28" fill="#555452"/>
<text class="tr" x="870.8" y="2459.8" font-size="25.2" fill="#f5f5f3" stroke="#f5f5f3" stroke-width=".75">Default Setting</text>
<rect x="776.7" y="2480" width="364.2" height="325" rx="9" fill="#232220"/>
<circle cx="793.4" cy="2789" r="15.2" fill="none" stroke="#fcc350" stroke-width="3.6"/>
<rect x="776.5" y="2819.2" width="177.2" height="33.1" fill="#272725"/>
<rect x="779" y="2821.7" width="172.2" height="28.1" fill="#3d3c3a"/>
<text class="tr" x="781.7" y="2845.1" font-size="25.2" fill="#f5f5f3" stroke="#f5f5f3" stroke-width=".75">none</text>
<path d="M931.2 2830.1h17l-8.5 11.6z" fill="#f5f5f3"/>
<rect x="964.1" y="2819.2" width="177" height="33.1" fill="#272725"/>
<rect x="966.6" y="2821.7" width="172" height="28.1" fill="#3d3c3a"/>
<text class="tr" x="969.3" y="2845.1" font-size="25.2" fill="#f5f5f3" stroke="#f5f5f3" stroke-width=".75">none</text>
<path d="M1118.6 2830.1h17l-8.5 11.6z" fill="#f5f5f3"/>
<rect x="1161.6" y="2568.6" width="5.6" height="104" fill="#292927"/>
<rect x="1161.6" y="2579.2" width="5.6" height="2.9" fill="#5a5957"/>
<rect x="1169.6" y="2568.6" width="5.6" height="104" fill="#292927"/>
<rect x="1169.6" y="2579.2" width="5.6" height="2.9" fill="#5a5957"/>
<rect x="1182.3" y="2376.6" width="619" height="488.9" rx="10" fill="#555452"/>
<path d="M1182.3 2421.3v-34.7a10 10 0 0 1 10 -10h599a10 10 0 0 1 10 10v34.7z" fill="#777672"/>
<circle cx="1207.1" cy="2398.6" r="15.1" fill="#fcc350" stroke="#2b2b29" stroke-width="2.8"/>
<circle cx="1248.5" cy="2398.6" r="15.2" fill="#777672" stroke="#2b2b29" stroke-width="2.9"/>
<path d="M1239.1 2392.1h18.8l-9.4 16.8z" fill="#f5f5f3"/>
<circle cx="1290.5" cy="2398.6" r="15.2" fill="#777672" stroke="#2b2b29" stroke-width="2.9"/>
<g transform="translate(1290.2 2398.9) rotate(45) scale(.9)">
<path d="M0 -3V11" stroke="#f5f5f3" stroke-width="4.6" stroke-linecap="round"/>
<circle cx="0" cy="-6.4" r="6" fill="#f5f5f3"/>
<rect x="-2.3" y="-13.5" width="4.6" height="7.4" fill="#777672"/>
</g>
<text class="tb" x="1319.1" y="2408.4" font-size="26.4" fill="#f5f5f3" textLength="132">Presswerk</text>
<circle cx="1776.4" cy="2398.6" r="15.2" fill="#777672" stroke="#2b2b29" stroke-width="2.9"/>
<g transform="translate(1776.4 2398.6) scale(.95)" fill="none" stroke="#f5f5f3" stroke-width="2.5">
<path d="M-7.6 1.2A7.6 7.6 0 0 1 1.8 -7.4"/><path d="M7.6 -1.2A7.6 7.6 0 0 1 -1.8 7.4"/>
<path d="M-11.6 -1.6h8l-4 5.6z" fill="#f5f5f3" stroke="none"/><path d="M11.6 1.6h-8l4 -5.6z" fill="#f5f5f3" stroke="none"/>
</g>
<rect x="1196.3" y="2434" width="188.5" height="33" fill="#272725"/>
<rect x="1198.8" y="2436.5" width="183.5" height="28" fill="#777672"/>
<text class="tr" x="1290.5" y="2459.8" font-size="25.2" fill="#f5f5f3" text-anchor="middle" stroke="#f5f5f3" stroke-width=".75">Sidechain</text>
<text class="tr" x="1198.8" y="2501" font-size="25.2" fill="#f5f5f3" stroke="#f5f5f3" stroke-width=".75">Audio From</text>
<rect x="1196.3" y="2510" width="188.5" height="32.3" fill="#272725"/>
<rect x="1198.8" y="2512.5" width="183.5" height="27.3" fill="#555452"/>
<text class="tr" x="1202.1" y="2535.2" font-size="25.2" fill="#f5f5f3" stroke="#f5f5f3" stroke-width=".75">No Input</text>
<path d="M1362.4 2520.4h17l-8.5 11.6z" fill="#f5f5f3"/>
<rect x="1196.3" y="2551.4" width="188.5" height="33" fill="#272725"/>
<rect x="1198.8" y="2553.9" width="183.5" height="28" fill="#555452"/>
<text class="tr" x="1289.9" y="2624" font-size="25.2" fill="#f5f5f3" text-anchor="middle" stroke="#f5f5f3" stroke-width=".75">Gain</text>
<path d="M1273.6 2637A31.6 31.6 0 0 1 1308.4 2689.7" stroke="#3e3d3b" stroke-width="4.6" fill="none"/>
<path d="M1272.2 2689.7A31.6 31.6 0 0 1 1273.6 2637" stroke="#b5b4b0" stroke-width="4.6" fill="none"/>
<path d="M1289.8 2663L1272.5 2635.4" stroke="#3c3b39" stroke-width="5" fill="none"/>
<text class="tr" x="1289.9" y="2718" font-size="25.2" fill="#f5f5f3" text-anchor="middle" stroke="#f5f5f3" stroke-width=".75">0.00 dB</text>
<text class="tr" x="1290.9" y="2753.8" font-size="25.2" fill="#f5f5f3" text-anchor="middle" stroke="#f5f5f3" stroke-width=".75">Mix</text>
<path d="M1272.2 2819.6A31.6 31.6 0 1 1 1308.4 2819.6" stroke="#b5b4b0" stroke-width="4.6" fill="none"/>
<path d="M1290.8 2794.6L1307 2822.7" stroke="#3c3b39" stroke-width="5" fill="none"/>
<text class="tr" x="1290.9" y="2847" font-size="25.2" fill="#f5f5f3" text-anchor="middle" stroke="#f5f5f3" stroke-width=".75">100 %</text>
<path d="M1405.5 2431V2626.6M1405.5 2660.2V2855" stroke="#3a3937" stroke-width="2.2" fill="none"/>
<path d="M1400.8 2634.8v17.2l10.8 -8.6z" fill="#3a3937"/>
<circle cx="1440.6" cy="2450.7" r="15.2" fill="#6f6e6b" stroke="#2b2b29" stroke-width="2.9"/>
<g transform="translate(1441.2 2451.3) scale(1.12)">
<path d="M-8.6 -6.6h6.2l1.6 2.2h6.6v2.4h-10l-3.2 8.4h-1.2z" fill="#b9b8b4"/>
<path d="M-4.2 -1h13.6l-3.2 8h-13.4z" fill="#e9e9e6"/>
</g>
<circle cx="1484.9" cy="2450.7" r="15.2" fill="#6f6e6b" stroke="#2b2b29" stroke-width="2.9"/>
<g transform="translate(1484.9 2451) scale(1.1)">
<path d="M-8.4 -8.6h13l3.8 3.6v13.2h-16.8z" fill="#f5f5f3"/>
<rect x="-3.6" y="-6.2" width="8" height="4.4" fill="#6a6966"/>
</g>
<rect x="1512.8" y="2434" width="275.1" height="33" fill="#272725"/>
<rect x="1515.3" y="2436.5" width="270.1" height="28" fill="#555452"/>
<text class="tr" x="1518" y="2459.8" font-size="25.2" fill="#f5f5f3" stroke="#f5f5f3" stroke-width=".75">AF Pumping Pad</text>
<rect x="1423.9" y="2480" width="364.2" height="325" rx="9" fill="#232220"/>
<circle cx="1440.6" cy="2789" r="15.2" fill="none" stroke="#fcc350" stroke-width="3.6"/>
<rect x="1423.7" y="2819.2" width="177.2" height="33.1" fill="#272725"/>
<rect x="1426.2" y="2821.7" width="172.2" height="28.1" fill="#3d3c3a"/>
<text class="tr" x="1428.9" y="2845.1" font-size="25.2" fill="#f5f5f3" stroke="#f5f5f3" stroke-width=".75">none</text>
<path d="M1578.4 2830.1h17l-8.5 11.6z" fill="#f5f5f3"/>
<rect x="1611.3" y="2819.2" width="177" height="33.1" fill="#272725"/>
<rect x="1613.8" y="2821.7" width="172" height="28.1" fill="#3d3c3a"/>
<text class="tr" x="1616.5" y="2845.1" font-size="25.2" fill="#f5f5f3" stroke="#f5f5f3" stroke-width=".75">none</text>
<path d="M1765.8 2830.1h17l-8.5 11.6z" fill="#f5f5f3"/>
<rect x="1808.7" y="2568.6" width="5.6" height="104" fill="#292927"/>
<rect x="1808.7" y="2579.2" width="5.6" height="2.9" fill="#5a5957"/>
<rect x="1816.7" y="2568.6" width="5.6" height="104" fill="#292927"/>
<rect x="1816.7" y="2579.2" width="5.6" height="2.9" fill="#5a5957"/>
<rect x="1830" y="2376.6" width="390.7" height="488.9" rx="10" fill="#555452"/>
<path d="M1830 2421.3v-34.7a10 10 0 0 1 10 -10h370.7a10 10 0 0 1 10 10v34.7z" fill="#777672"/>
<circle cx="1854.8" cy="2398.6" r="15.1" fill="#fcc350" stroke="#2b2b29" stroke-width="2.8"/>
<circle cx="1896.2" cy="2398.6" r="15.2" fill="#777672" stroke="#2b2b29" stroke-width="2.9"/>
<path d="M1886.8 2392.1h18.8l-9.4 16.8z" fill="#f5f5f3"/>
<circle cx="1938.2" cy="2398.6" r="15.2" fill="#777672" stroke="#2b2b29" stroke-width="2.9"/>
<g transform="translate(1937.9 2398.9) rotate(45) scale(.9)">
<path d="M0 -3V11" stroke="#f5f5f3" stroke-width="4.6" stroke-linecap="round"/>
<circle cx="0" cy="-6.4" r="6" fill="#f5f5f3"/>
<rect x="-2.3" y="-13.5" width="4.6" height="7.4" fill="#777672"/>
</g>
<text class="tb" x="1966.8" y="2408.4" font-size="26.4" fill="#f5f5f3" textLength="132.5">M12-Filter</text>
<circle cx="2195.8" cy="2398.6" r="15.2" fill="#777672" stroke="#2b2b29" stroke-width="2.9"/>
<g transform="translate(2195.8 2398.6) scale(.95)" fill="none" stroke="#f5f5f3" stroke-width="2.5">
<path d="M-7.6 1.2A7.6 7.6 0 0 1 1.8 -7.4"/><path d="M7.6 -1.2A7.6 7.6 0 0 1 -1.8 7.4"/>
<path d="M-11.6 -1.6h8l-4 5.6z" fill="#f5f5f3" stroke="none"/><path d="M11.6 1.6h-8l4 -5.6z" fill="#f5f5f3" stroke="none"/>
</g>
<circle cx="1859.9" cy="2450.7" r="15.2" fill="#6f6e6b" stroke="#2b2b29" stroke-width="2.9"/>
<g transform="translate(1860.5 2451.3) scale(1.12)">
<path d="M-8.6 -6.6h6.2l1.6 2.2h6.6v2.4h-10l-3.2 8.4h-1.2z" fill="#b9b8b4"/>
<path d="M-4.2 -1h13.6l-3.2 8h-13.4z" fill="#e9e9e6"/>
</g>
<circle cx="1904.2" cy="2450.7" r="15.2" fill="#6f6e6b" stroke="#2b2b29" stroke-width="2.9"/>
<g transform="translate(1904.2 2451) scale(1.1)">
<path d="M-8.4 -8.6h13l3.8 3.6v13.2h-16.8z" fill="#f5f5f3"/>
<rect x="-3.6" y="-6.2" width="8" height="4.4" fill="#6a6966"/>
</g>
<rect x="1932.1" y="2434" width="275.1" height="33" fill="#272725"/>
<rect x="1934.6" y="2436.5" width="270.1" height="28" fill="#555452"/>
<text class="tr" x="1937.3" y="2459.8" font-size="25.2" fill="#f5f5f3" stroke="#f5f5f3" stroke-width=".75">none</text>
<rect x="1843.2" y="2480" width="364.2" height="325" rx="9" fill="#232220"/>
<circle cx="1859.9" cy="2789" r="15.2" fill="none" stroke="#fcc350" stroke-width="3.6"/>
<rect x="1843" y="2819.2" width="177.2" height="33.1" fill="#272725"/>
<rect x="1845.5" y="2821.7" width="172.2" height="28.1" fill="#555452"/>
<text class="tr" x="1848.2" y="2845.1" font-size="25.2" fill="#f5f5f3" stroke="#f5f5f3" stroke-width=".75">none</text>
<rect x="2030.6" y="2819.2" width="177" height="33.1" fill="#272725"/>
<rect x="2033.1" y="2821.7" width="172" height="28.1" fill="#555452"/>
<text class="tr" x="2035.8" y="2845.1" font-size="25.2" fill="#f5f5f3" stroke="#f5f5f3" stroke-width=".75">none</text>
<rect x="2228.1" y="2568.6" width="5.6" height="104" fill="#292927"/>
<rect x="2228.1" y="2579.2" width="5.6" height="2.9" fill="#5a5957"/>
<rect x="2236.1" y="2568.6" width="5.6" height="104" fill="#292927"/>
<rect x="2236.1" y="2579.2" width="5.6" height="2.9" fill="#5a5957"/>
<rect x="2249.3" y="2376.6" width="390.7" height="488.9" rx="10" fill="#555452"/>
<path d="M2249.3 2421.3v-34.7a10 10 0 0 1 10 -10h370.7a10 10 0 0 1 10 10v34.7z" fill="#777672"/>
<circle cx="2274.1" cy="2398.6" r="15.1" fill="#fcc350" stroke="#2b2b29" stroke-width="2.8"/>
<circle cx="2315.5" cy="2398.6" r="15.2" fill="#777672" stroke="#2b2b29" stroke-width="2.9"/>
<path d="M2306.1 2392.1h18.8l-9.4 16.8z" fill="#f5f5f3"/>
<circle cx="2357.5" cy="2398.6" r="15.2" fill="#777672" stroke="#2b2b29" stroke-width="2.9"/>
<g transform="translate(2357.2 2398.9) rotate(45) scale(.9)">
<path d="M0 -3V11" stroke="#f5f5f3" stroke-width="4.6" stroke-linecap="round"/>
<circle cx="0" cy="-6.4" r="6" fill="#f5f5f3"/>
<rect x="-2.3" y="-13.5" width="4.6" height="7.4" fill="#777672"/>
</g>
<text class="tb" x="2386.1" y="2408.4" font-size="26.4" fill="#f5f5f3" textLength="125">Maag EQ4</text>
<circle cx="2615.1" cy="2398.6" r="15.2" fill="#777672" stroke="#2b2b29" stroke-width="2.9"/>
<g transform="translate(2615.1 2398.6) scale(.95)" fill="none" stroke="#f5f5f3" stroke-width="2.5">
<path d="M-7.6 1.2A7.6 7.6 0 0 1 1.8 -7.4"/><path d="M7.6 -1.2A7.6 7.6 0 0 1 -1.8 7.4"/>
<path d="M-11.6 -1.6h8l-4 5.6z" fill="#f5f5f3" stroke="none"/><path d="M11.6 1.6h-8l4 -5.6z" fill="#f5f5f3" stroke="none"/>
</g>
<circle cx="2279.2" cy="2450.7" r="15.2" fill="#6f6e6b" stroke="#2b2b29" stroke-width="2.9"/>
<g transform="translate(2279.8 2451.3) scale(1.12)">
<path d="M-8.6 -6.6h6.2l1.6 2.2h6.6v2.4h-10l-3.2 8.4h-1.2z" fill="#b9b8b4"/>
<path d="M-4.2 -1h13.6l-3.2 8h-13.4z" fill="#e9e9e6"/>
</g>
<circle cx="2323.5" cy="2450.7" r="15.2" fill="#6f6e6b" stroke="#2b2b29" stroke-width="2.9"/>
<g transform="translate(2323.5 2451) scale(1.1)">
<path d="M-8.4 -8.6h13l3.8 3.6v13.2h-16.8z" fill="#f5f5f3"/>
<rect x="-3.6" y="-6.2" width="8" height="4.4" fill="#6a6966"/>
</g>
<rect x="2351.4" y="2434" width="275.1" height="33" fill="#272725"/>
<rect x="2353.9" y="2436.5" width="270.1" height="28" fill="#3d3c3a"/>
<text class="tr" x="2356.6" y="2459.8" font-size="25.2" fill="#f5f5f3" stroke="#f5f5f3" stroke-width=".75">Default</text>
<path d="M2604 2444.9h17l-8.5 11.6z" fill="#f5f5f3"/>
<rect x="2262.5" y="2480" width="364.2" height="325" rx="9" fill="#232220"/>
<circle cx="2279.2" cy="2789" r="15.2" fill="none" stroke="#fcc350" stroke-width="3.6"/>
<rect x="2262.3" y="2819.2" width="177.2" height="33.1" fill="#272725"/>
<rect x="2264.8" y="2821.7" width="172.2" height="28.1" fill="#3d3c3a"/>
<text class="tr" x="2267.5" y="2845.1" font-size="25.2" fill="#f5f5f3" stroke="#f5f5f3" stroke-width=".75">none</text>
<path d="M2417 2830.1h17l-8.5 11.6z" fill="#f5f5f3"/>
<rect x="2449.9" y="2819.2" width="177" height="33.1" fill="#272725"/>
<rect x="2452.4" y="2821.7" width="172" height="28.1" fill="#3d3c3a"/>
<text class="tr" x="2455.1" y="2845.1" font-size="25.2" fill="#f5f5f3" stroke="#f5f5f3" stroke-width=".75">none</text>
<path d="M2604.4 2830.1h17l-8.5 11.6z" fill="#f5f5f3"/>
<rect x="2647.4" y="2568.6" width="5.6" height="104" fill="#292927"/>
<rect x="2647.4" y="2579.2" width="5.6" height="2.9" fill="#5a5957"/>
<rect x="2655.4" y="2568.6" width="5.6" height="104" fill="#292927"/>
<rect x="2655.4" y="2579.2" width="5.6" height="2.9" fill="#5a5957"/>
<rect x="2667.5" y="2376.6" width="619" height="488.9" rx="10" fill="#555452"/>
<path d="M2667.5 2421.3v-34.7a10 10 0 0 1 10 -10h599a10 10 0 0 1 10 10v34.7z" fill="#777672"/>
<circle cx="2692.3" cy="2398.6" r="15.1" fill="#fcc350" stroke="#2b2b29" stroke-width="2.8"/>
<circle cx="2733.7" cy="2398.6" r="15.2" fill="#777672" stroke="#2b2b29" stroke-width="2.9"/>
<path d="M2724.3 2392.1h18.8l-9.4 16.8z" fill="#f5f5f3"/>
<circle cx="2775.7" cy="2398.6" r="15.2" fill="#777672" stroke="#2b2b29" stroke-width="2.9"/>
<g transform="translate(2775.4 2398.9) rotate(45) scale(.9)">
<path d="M0 -3V11" stroke="#f5f5f3" stroke-width="4.6" stroke-linecap="round"/>
<circle cx="0" cy="-6.4" r="6" fill="#f5f5f3"/>
<rect x="-2.3" y="-13.5" width="4.6" height="7.4" fill="#777672"/>
</g>
<text class="tb" x="2804.3" y="2408.4" font-size="26.4" fill="#f5f5f3" textLength="216.5">FabFilter Pro-Q 2</text>
<circle cx="3261.6" cy="2398.6" r="15.2" fill="#777672" stroke="#2b2b29" stroke-width="2.9"/>
<g transform="translate(3261.6 2398.6) scale(.95)" fill="none" stroke="#f5f5f3" stroke-width="2.5">
<path d="M-7.6 1.2A7.6 7.6 0 0 1 1.8 -7.4"/><path d="M7.6 -1.2A7.6 7.6 0 0 1 -1.8 7.4"/>
<path d="M-11.6 -1.6h8l-4 5.6z" fill="#f5f5f3" stroke="none"/><path d="M11.6 1.6h-8l4 -5.6z" fill="#f5f5f3" stroke="none"/>
</g>
<rect x="2681.5" y="2434" width="188.5" height="33" fill="#272725"/>
<rect x="2684" y="2436.5" width="183.5" height="28" fill="#777672"/>
<text class="tr" x="2775.8" y="2459.8" font-size="25.2" fill="#f5f5f3" text-anchor="middle" stroke="#f5f5f3" stroke-width=".75">Sidechain</text>
<text class="tr" x="2684" y="2501" font-size="25.2" fill="#f5f5f3" stroke="#f5f5f3" stroke-width=".75">Audio From</text>
<rect x="2681.5" y="2510" width="188.5" height="32.3" fill="#272725"/>
<rect x="2684" y="2512.5" width="183.5" height="27.3" fill="#555452"/>
<text class="tr" x="2687.3" y="2535.2" font-size="25.2" fill="#f5f5f3" stroke="#f5f5f3" stroke-width=".75">No Input</text>
<path d="M2847.6 2520.4h17l-8.5 11.6z" fill="#f5f5f3"/>
<rect x="2681.5" y="2551.4" width="188.5" height="33" fill="#272725"/>
<rect x="2684" y="2553.9" width="183.5" height="28" fill="#555452"/>
<text class="tr" x="2775.1" y="2624" font-size="25.2" fill="#f5f5f3" text-anchor="middle" stroke="#f5f5f3" stroke-width=".75">Gain</text>
<path d="M2758.8 2637A31.6 31.6 0 0 1 2793.6 2689.7" stroke="#3e3d3b" stroke-width="4.6" fill="none"/>
<path d="M2757.4 2689.7A31.6 31.6 0 0 1 2758.8 2637" stroke="#b5b4b0" stroke-width="4.6" fill="none"/>
<path d="M2775 2663L2757.7 2635.4" stroke="#3c3b39" stroke-width="5" fill="none"/>
<text class="tr" x="2775.1" y="2718" font-size="25.2" fill="#f5f5f3" text-anchor="middle" stroke="#f5f5f3" stroke-width=".75">0.00 dB</text>
<text class="tr" x="2776.1" y="2753.8" font-size="25.2" fill="#f5f5f3" text-anchor="middle" stroke="#f5f5f3" stroke-width=".75">Mix</text>
<path d="M2757.4 2819.6A31.6 31.6 0 1 1 2793.6 2819.6" stroke="#b5b4b0" stroke-width="4.6" fill="none"/>
<path d="M2776 2794.6L2792.2 2822.7" stroke="#3c3b39" stroke-width="5" fill="none"/>
<text class="tr" x="2776.1" y="2847" font-size="25.2" fill="#f5f5f3" text-anchor="middle" stroke="#f5f5f3" stroke-width=".75">100 %</text>
<path d="M2890.7 2431V2626.6M2890.7 2660.2V2855" stroke="#3a3937" stroke-width="2.2" fill="none"/>
<path d="M2886 2634.8v17.2l10.8 -8.6z" fill="#3a3937"/>
<circle cx="2925.8" cy="2450.7" r="15.2" fill="#6f6e6b" stroke="#2b2b29" stroke-width="2.9"/>
<g transform="translate(2926.4 2451.3) scale(1.12)">
<path d="M-8.6 -6.6h6.2l1.6 2.2h6.6v2.4h-10l-3.2 8.4h-1.2z" fill="#b9b8b4"/>
<path d="M-4.2 -1h13.6l-3.2 8h-13.4z" fill="#e9e9e6"/>
</g>
<circle cx="2970.1" cy="2450.7" r="15.2" fill="#6f6e6b" stroke="#2b2b29" stroke-width="2.9"/>
<g transform="translate(2970.1 2451) scale(1.1)">
<path d="M-8.4 -8.6h13l3.8 3.6v13.2h-16.8z" fill="#f5f5f3"/>
<rect x="-3.6" y="-6.2" width="8" height="4.4" fill="#6a6966"/>
</g>
<rect x="2998" y="2434" width="275.1" height="33" fill="#272725"/>
<rect x="3000.5" y="2436.5" width="270.1" height="28" fill="#555452"/>
<text class="tr" x="3003.2" y="2459.8" font-size="25.2" fill="#f5f5f3" stroke="#f5f5f3" stroke-width=".75">Default Setting</text>
<rect x="2909.1" y="2480" width="364.2" height="325" rx="9" fill="#232220"/>
<circle cx="2925.8" cy="2789" r="15.2" fill="none" stroke="#fcc350" stroke-width="3.6"/>
<rect x="2908.9" y="2819.2" width="177.2" height="33.1" fill="#272725"/>
<rect x="2911.4" y="2821.7" width="172.2" height="28.1" fill="#555452"/>
<text class="tr" x="2914.1" y="2845.1" font-size="25.2" fill="#f5f5f3" stroke="#f5f5f3" stroke-width=".75">none</text>
<rect x="3096.5" y="2819.2" width="177" height="33.1" fill="#272725"/>
<rect x="3099" y="2821.7" width="172" height="28.1" fill="#555452"/>
<text class="tr" x="3101.7" y="2845.1" font-size="25.2" fill="#f5f5f3" stroke="#f5f5f3" stroke-width=".75">none</text>
<rect x="3293.9" y="2568.6" width="5.6" height="104" fill="#292927"/>
<rect x="3293.9" y="2579.2" width="5.6" height="2.9" fill="#5a5957"/>
<rect x="3301.9" y="2568.6" width="5.6" height="104" fill="#292927"/>
<rect x="3301.9" y="2579.2" width="5.6" height="2.9" fill="#5a5957"/>
<rect x="3315.5" y="2376.6" width="619" height="488.9" rx="10" fill="#555452"/>
<path d="M3315.5 2421.3v-34.7a10 10 0 0 1 10 -10h599a10 10 0 0 1 10 10v34.7z" fill="#777672"/>
<circle cx="3340.3" cy="2398.6" r="15.1" fill="#fcc350" stroke="#2b2b29" stroke-width="2.8"/>
<circle cx="3381.7" cy="2398.6" r="15.2" fill="#777672" stroke="#2b2b29" stroke-width="2.9"/>
<path d="M3372.3 2392.1h18.8l-9.4 16.8z" fill="#f5f5f3"/>
<circle cx="3423.7" cy="2398.6" r="15.2" fill="#777672" stroke="#2b2b29" stroke-width="2.9"/>
<g transform="translate(3423.4 2398.9) rotate(45) scale(.9)">
<path d="M0 -3V11" stroke="#f5f5f3" stroke-width="4.6" stroke-linecap="round"/>
<circle cx="0" cy="-6.4" r="6" fill="#f5f5f3"/>
<rect x="-2.3" y="-13.5" width="4.6" height="7.4" fill="#777672"/>
</g>
<text class="tb" x="3452.3" y="2408.4" font-size="26.4" fill="#f5f5f3" textLength="215">FabFilter Pro-MB</text>
<circle cx="3909.6" cy="2398.6" r="15.2" fill="#777672" stroke="#2b2b29" stroke-width="2.9"/>
<g transform="translate(3909.6 2398.6) scale(.95)" fill="none" stroke="#f5f5f3" stroke-width="2.5">
<path d="M-7.6 1.2A7.6 7.6 0 0 1 1.8 -7.4"/><path d="M7.6 -1.2A7.6 7.6 0 0 1 -1.8 7.4"/>
<path d="M-11.6 -1.6h8l-4 5.6z" fill="#f5f5f3" stroke="none"/><path d="M11.6 1.6h-8l4 -5.6z" fill="#f5f5f3" stroke="none"/>
</g>
<rect x="3329.5" y="2434" width="188.5" height="33" fill="#272725"/>
<rect x="3332" y="2436.5" width="183.5" height="28" fill="#777672"/>
<text class="tr" x="3423.8" y="2459.8" font-size="25.2" fill="#f5f5f3" text-anchor="middle" stroke="#f5f5f3" stroke-width=".75">Sidechain</text>
<text class="tr" x="3332" y="2501" font-size="25.2" fill="#f5f5f3" stroke="#f5f5f3" stroke-width=".75">Audio From</text>
<rect x="3329.5" y="2510" width="188.5" height="32.3" fill="#272725"/>
<rect x="3332" y="2512.5" width="183.5" height="27.3" fill="#555452"/>
<text class="tr" x="3335.3" y="2535.2" font-size="25.2" fill="#f5f5f3" stroke="#f5f5f3" stroke-width=".75">No Input</text>
<path d="M3495.6 2520.4h17l-8.5 11.6z" fill="#f5f5f3"/>
<rect x="3329.5" y="2551.4" width="188.5" height="33" fill="#272725"/>
<rect x="3332" y="2553.9" width="183.5" height="28" fill="#555452"/>
<text class="tr" x="3423.1" y="2624" font-size="25.2" fill="#f5f5f3" text-anchor="middle" stroke="#f5f5f3" stroke-width=".75">Gain</text>
<path d="M3406.8 2637A31.6 31.6 0 0 1 3441.6 2689.7" stroke="#3e3d3b" stroke-width="4.6" fill="none"/>
<path d="M3405.4 2689.7A31.6 31.6 0 0 1 3406.8 2637" stroke="#b5b4b0" stroke-width="4.6" fill="none"/>
<path d="M3423 2663L3405.7 2635.4" stroke="#3c3b39" stroke-width="5" fill="none"/>
<text class="tr" x="3423.1" y="2718" font-size="25.2" fill="#f5f5f3" text-anchor="middle" stroke="#f5f5f3" stroke-width=".75">0.00 dB</text>
<text class="tr" x="3424.1" y="2753.8" font-size="25.2" fill="#f5f5f3" text-anchor="middle" stroke="#f5f5f3" stroke-width=".75">Mix</text>
<path d="M3405.4 2819.6A31.6 31.6 0 1 1 3441.6 2819.6" stroke="#b5b4b0" stroke-width="4.6" fill="none"/>
<path d="M3424 2794.6L3440.2 2822.7" stroke="#3c3b39" stroke-width="5" fill="none"/>
<text class="tr" x="3424.1" y="2847" font-size="25.2" fill="#f5f5f3" text-anchor="middle" stroke="#f5f5f3" stroke-width=".75">100 %</text>
<path d="M3538.7 2431V2626.6M3538.7 2660.2V2855" stroke="#3a3937" stroke-width="2.2" fill="none"/>
<path d="M3534 2634.8v17.2l10.8 -8.6z" fill="#3a3937"/>
<circle cx="3573.8" cy="2450.7" r="15.2" fill="#6f6e6b" stroke="#2b2b29" stroke-width="2.9"/>
<g transform="translate(3574.4 2451.3) scale(1.12)">
<path d="M-8.6 -6.6h6.2l1.6 2.2h6.6v2.4h-10l-3.2 8.4h-1.2z" fill="#b9b8b4"/>
<path d="M-4.2 -1h13.6l-3.2 8h-13.4z" fill="#e9e9e6"/>
</g>
<circle cx="3618.1" cy="2450.7" r="15.2" fill="#6f6e6b" stroke="#2b2b29" stroke-width="2.9"/>
<g transform="translate(3618.1 2451) scale(1.1)">
<path d="M-8.4 -8.6h13l3.8 3.6v13.2h-16.8z" fill="#f5f5f3"/>
<rect x="-3.6" y="-6.2" width="8" height="4.4" fill="#6a6966"/>
</g>
<rect x="3646" y="2434" width="275.1" height="33" fill="#272725"/>
<rect x="3648.5" y="2436.5" width="270.1" height="28" fill="#555452"/>
<text class="tr" x="3651.2" y="2459.8" font-size="25.2" fill="#f5f5f3" stroke="#f5f5f3" stroke-width=".75">Default Setting</text>
<rect x="3557.1" y="2480" width="364.2" height="325" rx="9" fill="#232220"/>
<circle cx="3573.8" cy="2789" r="15.2" fill="none" stroke="#fcc350" stroke-width="3.6"/>
<rect x="3556.9" y="2819.2" width="177.2" height="33.1" fill="#272725"/>
<rect x="3559.4" y="2821.7" width="172.2" height="28.1" fill="#555452"/>
<text class="tr" x="3562.1" y="2845.1" font-size="25.2" fill="#f5f5f3" stroke="#f5f5f3" stroke-width=".75">none</text>
<rect x="3744.5" y="2819.2" width="177" height="33.1" fill="#272725"/>
<rect x="3747" y="2821.7" width="172" height="28.1" fill="#555452"/>
<text class="tr" x="3749.7" y="2845.1" font-size="25.2" fill="#f5f5f3" stroke="#f5f5f3" stroke-width=".75">none</text>
<rect x="3941.9" y="2568.6" width="5.6" height="104" fill="#292927"/>
<rect x="3941.9" y="2579.2" width="5.6" height="2.9" fill="#5a5957"/>
<rect x="3949.9" y="2568.6" width="5.6" height="104" fill="#292927"/>
<rect x="3949.9" y="2579.2" width="5.6" height="2.9" fill="#5a5957"/>
<rect x="3963.5" y="2376.6" width="390.7" height="488.9" rx="10" fill="#555452"/>
<path d="M3963.5 2421.3v-34.7a10 10 0 0 1 10 -10h370.7a10 10 0 0 1 10 10v34.7z" fill="#777672"/>
<circle cx="3988.3" cy="2398.6" r="15.1" fill="#fcc350" stroke="#2b2b29" stroke-width="2.8"/>
<circle cx="4029.7" cy="2398.6" r="15.2" fill="#777672" stroke="#2b2b29" stroke-width="2.9"/>
<path d="M4020.3 2392.1h18.8l-9.4 16.8z" fill="#f5f5f3"/>
<circle cx="4071.7" cy="2398.6" r="15.2" fill="#777672" stroke="#2b2b29" stroke-width="2.9"/>
<g transform="translate(4071.4 2398.9) rotate(45) scale(.9)">
<path d="M0 -3V11" stroke="#f5f5f3" stroke-width="4.6" stroke-linecap="round"/>
<circle cx="0" cy="-6.4" r="6" fill="#f5f5f3"/>
<rect x="-2.3" y="-13.5" width="4.6" height="7.4" fill="#777672"/>
</g>
<text class="tb" x="4100.3" y="2408.4" font-size="26.4" fill="#f5f5f3" textLength="176">Sonalksis Fr...</text>
<circle cx="4329.3" cy="2398.6" r="15.2" fill="#777672" stroke="#2b2b29" stroke-width="2.9"/>
<g transform="translate(4329.3 2398.6) scale(.95)" fill="none" stroke="#f5f5f3" stroke-width="2.5">
<path d="M-7.6 1.2A7.6 7.6 0 0 1 1.8 -7.4"/><path d="M7.6 -1.2A7.6 7.6 0 0 1 -1.8 7.4"/>
<path d="M-11.6 -1.6h8l-4 5.6z" fill="#f5f5f3" stroke="none"/><path d="M11.6 1.6h-8l4 -5.6z" fill="#f5f5f3" stroke="none"/>
</g>
<circle cx="3993.4" cy="2450.7" r="15.2" fill="#6f6e6b" stroke="#2b2b29" stroke-width="2.9"/>
<g transform="translate(3994 2451.3) scale(1.12)">
<path d="M-8.6 -6.6h6.2l1.6 2.2h6.6v2.4h-10l-3.2 8.4h-1.2z" fill="#b9b8b4"/>
<path d="M-4.2 -1h13.6l-3.2 8h-13.4z" fill="#e9e9e6"/>
</g>
<circle cx="4037.7" cy="2450.7" r="15.2" fill="#6f6e6b" stroke="#2b2b29" stroke-width="2.9"/>
<g transform="translate(4037.7 2451) scale(1.1)">
<path d="M-8.4 -8.6h13l3.8 3.6v13.2h-16.8z" fill="#f5f5f3"/>
<rect x="-3.6" y="-6.2" width="8" height="4.4" fill="#6a6966"/>
</g>
<rect x="4065.6" y="2434" width="275.1" height="33" fill="#272725"/>
<rect x="4068.1" y="2436.5" width="270.1" height="28" fill="#555452"/>
<text class="tr" x="4070.8" y="2459.8" font-size="25.2" fill="#f5f5f3" stroke="#f5f5f3" stroke-width=".75">None</text>
<rect x="3976.7" y="2480" width="364.2" height="325" rx="9" fill="#232220"/>
<circle cx="3993.4" cy="2789" r="15.2" fill="none" stroke="#fcc350" stroke-width="3.6"/>
<rect x="3976.5" y="2819.2" width="177.2" height="33.1" fill="#272725"/>
<rect x="3979" y="2821.7" width="172.2" height="28.1" fill="#3d3c3a"/>
<text class="tr" x="3981.7" y="2845.1" font-size="25.2" fill="#f5f5f3" stroke="#f5f5f3" stroke-width=".75">none</text>
<path d="M4131.2 2830.1h17l-8.5 11.6z" fill="#f5f5f3"/>
<rect x="4164.1" y="2819.2" width="177" height="33.1" fill="#272725"/>
<rect x="4166.6" y="2821.7" width="172" height="28.1" fill="#3d3c3a"/>
<text class="tr" x="4169.3" y="2845.1" font-size="25.2" fill="#f5f5f3" stroke="#f5f5f3" stroke-width=".75">none</text>
<path d="M4318.6 2830.1h17l-8.5 11.6z" fill="#f5f5f3"/>
<rect x="4361.6" y="2568.6" width="5.6" height="104" fill="#292927"/>
<rect x="4361.6" y="2579.2" width="5.6" height="2.9" fill="#5a5957"/>
<rect x="4369.6" y="2568.6" width="5.6" height="104" fill="#292927"/>
<rect x="4369.6" y="2579.2" width="5.6" height="2.9" fill="#5a5957"/>
<rect x="4382.3" y="2376.6" width="390.7" height="488.9" rx="10" fill="#555452"/>
<path d="M4382.3 2421.3v-34.7a10 10 0 0 1 10 -10h370.7a10 10 0 0 1 10 10v34.7z" fill="#777672"/>
<circle cx="4407.1" cy="2398.6" r="15.1" fill="#fcc350" stroke="#2b2b29" stroke-width="2.8"/>
<circle cx="4448.5" cy="2398.6" r="15.2" fill="#777672" stroke="#2b2b29" stroke-width="2.9"/>
<path d="M4439.1 2392.1h18.8l-9.4 16.8z" fill="#f5f5f3"/>
<circle cx="4490.5" cy="2398.6" r="15.2" fill="#777672" stroke="#2b2b29" stroke-width="2.9"/>
<g transform="translate(4490.2 2398.9) rotate(45) scale(.9)">
<path d="M0 -3V11" stroke="#f5f5f3" stroke-width="4.6" stroke-linecap="round"/>
<circle cx="0" cy="-6.4" r="6" fill="#f5f5f3"/>
<rect x="-2.3" y="-13.5" width="4.6" height="7.4" fill="#777672"/>
</g>
<text class="tb" x="4519.1" y="2408.4" font-size="26.4" fill="#f5f5f3" textLength="176">Sonalksis Fr...</text>
<circle cx="4748.1" cy="2398.6" r="15.2" fill="#777672" stroke="#2b2b29" stroke-width="2.9"/>
<g transform="translate(4748.1 2398.6) scale(.95)" fill="none" stroke="#f5f5f3" stroke-width="2.5">
<path d="M-7.6 1.2A7.6 7.6 0 0 1 1.8 -7.4"/><path d="M7.6 -1.2A7.6 7.6 0 0 1 -1.8 7.4"/>
<path d="M-11.6 -1.6h8l-4 5.6z" fill="#f5f5f3" stroke="none"/><path d="M11.6 1.6h-8l4 -5.6z" fill="#f5f5f3" stroke="none"/>
</g>
<circle cx="4412.2" cy="2450.7" r="15.2" fill="#6f6e6b" stroke="#2b2b29" stroke-width="2.9"/>
<g transform="translate(4412.8 2451.3) scale(1.12)">
<path d="M-8.6 -6.6h6.2l1.6 2.2h6.6v2.4h-10l-3.2 8.4h-1.2z" fill="#b9b8b4"/>
<path d="M-4.2 -1h13.6l-3.2 8h-13.4z" fill="#e9e9e6"/>
</g>
<circle cx="4456.5" cy="2450.7" r="15.2" fill="#6f6e6b" stroke="#2b2b29" stroke-width="2.9"/>
<g transform="translate(4456.5 2451) scale(1.1)">
<path d="M-8.4 -8.6h13l3.8 3.6v13.2h-16.8z" fill="#f5f5f3"/>
<rect x="-3.6" y="-6.2" width="8" height="4.4" fill="#6a6966"/>
</g>
<rect x="4484.4" y="2434" width="275.1" height="33" fill="#272725"/>
<rect x="4486.9" y="2436.5" width="270.1" height="28" fill="#555452"/>
<text class="tr" x="4489.6" y="2459.8" font-size="25.2" fill="#f5f5f3" stroke="#f5f5f3" stroke-width=".75">None</text>
<rect x="4395.5" y="2480" width="364.2" height="325" rx="9" fill="#232220"/>
<circle cx="4412.2" cy="2789" r="15.2" fill="none" stroke="#fcc350" stroke-width="3.6"/>
<rect x="4395.3" y="2819.2" width="177.2" height="33.1" fill="#272725"/>
<rect x="4397.8" y="2821.7" width="172.2" height="28.1" fill="#3d3c3a"/>
<text class="tr" x="4400.5" y="2845.1" font-size="25.2" fill="#f5f5f3" stroke="#f5f5f3" stroke-width=".75">none</text>
<path d="M4550 2830.1h17l-8.5 11.6z" fill="#f5f5f3"/>
<rect x="4582.9" y="2819.2" width="177" height="33.1" fill="#272725"/>
<rect x="4585.4" y="2821.7" width="172" height="28.1" fill="#3d3c3a"/>
<text class="tr" x="4588.1" y="2845.1" font-size="25.2" fill="#f5f5f3" stroke="#f5f5f3" stroke-width=".75">none</text>
<path d="M4737.4 2830.1h17l-8.5 11.6z" fill="#f5f5f3"/>
<rect x="4780.4" y="2568.6" width="5.6" height="104" fill="#292927"/>
<rect x="4780.4" y="2579.2" width="5.6" height="2.9" fill="#5a5957"/>
<rect x="4788.4" y="2568.6" width="5.6" height="104" fill="#292927"/>
<rect x="4788.4" y="2579.2" width="5.6" height="2.9" fill="#5a5957"/>
<rect x="4801.3" y="2376.6" width="233.7" height="488.9" fill="#555452"/>
</g>
<rect x="0" y="2876" width="5035" height="85" fill="#464742"/>
<rect x="-20" y="2897.4" width="4631" height="56" rx="9" fill="#333331"/>
<rect x="-20" y="2904.2" width="4624" height="42.2" rx="3" fill="#555452"/>
<rect x="4632.2" y="2897.4" width="430" height="56" rx="9" fill="#333331"/>
<rect x="4639.8" y="2904.2" width="420" height="42.2" fill="#777672"/>
<polygon points="4639.8,2914.7 4653.7,2914.6 4661.5,2911.7 4664.5,2910.7 4706,2910.7 4709,2911.7 4713.2,2914.6 4720.6,2914.6 4731,2911.5 4735,2910.5 4820.5,2910.5 4824.5,2911.5 4830.1,2914.6 4980.5,2914.6 4987,2911.5 4989.5,2910.5 5045,2910.5 5047.5,2911.5 5051,2914.6 5045,2914.6 5045,2916.8 5051,2916.8 5047.5,2919.9 5045,2920.9 4989.5,2920.9 4987,2919.9 4980.5,2916.8 4830.1,2916.8 4824.5,2919.9 4820.5,2920.9 4735,2920.9 4731,2919.9 4720.6,2916.8 4713.2,2916.8 4709,2919.7 4706,2920.7 4664.5,2920.7 4661.5,2919.7 4653.7,2916.8 4639.8,2916.7" fill="#0d0d0c"/>
<polygon points="4639.8,2936 4653.7,2935.9 4661.5,2933 4664.5,2932 4706,2932 4709,2933 4713.2,2935.9 4720.6,2935.9 4731,2932.8 4735,2931.8 4820.5,2931.8 4824.5,2932.8 4830.1,2935.9 4980.5,2935.9 4987,2932.8 4989.5,2931.8 5045,2931.8 5047.5,2932.8 5051,2935.9 5045,2935.9 5045,2938.1 5051,2938.1 5047.5,2941.2 5045,2942.2 4989.5,2942.2 4987,2941.2 4980.5,2938.1 4830.1,2938.1 4824.5,2941.2 4820.5,2942.2 4735,2942.2 4731,2941.2 4720.6,2938.1 4713.2,2938.1 4709,2941 4706,2942 4664.5,2942 4661.5,2941 4653.7,2938.1 4639.8,2938" fill="#0d0d0c"/>
</svg>
</body></html>
